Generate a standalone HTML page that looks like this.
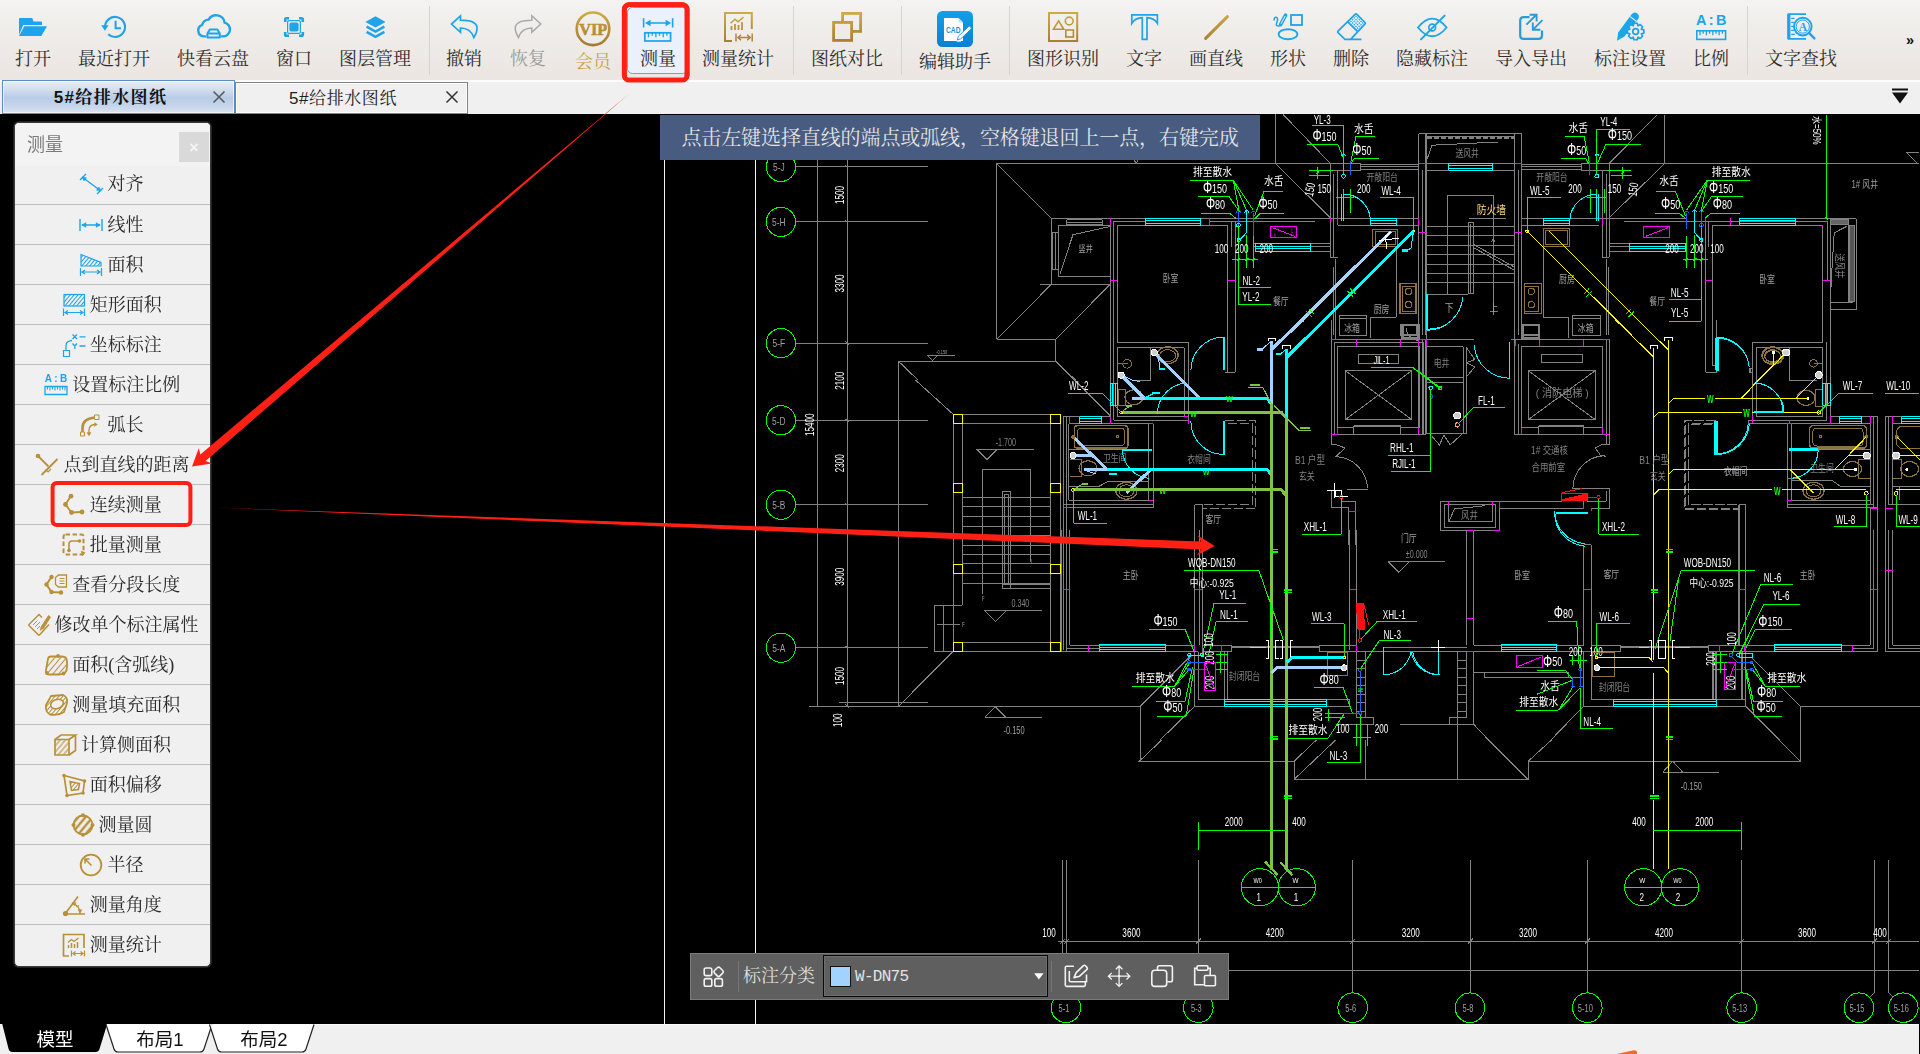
<!DOCTYPE html>
<html lang="zh-CN">
<head>
<meta charset="utf-8">
<title>CAD 测量</title>
<style>
*{box-sizing:border-box;margin:0;padding:0}
html,body{width:1920px;height:1054px;overflow:hidden;background:#000}
body{position:relative;font-family:"Liberation Serif","Noto Serif CJK SC",serif;color:#333}
#toolbar{position:absolute;left:0;top:0;width:1920px;height:80px;background:linear-gradient(#f4f3f1 0,#f0eeeb 30%,#ece7e3 85%,#ebe6e1 100%)}
.ti{position:absolute;top:0;height:80px;width:0}
.ti svg{position:absolute;left:-16px;top:11px;width:32px;height:32px;overflow:visible}
.ti span{position:absolute;left:-60px;width:120px;top:47px;text-align:center;font-size:18px;line-height:24px;white-space:nowrap;color:#2e2e2e;letter-spacing:0}
.ti.dis span{color:#9a9a9a}
.ti.low span{top:50px}
.ti.vip span{color:#c9a243}
.sep{position:absolute;top:6px;height:69px;width:1px;background:#d6d3d0}
#tabs{position:absolute;left:0;top:80px;width:1920px;height:34px;background:linear-gradient(#fbfbfb 0,#fbfbfb 2px,#f0f0f0 2px)}
.tab{position:absolute;top:1px;height:32px;font-family:"Liberation Sans","Noto Serif CJK SC",serif;font-size:17px;line-height:31px;text-align:center;color:#222}
#canvas{position:absolute;left:0;top:114px;width:1920px;height:910px;overflow:hidden;background:#000}
#bottom{position:absolute;left:0;top:1024px;width:1919px;height:30px;background:#f0f0f0;border-top:1px solid #fbfbfb}
#panel{position:absolute;left:14px;top:122px;width:197px;height:845px;background:#f0f0f0;border:1px solid #3a3a3a;border-radius:5px;box-shadow:0 0 0 1px #222;overflow:hidden}
.prow{position:absolute;left:0;width:195px;height:40px;border-top:1px solid #bdbdbd;font-size:18px;line-height:41px;white-space:nowrap;color:#2a2a2a}
.prow span{position:absolute;top:0}
.prow svg{position:absolute;top:8px;width:24px;height:24px;overflow:visible}
</style>
</head>
<body>
<div id="toolbar">
<div class="sep" style="left:429px"></div>
<div class="sep" style="left:793px"></div>
<div class="sep" style="left:901px"></div>
<div class="sep" style="left:1009px"></div>
<div class="sep" style="left:1747px"></div>
<svg width="1920" height="84" viewBox="0 0 1920 84" style="position:absolute;left:0;top:0;overflow:visible"><defs><linearGradient id="gold" x1="0" y1="0" x2="0" y2="1" gradientUnits="objectBoundingBox"><stop offset="0" stop-color="#d0aa45"/><stop offset="1" stop-color="#a67f33"/></linearGradient><linearGradient id="goldu" x1="0" y1="11" x2="0" y2="44" gradientUnits="userSpaceOnUse"><stop offset="0" stop-color="#d2ac46"/><stop offset="1" stop-color="#a47c31"/></linearGradient><linearGradient id="cadbg" x1="0" y1="0" x2="0" y2="1"><stop offset="0" stop-color="#12a0ea"/><stop offset="1" stop-color="#0b7fd0"/></linearGradient><pattern id="dots" width="2.4" height="2.4" patternUnits="userSpaceOnUse" patternTransform="rotate(45)"><rect width="2.4" height="2.4" fill="#eaf4fb"/><rect width="1.4" height="1.4" fill="#1da4ea"/></pattern></defs>
<rect x="627.5" y="7.5" width="60" height="66" rx="5" fill="#eaf1fc" stroke="#6d9eea" stroke-width="1"/>
<path d="M19,18.8Q19,18 19.8,18H32.2L33.6,21.5H41.4Q42,21.5 42,22.2V25H23.3L19,34.8Z" fill="#1da4ea"/>
<path d="M24.3,26.2H47L41.3,36H19Z" fill="#1da4ea"/>
<path d="M105,27A10,10 0 1 1 108.2,34.3" fill="none" stroke="#1da4ea" stroke-width="2.2"/>
<path d="M101.2,25.2H108.6L104.9,30.8Z" fill="#1da4ea"/>
<path d="M115.6,20.8V28.2H121" fill="none" stroke="#1da4ea" stroke-width="2"/>
<path d="M205.2,36.4H203.6A6,6 0 0 1 202.2,24.8A7,7 0 0 1 208.6,19.6A8.6,8.6 0 0 1 224.6,22.6A7,7 0 0 1 222.6,36.4H221.8" fill="none" stroke="#1da4ea" stroke-width="2.4" stroke-linecap="round"/>
<path d="M209.8,29.4H217.4L219.8,33.6V37.4H207.4V33.6ZM207.4,33.6H219.8" fill="none" stroke="#1da4ea" stroke-width="2" stroke-linejoin="round"/>
<path d="M285.2,22V19.5Q285.2,18.2 286.5,18.2H289M299,18.2H301.5Q302.8,18.2 302.8,19.5V22M302.8,32V34.5Q302.8,35.8 301.5,35.8H299M289,35.8H286.5Q285.2,35.8 285.2,34.5V32" fill="none" stroke="#1da4ea" stroke-width="2.6"/>
<rect x="287.6" y="20.6" width="12.8" height="12.8" rx="1.5" fill="none" stroke="#1da4ea" stroke-width="1.2"/>
<rect x="289.4" y="22.4" width="9.2" height="9.2" rx="2" fill="#1da4ea"/>
<path d="M375.5,16.2L385.6,21.9L375.5,27.6L365.4,21.9Z" fill="#1da4ea"/>
<path d="M366.6,26.6L375.5,31.6L384.4,26.6M366.6,31.8L375.5,36.8L384.4,31.8" fill="none" stroke="#1da4ea" stroke-width="2.6"/>
<path d="M460.5,15.8L451.5,24L460.5,32.3V28C467,28 471.5,30.5 473.8,37.5C476,34 477.5,31 477,27C476,22 470,20.2 460.5,20.2Z" fill="none" stroke="#1da4ea" stroke-width="1.7" stroke-linejoin="miter"/>
<g transform="translate(992.3,0) scale(-1,1)"><path d="M460.5,15.8L451.5,24L460.5,32.3V28C467,28 471.5,30.5 473.8,37.5C476,34 477.5,31 477,27C476,22 470,20.2 460.5,20.2Z" fill="none" stroke="#a9a9a9" stroke-width="1.5"/></g>
<circle cx="593" cy="28.8" r="16.3" fill="none" stroke="url(#goldu)" stroke-width="2.6"/>
<text x="593.2" y="34.6" text-anchor="middle" font-family="Liberation Serif,serif" font-weight="bold" font-size="16.5" fill="url(#goldu)" stroke="#b8892c" stroke-width="0.5" textLength="28" lengthAdjust="spacingAndGlyphs">VIP</text>
<path d="M643.6,18.2V27.6M672.6,18.2V27.6M647,23H669" stroke="#1da4ea" stroke-width="1.6" fill="none"/>
<path d="M645,23L650.6,19.8V26.2ZM671.2,23L665.6,19.8V26.2Z" fill="#1da4ea"/>
<rect x="644.8" y="32.8" width="25.800000000000068" height="8.200000000000003" fill="none" stroke="#1da4ea" stroke-width="1.7"/><path d="M648.5,32.8v4.5M652.2,32.8v3M655.9,32.8v4.5M659.5,32.8v3M663.2,32.8v4.5M666.9,32.8v3" stroke="#1da4ea" stroke-width="1.3" fill="none"/>
<path d="M751.8,29V13H725V41H732" fill="none" stroke="url(#goldu)" stroke-width="2"/>
<path d="M731.5,30v-4M735,30v-6M738.5,30v-5M742,30v-8" stroke="url(#goldu)" stroke-width="1.8" fill="none"/>
<path d="M730.5,23.2L735,19.2L738,21.8L743.5,17.2" stroke="url(#goldu)" stroke-width="1.5" fill="none"/>
<path d="M736,33.5V41.5M752.2,33.5V41.5M738,37.5H750.2M741,34.8L738,37.5L741,40.2M747.2,34.8L750.2,37.5L747.2,40.2" stroke="url(#goldu)" stroke-width="1.5" fill="none"/>
<rect x="842.6" y="13.4" width="18" height="18" fill="none" stroke="url(#goldu)" stroke-width="2.8"/>
<rect x="833.6" y="22.4" width="18" height="18" fill="#eeebe8" stroke="url(#goldu)" stroke-width="2.8"/>
<rect x="937" y="11" width="36" height="36" rx="5.5" fill="url(#cadbg)"/>
<path d="M944,18H958.5L963,22.5V41H944Z" fill="#fff"/><path d="M958.5,18V22.5H963Z" fill="#bfe3f8"/>
<text x="946" y="32.6" font-family="Liberation Sans,sans-serif" font-weight="bold" font-size="8.6" fill="#1591dc" textLength="14.5" lengthAdjust="spacingAndGlyphs">CAD</text>
<path d="M957.2,40.2L958.4,36.2L968.2,26.8Q969.6,25.6 970.8,27Q971.8,28.4 970.6,29.6L960.8,38.8Z" fill="#fff" stroke="#1591dc" stroke-width="0.9"/><path d="M956.5,41.2H961" stroke="#fff" stroke-width="1"/>
<rect x="1049" y="13" width="28.2" height="28" fill="none" stroke="url(#goldu)" stroke-width="2"/>
<path d="M1053.4,29.3L1058.6,20.8L1063.8,29.3Z" fill="none" stroke="url(#goldu)" stroke-width="1.6"/>
<circle cx="1069.2" cy="21" r="3.9" fill="none" stroke="url(#goldu)" stroke-width="1.6"/>
<rect x="1065.8" y="30" width="7.6" height="7" fill="none" stroke="url(#goldu)" stroke-width="1.6"/>
<path d="M1131.8,14.8H1157.4V23.4C1155,19.6 1151.5,17.8 1147,17.7V39.4H1142.3V17.7C1137.8,17.8 1134.2,19.6 1131.8,23.4Z" fill="none" stroke="#1da4ea" stroke-width="1.7"/>
<path d="M1205.6,38.4L1227.4,16.6" stroke="url(#goldu)" stroke-width="3" stroke-linecap="round"/>
<rect x="1291" y="15" width="11" height="10" fill="none" stroke="#1da4ea" stroke-width="1.8"/>
<ellipse cx="1288" cy="34.2" rx="9.4" ry="5" fill="none" stroke="#1da4ea" stroke-width="1.9"/>
<path d="M1274.4,20.5C1273.2,16.5 1277.8,16 1277.6,19.6C1277.4,23.4 1273.6,26 1279.6,26.2" fill="none" stroke="#1da4ea" stroke-width="1.5"/>
<path d="M1285.6,15.2L1280.6,24.6" stroke="#1da4ea" stroke-width="3.6" stroke-linecap="round"/><path d="M1285.2,16L1281,23.8" stroke="#eef" stroke-width="1" />
<path d="M1348,22.2L1355.6,14.3Q1356.2,13.6 1356.9,14.3L1364.9,22.3Q1365.6,23 1364.9,23.7L1357.3,31.4Z" fill="url(#dots)"/>
<path d="M1355.3,14.2Q1356,13.5 1356.7,14.2L1365,22.5Q1365.7,23.2 1365,23.9L1350.6,39.4H1345L1338,32.6Q1337.3,31.9 1338,31.2ZM1348,22.2L1357.4,31.4M1350.6,39.4H1361.4" fill="none" stroke="#1da4ea" stroke-width="1.7" stroke-linejoin="round"/>
<path d="M1418,27.5Q1432.2,9.8 1446.6,27.5Q1432.2,45 1418,27.5Z" fill="none" stroke="#1da4ea" stroke-width="1.8"/>
<circle cx="1432.2" cy="27.5" r="3.4" fill="none" stroke="#1da4ea" stroke-width="1.7"/>
<path d="M1421,39.4L1444.6,15.6" stroke="#1da4ea" stroke-width="2" stroke-linecap="round"/>
<path d="M1529.5,17.2H1523.6Q1520.2,17.2 1520.2,20.6V35.4Q1520.2,38.8 1523.6,38.8H1538.6Q1542,38.8 1542,35.4V30.5" fill="none" stroke="#2a9bd6" stroke-width="2.2"/>
<path d="M1526.4,24.6L1536.4,14.8M1529.6,14.7H1536.6V21.6" fill="none" stroke="#2a9bd6" stroke-width="1.9"/>
<path d="M1542.4,20.2L1533,29.6M1532.8,22.6V29.8H1540.4" fill="none" stroke="#2a9bd6" stroke-width="1.9"/>
<path d="M1631.6,14.2Q1634.4,11.2 1637.4,13.6Q1640.4,16.4 1637.8,19.4L1624.4,36.6L1617,40.8L1618.2,32.4Z" fill="#1da4ea"/>
<path d="M1630.2,16.6L1636.4,21.4" stroke="#eef3f6" stroke-width="1.2"/>
<polygon points="1643.83,29.83 1643.83,33.17 1641.33,33.86 1641.32,33.89 1642.60,36.14 1640.24,38.50 1637.99,37.22 1637.96,37.23 1637.27,39.73 1633.93,39.73 1633.24,37.23 1633.21,37.22 1630.96,38.50 1628.60,36.14 1629.88,33.89 1629.87,33.86 1627.37,33.17 1627.37,29.83 1629.87,29.14 1629.88,29.11 1628.60,26.86 1630.96,24.50 1633.21,25.78 1633.24,25.77 1633.93,23.27 1637.27,23.27 1637.96,25.77 1637.99,25.78 1640.24,24.50 1642.60,26.86 1641.32,29.11 1641.33,29.14" fill="#efece9" stroke="#1da4ea" stroke-width="1.7" stroke-linejoin="round"/>
<circle cx="1635.6" cy="31.5" r="2.8" fill="none" stroke="#1da4ea" stroke-width="1.8"/>
<text x="1711.2" y="24.7" text-anchor="middle" font-family="Liberation Sans,sans-serif" font-weight="bold" font-size="14.5" fill="#1da4ea" textLength="30.5" lengthAdjust="spacing">A:B</text>
<rect x="1696.8" y="30.8" width="28.799999999999955" height="8.599999999999998" fill="none" stroke="#1da4ea" stroke-width="1.6"/><path d="M1700.0,30.8v4.5M1703.2,30.8v3M1706.4,30.8v4.5M1709.6,30.8v3M1712.8,30.8v4.5M1716.0,30.8v3M1719.2,30.8v4.5M1722.4,30.8v3" stroke="#1da4ea" stroke-width="1.3" fill="none"/>
<path d="M1806,14.2H1788.6V38.8H1806" fill="none" stroke="#1da4ea" stroke-width="1.8"/><path d="M1788.8,14V39" stroke="#1da4ea" stroke-width="3.2"/>
<path d="M1791.2,18.4h3.4M1791.2,22.4h2.6M1791.2,26.4h2.2M1791.2,30.4h2.6M1791.2,34.4h3.6" stroke="#1da4ea" stroke-width="1.2"/>
<circle cx="1802.8" cy="26.6" r="8.8" fill="#efece9" stroke="#1da4ea" stroke-width="2"/><circle cx="1802.8" cy="26.6" r="6.6" fill="none" stroke="#1da4ea" stroke-width="1"/>
<text x="1802.8" y="30.6" text-anchor="middle" font-family="Liberation Serif,serif" font-weight="bold" font-size="11.5" fill="#1da4ea">A</text>
<path d="M1809.2,33.2L1814.4,38.4" stroke="#1da4ea" stroke-width="2.4" stroke-linecap="round"/>
<rect x="624.3" y="4.6" width="62.8" height="75.6" rx="5" fill="none" stroke="#ff1f14" stroke-width="4.8"/></svg>
<div class="ti " style="left:33px"><span>打开</span></div>
<div class="ti " style="left:114px"><span>最近打开</span></div>
<div class="ti " style="left:213px"><span>快看云盘</span></div>
<div class="ti " style="left:294px"><span>窗口</span></div>
<div class="ti " style="left:375px"><span>图层管理</span></div>
<div class="ti " style="left:464px"><span>撤销</span></div>
<div class="ti dis" style="left:528px"><span>恢复</span></div>
<div class="ti vip low" style="left:593px"><span>会员</span></div>
<div class="ti " style="left:658px"><span>测量</span></div>
<div class="ti " style="left:738px"><span>测量统计</span></div>
<div class="ti " style="left:847px"><span>图纸对比</span></div>
<div class="ti low" style="left:955px"><span>编辑助手</span></div>
<div class="ti " style="left:1063px"><span>图形识别</span></div>
<div class="ti " style="left:1144px"><span>文字</span></div>
<div class="ti " style="left:1216px"><span>画直线</span></div>
<div class="ti " style="left:1288px"><span>形状</span></div>
<div class="ti " style="left:1351px"><span>删除</span></div>
<div class="ti " style="left:1432px"><span>隐藏标注</span></div>
<div class="ti " style="left:1531px"><span>导入导出</span></div>
<div class="ti " style="left:1630px"><span>标注设置</span></div>
<div class="ti " style="left:1711px"><span>比例</span></div>
<div class="ti " style="left:1801px"><span>文字查找</span></div>
<div style="position:absolute;left:1903px;top:30px;width:14px;font-family:'Liberation Sans',sans-serif;font-weight:bold;font-size:14.5px;line-height:20px;color:#111;text-align:center">»</div>
</div><div id="tabs">
<div class="tab" style="left:2px;width:233px;top:0;height:34px;border:1px solid #5f8bc9;box-shadow:inset 0 0 0 1px rgba(255,255,255,.6);background:linear-gradient(#e8eef8 0,#d3dfef 25%,#b9cce6 52%,#c3d3ea 75%,#d9e3f1 100%);font-weight:bold;color:#111;letter-spacing:1.4px"><span style="position:absolute;left:0;width:215px;top:1px;text-align:center">5#给排水图纸</span><svg style="position:absolute;left:209px;top:9px" width="14" height="14" viewBox="0 0 14 14"><path d="M1.5,1.5L12.5,12.5M12.5,1.5L1.5,12.5" stroke="#5a5a5a" stroke-width="1.6"/></svg></div>
<div class="tab" style="left:235px;width:233px;top:2px;height:32px;border:1px solid #828282;box-shadow:inset 0 0 0 1px #fcfcfc;background:#f0f0f0"><span style="position:absolute;left:0;width:214px;top:1px;text-align:center;line-height:30px;letter-spacing:0.6px">5#给排水图纸</span><svg style="position:absolute;left:209px;top:7px" width="14" height="14" viewBox="0 0 14 14"><path d="M1.5,1.5L12.5,12.5M12.5,1.5L1.5,12.5" stroke="#333" stroke-width="1.5"/></svg></div>
<svg style="position:absolute;left:1890px;top:6px" width="20" height="20" viewBox="1890 86 20 20"><path d="M1892,88.4H1908V90.6H1892ZM1892,92.6H1908L1900,103.6Z" fill="#111"/></svg>
</div><div id="canvas"><svg width="1920" height="910" viewBox="0 114 1920 910" style="position:absolute;left:0;top:0;will-change:transform" shape-rendering="crispEdges"><path d="M795.5,166.9L928.2,166.9" stroke="#828282" stroke-width="1" fill="none"/>
<path d="M795.5,221.9L928.2,221.9" stroke="#828282" stroke-width="1" fill="none"/>
<path d="M795.5,343.1L928.2,343.1" stroke="#828282" stroke-width="1" fill="none"/>
<path d="M795.5,420.2L928.2,420.2" stroke="#828282" stroke-width="1" fill="none"/>
<path d="M795.5,504.7L928.2,504.7" stroke="#828282" stroke-width="1" fill="none"/>
<path d="M795.5,647.7L928.2,647.7" stroke="#828282" stroke-width="1" fill="none"/>
<path d="M817.5,116L817.5,706.6" stroke="#828282" stroke-width="1" fill="none"/>
<path d="M847,116L847,706.6" stroke="#828282" stroke-width="1" fill="none"/>
<path d="M845.4,165.3L848.5,168.4" stroke="#828282" stroke-width="1" fill="none"/>
<path d="M845.4,220.4L848.5,223.5" stroke="#828282" stroke-width="1" fill="none"/>
<path d="M845.4,341.6L848.5,344.6" stroke="#828282" stroke-width="1" fill="none"/>
<path d="M845.4,418.7L848.5,421.8" stroke="#828282" stroke-width="1" fill="none"/>
<path d="M845.4,503.2L848.5,506.3" stroke="#828282" stroke-width="1" fill="none"/>
<path d="M845.4,646.1L848.5,649.2" stroke="#828282" stroke-width="1" fill="none"/>
<path d="M845.4,704.5L848.5,707.6" stroke="#828282" stroke-width="1" fill="none"/>
<path d="M996.6,339.3L996.6,163.3L1120,163.3" stroke="#828282" stroke-width="1" fill="none"/>
<path d="M996.6,163.3L1051.6,218.4" stroke="#828282" stroke-width="1" fill="none"/>
<path d="M1120,218.4L1051.6,218.4L1051.6,284.2L1110.3,284.2" stroke="#828282" stroke-width="1" fill="none"/>
<path d="M1051.6,284.2L996.6,339.3" stroke="#828282" stroke-width="1" fill="none"/>
<path d="M996.6,339.3L1055.5,339.3" stroke="#828282" stroke-width="1" fill="none"/>
<path d="M1110,284.9L1055.5,339.3" stroke="#828282" stroke-width="1" fill="none"/>
<path d="M1055.5,339.3L1055.5,361" stroke="#828282" stroke-width="1" fill="none"/>
<path d="M898.2,361L1055.5,361" stroke="#828282" stroke-width="1" fill="none"/>
<path d="M1055.5,361L1075.5,380" stroke="#828282" stroke-width="1" fill="none"/>
<path d="M898.2,361L917.9,380" stroke="#828282" stroke-width="1" fill="none"/>
<path d="M1058,225.3L1110.3,225.3L1110.3,276.5L1058,276.5Z" stroke="#828282" stroke-width="1" fill="none"/>
<path d="M1066.5,219.6L1102.3,219.6" stroke="#828282" stroke-width="1" fill="none"/>
<path d="M1066.5,222.1L1102.3,222.1" stroke="#828282" stroke-width="1" fill="none"/>
<path d="M1066.5,224.5L1102.3,224.5" stroke="#828282" stroke-width="1" fill="none"/>
<path d="M1066.5,219.6L1066.5,224.5" stroke="#828282" stroke-width="1" fill="none"/>
<path d="M1102.3,219.6L1102.3,224.5" stroke="#828282" stroke-width="1" fill="none"/>
<path d="M1052.4,232.4L1052.4,269.3" stroke="#828282" stroke-width="1" fill="none"/>
<path d="M1055.2,232.4L1055.2,269.3" stroke="#828282" stroke-width="1" fill="none"/>
<path d="M1058,232.4L1058,269.3" stroke="#828282" stroke-width="1" fill="none"/>
<path d="M1052.4,232.4L1058,232.4" stroke="#828282" stroke-width="1" fill="none"/>
<path d="M1052.4,269.3L1058,269.3" stroke="#828282" stroke-width="1" fill="none"/>
<path d="M1110.3,226.5L1072.9,234.7L1060.1,273.9" stroke="#828282" stroke-width="1" fill="none"/>
<path d="M926.9,355.4L954.5,355.4" stroke="#828282" stroke-width="1" fill="none"/>
<path d="M927.4,355.4L932.5,360.5L937.6,355.4" stroke="#828282" stroke-width="1" fill="none"/>
<path d="M898.7,361L898.7,706.1" stroke="#828282" stroke-width="1" fill="none"/>
<path d="M915.4,380L953,414.1" stroke="#828282" stroke-width="1" fill="none"/>
<path d="M953,414.1L1060.3,414.1" stroke="#828282" stroke-width="1" fill="none"/>
<path d="M962.5,423.5L1050.6,423.5" stroke="#828282" stroke-width="1" fill="none"/>
<path d="M953.8,414.1L953.8,650" stroke="#828282" stroke-width="1" fill="none"/>
<path d="M962.2,423.5L962.2,605.4" stroke="#828282" stroke-width="1" fill="none"/>
<path d="M1050.6,423.5L1050.6,650" stroke="#828282" stroke-width="1" fill="none"/>
<path d="M1060.3,414.1L1060.3,650" stroke="#828282" stroke-width="1" fill="none"/>
<path d="M1063.2,415.9L1063.2,650" stroke="#828282" stroke-width="1" fill="none"/>
<path d="M1066.5,415.9L1066.5,650" stroke="#828282" stroke-width="1" fill="none"/>
<path d="M962.2,497.3L1050.6,497.3" stroke="#828282" stroke-width="1" fill="none"/>
<path d="M962.2,506.8L1050.6,506.8" stroke="#828282" stroke-width="1" fill="none"/>
<path d="M962.2,516.5L1050.6,516.5" stroke="#828282" stroke-width="1" fill="none"/>
<path d="M962.2,526L1050.6,526" stroke="#828282" stroke-width="1" fill="none"/>
<path d="M962.2,535.7L1050.6,535.7" stroke="#828282" stroke-width="1" fill="none"/>
<path d="M962.2,545.2L1050.6,545.2" stroke="#828282" stroke-width="1" fill="none"/>
<path d="M962.2,554.2L1050.6,554.2" stroke="#828282" stroke-width="1" fill="none"/>
<path d="M962.2,563.9L1050.6,563.9" stroke="#828282" stroke-width="1" fill="none"/>
<path d="M962.2,573.9L1050.6,573.9" stroke="#828282" stroke-width="1" fill="none"/>
<path d="M962.2,583.6L1050.6,583.6" stroke="#828282" stroke-width="1" fill="none"/>
<path d="M1002.4,491.9L1010.6,491.9L1010.6,588.8L1002.4,588.8Z" stroke="#828282" stroke-width="1" fill="none"/>
<path d="M1004.8,494.5L1008.3,494.5L1008.3,583.6L1004.8,583.6Z" stroke="#828282" stroke-width="1" fill="none"/>
<path d="M1002.4,584.9L1050.6,584.9" stroke="#828282" stroke-width="1" fill="none"/>
<path d="M1002.4,588.8L1050.6,588.8" stroke="#828282" stroke-width="1" fill="none"/>
<path d="M982.7,593.9L982.7,469.7L1030.6,469.7L1030.6,561.9" stroke="#828282" stroke-width="1" fill="none"/>
<path d="M976.8,449.2L987.1,459.4L997.3,449.2" stroke="#828282" stroke-width="1" fill="none"/>
<path d="M976.1,449.2L1034,449.2" stroke="#828282" stroke-width="1" fill="none"/>
<path d="M984.5,610.5L995.5,621.5L1006.5,610.5" stroke="#828282" stroke-width="1" fill="none"/>
<path d="M984.5,610.5L1041.6,610.5" stroke="#828282" stroke-width="1" fill="none"/>
<path d="M962.2,605.4L934.6,605.4L934.6,650" stroke="#828282" stroke-width="1" fill="none"/>
<path d="M943.5,605.4L943.5,650" stroke="#828282" stroke-width="1" fill="none"/>
<path d="M937.1,624.6L960.2,624.6" stroke="#828282" stroke-width="1" fill="none"/>
<path d="M953.3,642L1060.3,642" stroke="#828282" stroke-width="1" fill="none"/>
<path d="M934.6,651.5L1060.3,651.5" stroke="#828282" stroke-width="1" fill="none"/>
<path d="M934.6,640L934.6,651.5" stroke="#828282" stroke-width="1" fill="none"/>
<path d="M943.5,640L943.5,651.5" stroke="#828282" stroke-width="1" fill="none"/>
<path d="M953,651.5L898.7,706.1" stroke="#828282" stroke-width="1" fill="none"/>
<path d="M809,706.1L1140,706.1" stroke="#828282" stroke-width="1" fill="none"/>
<path d="M838.5,702.2L928.2,702.2" stroke="#828282" stroke-width="1" fill="none"/>
<path d="M984.5,717.4L995.3,706.6L1006,717.4" stroke="#828282" stroke-width="1" fill="none"/>
<path d="M984.5,717.4L1041.6,717.4" stroke="#828282" stroke-width="1" fill="none"/>
<path d="M1062.5,860L1062.5,993" stroke="#828282" stroke-width="1" fill="none"/>
<path d="M1066.5,860L1066.5,993" stroke="#828282" stroke-width="1" fill="none"/>
<path d="M1198.4,860L1198.4,993" stroke="#828282" stroke-width="1" fill="none"/>
<path d="M1352.7,860L1352.7,993" stroke="#828282" stroke-width="1" fill="none"/>
<path d="M1470.3,860L1470.3,993" stroke="#828282" stroke-width="1" fill="none"/>
<path d="M1587.4,860L1587.4,993" stroke="#828282" stroke-width="1" fill="none"/>
<path d="M1741.5,860L1741.5,993" stroke="#828282" stroke-width="1" fill="none"/>
<path d="M1874.3,860L1874.3,992.6" stroke="#828282" stroke-width="1" fill="none"/>
<path d="M1888.6,860L1888.6,992.6" stroke="#828282" stroke-width="1" fill="none"/>
<path d="M1874.3,992.6L1870,996.8" stroke="#828282" stroke-width="1" fill="none"/>
<path d="M1888.6,992.6L1892.6,996.8" stroke="#828282" stroke-width="1" fill="none"/>
<path d="M1058,941.3L1919,941.3" stroke="#828282" stroke-width="1" fill="none"/>
<path d="M1058,970.7L1919,970.7" stroke="#828282" stroke-width="1" fill="none"/>
<path d="M1060,943.8L1065,938.8" stroke="#828282" stroke-width="1" fill="none"/>
<path d="M1064,943.8L1069,938.8" stroke="#828282" stroke-width="1" fill="none"/>
<path d="M1195.9,943.8L1200.9,938.8" stroke="#828282" stroke-width="1" fill="none"/>
<path d="M1350.2,943.8L1355.2,938.8" stroke="#828282" stroke-width="1" fill="none"/>
<path d="M1467.8,943.8L1472.8,938.8" stroke="#828282" stroke-width="1" fill="none"/>
<path d="M1584.9,943.8L1589.9,938.8" stroke="#828282" stroke-width="1" fill="none"/>
<path d="M1739,943.8L1744,938.8" stroke="#828282" stroke-width="1" fill="none"/>
<path d="M1871.8,943.8L1876.8,938.8" stroke="#828282" stroke-width="1" fill="none"/>
<path d="M1886.1,943.8L1891.1,938.8" stroke="#828282" stroke-width="1" fill="none"/>
<path d="M1161.7,740L1139.3,761.3L1294,761.3L1294,779.5L1440,779.5" stroke="#828282" stroke-width="1" fill="none"/>
<path d="M1294,761.3L1316.4,740" stroke="#828282" stroke-width="1" fill="none"/>
<path d="M1294,779.5L1335.6,740" stroke="#828282" stroke-width="1" fill="none"/>
<path d="M1365.5,740L1365.5,779.5" stroke="#828282" stroke-width="1" fill="none"/>
<path d="M1400,779.5L1528.1,779.5L1528.1,761.3L1800,761.3" stroke="#828282" stroke-width="1" fill="none"/>
<path d="M1457.6,740L1457.6,779.5" stroke="#828282" stroke-width="1" fill="none"/>
<path d="M1528.1,779.5L1488.6,740" stroke="#828282" stroke-width="1" fill="none"/>
<path d="M1528.1,761.3L1551.5,740" stroke="#828282" stroke-width="1" fill="none"/>
<path d="M1680,761.4L1800.6,761.4L1800.6,740" stroke="#828282" stroke-width="1" fill="none"/>
<path d="M1800.6,761.4L1778.7,740" stroke="#828282" stroke-width="1" fill="none"/>
<path d="M1662.5,772.4L1672.8,761.3L1683,772.4" stroke="#828282" stroke-width="1" fill="none"/>
<path d="M1662.5,772.4L1719.1,772.4" stroke="#828282" stroke-width="1" fill="none"/>
<path d="M1275.4,110L1275.4,163.4" stroke="#828282" stroke-width="1" fill="none"/>
<path d="M1040,163.4L1330.3,163.4" stroke="#828282" stroke-width="1" fill="none"/>
<path d="M1283.3,114.7L1330.3,163.4" stroke="#828282" stroke-width="1" fill="none"/>
<path d="M1275.4,163.4L1330.3,217.8" stroke="#828282" stroke-width="1" fill="none"/>
<path d="M1133.9,160.4L1136.1,162.7L1138.2,160.4" stroke="#828282" stroke-width="1" fill="none"/>
<path d="M1051.7,218.4L1330.3,218.4" stroke="#828282" stroke-width="1" fill="none"/>
<path d="M1113.6,221L1145,221" stroke="#828282" stroke-width="1" fill="none"/>
<path d="M1209.3,221L1315.3,221" stroke="#828282" stroke-width="1" fill="none"/>
<path d="M1117.3,225.3L1227.4,225.3" stroke="#828282" stroke-width="1" fill="none"/>
<path d="M1110.4,218.4L1110.4,335" stroke="#828282" stroke-width="1" fill="none"/>
<path d="M1113.6,221L1113.6,335" stroke="#828282" stroke-width="1" fill="none"/>
<path d="M1117.3,225.3L1117.3,335" stroke="#828282" stroke-width="1" fill="none"/>
<path d="M1227.4,225.3L1227.4,335" stroke="#828282" stroke-width="1" fill="none"/>
<path d="M1235.3,221L1235.3,335" stroke="#828282" stroke-width="1" fill="none"/>
<path d="M1231,221L1231,246.6" stroke="#828282" stroke-width="1" fill="none"/>
<path d="M1253.4,243.4L1330.3,243.4" stroke="#828282" stroke-width="1" fill="none"/>
<path d="M1253.4,246.6L1330.3,246.6" stroke="#828282" stroke-width="1" fill="none"/>
<path d="M1311.1,251.5L1330.3,251.5" stroke="#828282" stroke-width="1" fill="none"/>
<path d="M1330.3,163.4L1330.3,257.3" stroke="#828282" stroke-width="1" fill="none"/>
<path d="M1333.5,174L1333.5,257.3" stroke="#828282" stroke-width="1" fill="none"/>
<path d="M1337.8,170.8L1337.8,225.3" stroke="#828282" stroke-width="1" fill="none"/>
<path d="M1330.3,257.3L1337.8,257.3" stroke="#828282" stroke-width="1" fill="none"/>
<path d="M1330.3,163.4L1360.2,163.4L1360.2,170.8L1330.3,170.8Z" stroke="#828282" stroke-width="1" fill="none"/>
<path d="M1360.2,164.4L1418.9,164.4" stroke="#828282" stroke-width="1" fill="none"/>
<path d="M1360.2,166.6L1418.9,166.6" stroke="#828282" stroke-width="1" fill="none"/>
<path d="M1360.2,169.3L1418.9,169.3" stroke="#828282" stroke-width="1" fill="none"/>
<path d="M1315.3,218.4L1418.9,218.4" stroke="#828282" stroke-width="1" fill="none"/>
<path d="M1337.8,225.3L1418.9,225.3" stroke="#828282" stroke-width="1" fill="none"/>
<path d="M1418.9,133.5L1418.9,335" stroke="#828282" stroke-width="1" fill="none"/>
<path d="M1425.9,133.5L1425.9,335" stroke="#828282" stroke-width="1" fill="none"/>
<path d="M1396,246.6L1396,317" stroke="#828282" stroke-width="1" fill="none"/>
<path d="M1335.6,259.4L1335.6,335" stroke="#828282" stroke-width="1" fill="none"/>
<path d="M1333.5,266.9L1333.5,335" stroke="#828282" stroke-width="1" fill="none"/>
<path d="M1339.9,315.3L1366.6,315.3L1366.6,335L1339.9,335Z" stroke="#828282" stroke-width="1" fill="none"/>
<path d="M1339.9,318.1L1366.6,318.1" stroke="#828282" stroke-width="1" fill="none"/>
<path d="M1370.8,317L1396,317" stroke="#828282" stroke-width="1" fill="none"/>
<path d="M1370.8,317L1370.8,335" stroke="#828282" stroke-width="1" fill="none"/>
<path d="M1402.9,324.5L1418.9,324.5L1418.9,335L1402.9,335Z" stroke="#828282" stroke-width="2" fill="none"/>
<path d="M1040,284L1110.4,284L1060.3,335" stroke="#828282" stroke-width="1" fill="none"/>
<path d="M1040,295.7L1051.7,284" stroke="#828282" stroke-width="1" fill="none"/>
<path d="M1418.8,133.5L1418.8,335" stroke="#828282" stroke-width="1" fill="none"/>
<path d="M1426,133.5L1426,335" stroke="#828282" stroke-width="1" fill="none"/>
<path d="M1514.8,133.5L1514.8,335" stroke="#828282" stroke-width="1" fill="none"/>
<path d="M1521.7,133.5L1521.7,335" stroke="#828282" stroke-width="1" fill="none"/>
<path d="M1418.8,133.5L1521.7,133.5" stroke="#828282" stroke-width="1" fill="none"/>
<path d="M1426,136.7L1514.8,136.7" stroke="#828282" stroke-width="1" fill="none"/>
<path d="M1426.7,138.4L1514.2,138.4" stroke="#828282" stroke-width="2" fill="none" stroke-dasharray="5 2"/>
<path d="M1426.7,160.2L1432,145.2L1498.2,142" stroke="#828282" stroke-width="1" fill="none"/>
<path d="M1426,163.4L1514.8,163.4" stroke="#828282" stroke-width="1" fill="none"/>
<path d="M1426,170.4L1514.8,170.4" stroke="#828282" stroke-width="1" fill="none"/>
<path d="M1422.8,170.4L1422.8,335" stroke="#828282" stroke-width="1" fill="none"/>
<path d="M1518,170.4L1518,335" stroke="#828282" stroke-width="1" fill="none"/>
<path d="M1521.7,164.4L1581.4,164.4" stroke="#828282" stroke-width="1" fill="none"/>
<path d="M1521.7,166.6L1581.4,166.6" stroke="#828282" stroke-width="1" fill="none"/>
<path d="M1521.7,169.3L1581.4,169.3" stroke="#828282" stroke-width="1" fill="none"/>
<path d="M1581.4,163.4L1609.2,163.4L1609.2,170.8L1581.4,170.8Z" stroke="#828282" stroke-width="1" fill="none"/>
<path d="M1447.4,195.4L1493.9,195.4" stroke="#828282" stroke-width="1" fill="none"/>
<path d="M1447.4,195.4L1447.4,294.6" stroke="#828282" stroke-width="1" fill="none"/>
<path d="M1493.9,195.4L1493.9,314.9" stroke="#828282" stroke-width="1" fill="none"/>
<path d="M1426.7,226.3L1514.2,226.3" stroke="#828282" stroke-width="1" fill="none"/>
<path d="M1426.7,235.9L1514.2,235.9" stroke="#828282" stroke-width="1" fill="none"/>
<path d="M1426.7,245.5L1514.2,245.5" stroke="#828282" stroke-width="1" fill="none"/>
<path d="M1426.7,254.7L1514.2,254.7" stroke="#828282" stroke-width="1" fill="none"/>
<path d="M1426.7,264.1L1514.2,264.1" stroke="#828282" stroke-width="1" fill="none"/>
<path d="M1426.7,273.3L1514.2,273.3" stroke="#828282" stroke-width="1" fill="none"/>
<path d="M1426.7,282.9L1514.2,282.9" stroke="#828282" stroke-width="1" fill="none"/>
<path d="M1468.3,222.1L1473,222.1L1473,293.6L1468.3,293.6Z" stroke="#828282" stroke-width="1" fill="none"/>
<path d="M1470.4,224.2L1470.4,292.5" stroke="#828282" stroke-width="1" fill="none"/>
<path d="M1468.7,218.9L1505.7,218.9" stroke="#828282" stroke-width="1" fill="none"/>
<path d="M1473.6,244.5L1514.2,266.9" stroke="#828282" stroke-width="1" fill="none"/>
<path d="M1473.6,247.7L1514.2,270.1" stroke="#828282" stroke-width="1" fill="none"/>
<path d="M1493.3,238.1L1493.3,272.2" stroke="#828282" stroke-width="1" fill="none"/>
<path d="M1491.4,242.3L1493.3,238.1L1495.2,242.3" stroke="#828282" stroke-width="1" fill="none"/>
<path d="M1426.7,294.6L1468.3,294.6" stroke="#828282" stroke-width="1" fill="none"/>
<path d="M1401.1,324.5L1417.1,324.5L1417.1,335L1401.1,335Z" stroke="#828282" stroke-width="2" fill="none"/>
<path d="M1522.7,324.5L1538.7,324.5L1538.7,335L1522.7,335Z" stroke="#828282" stroke-width="2" fill="none"/>
<path d="M1400,218.4L1418.8,218.4" stroke="#828282" stroke-width="1" fill="none"/>
<path d="M1400,225.3L1418.8,225.3" stroke="#828282" stroke-width="1" fill="none"/>
<path d="M1521.7,218.4L1686,218.4" stroke="#828282" stroke-width="1" fill="none"/>
<path d="M1521.7,225.3L1598.5,225.3" stroke="#828282" stroke-width="1" fill="none"/>
<path d="M1602.3,170.8L1602.3,257.3" stroke="#828282" stroke-width="1" fill="none"/>
<path d="M1606,174L1606,257.3" stroke="#828282" stroke-width="1" fill="none"/>
<path d="M1609.2,163.4L1609.2,257.3" stroke="#828282" stroke-width="1" fill="none"/>
<path d="M1602.3,257.3L1609.2,257.3" stroke="#828282" stroke-width="1" fill="none"/>
<path d="M1664.7,114.7L1664.7,163.4" stroke="#828282" stroke-width="1" fill="none"/>
<path d="M1609.2,163.4L1800,163.4" stroke="#828282" stroke-width="1" fill="none"/>
<path d="M1657.2,114.7L1609.2,163.4" stroke="#828282" stroke-width="1" fill="none"/>
<path d="M1664.7,163.4L1609.2,217.8" stroke="#828282" stroke-width="1" fill="none"/>
<path d="M1609.2,243.4L1686,243.4" stroke="#828282" stroke-width="1" fill="none"/>
<path d="M1609.2,246.6L1686,246.6" stroke="#828282" stroke-width="1" fill="none"/>
<path d="M1609.2,251.5L1629.5,251.5" stroke="#828282" stroke-width="1" fill="none"/>
<path d="M1543.4,246.6L1543.4,317" stroke="#828282" stroke-width="1" fill="none"/>
<path d="M1543.4,317L1568.6,317" stroke="#828282" stroke-width="1" fill="none"/>
<path d="M1568.6,317L1568.6,335" stroke="#828282" stroke-width="1" fill="none"/>
<path d="M1572.5,315.3L1600.6,315.3L1600.6,335L1572.5,335Z" stroke="#828282" stroke-width="1" fill="none"/>
<path d="M1572.5,318.1L1600.6,318.1" stroke="#828282" stroke-width="1" fill="none"/>
<path d="M1606,259.4L1606,335" stroke="#828282" stroke-width="1" fill="none"/>
<path d="M1608.1,266.9L1608.1,335" stroke="#828282" stroke-width="1" fill="none"/>
<path d="M1705.2,221L1705.2,335" stroke="#828282" stroke-width="1" fill="none"/>
<path d="M1712.1,225.3L1712.1,335" stroke="#828282" stroke-width="1" fill="none"/>
<path d="M1708.4,221L1708.4,246.6" stroke="#828282" stroke-width="1" fill="none"/>
<path d="M1624.1,221L1800,221" stroke="#828282" stroke-width="1" fill="none"/>
<path d="M1712.1,225.3L1800,225.3" stroke="#828282" stroke-width="1" fill="none"/>
<path d="M1680,163.4L1919.2,163.4" stroke="#828282" stroke-width="1" fill="none"/>
<path d="M1906.4,152.3L1918.7,152.3" stroke="#828282" stroke-width="1" fill="none"/>
<path d="M1906.4,152.3L1917.5,163.4" stroke="#828282" stroke-width="1" fill="none"/>
<path d="M1795.3,218.5L1856.2,218.5" stroke="#828282" stroke-width="1" fill="none"/>
<path d="M1707.8,221L1827.3,221" stroke="#828282" stroke-width="1" fill="none"/>
<path d="M1712,225.3L1822.6,225.3" stroke="#828282" stroke-width="1" fill="none"/>
<path d="M1822.6,225.3L1822.6,335.1" stroke="#828282" stroke-width="1" fill="none"/>
<path d="M1827.3,221L1827.3,280.8" stroke="#828282" stroke-width="1" fill="none"/>
<path d="M1830.5,218.5L1830.5,335.1" stroke="#828282" stroke-width="1" fill="none"/>
<path d="M1856.2,218.5L1856.2,309.7" stroke="#828282" stroke-width="1" fill="none"/>
<path d="M1830.5,309.7L1856.2,309.7" stroke="#828282" stroke-width="1" fill="none"/>
<path d="M1830.5,302.2L1853,302.2" stroke="#828282" stroke-width="1" fill="none"/>
<path d="M1830.5,219.3L1848.7,219.3L1848.7,224.2L1830.5,224.2Z" stroke="#828282" stroke-width="1" fill="#666"/>
<path d="M1849.8,225.3L1854.7,225.3L1854.7,301.1L1849.8,301.1Z" stroke="#828282" stroke-width="1" fill="#555"/>
<path d="M1848.7,218.5L1848.7,302.2" stroke="#828282" stroke-width="1" fill="none"/>
<path d="M1846.6,226.4L1834.2,232.8L1831.2,280.8" stroke="#828282" stroke-width="1" fill="none"/>
<path d="M1831.2,274.4L1831.2,287.2" stroke="#828282" stroke-width="2" fill="none"/>
<path d="M1055.5,361L1110.4,416" stroke="#828282" stroke-width="1" fill="none"/>
<path d="M1110.4,320L1110.4,417.1" stroke="#828282" stroke-width="1" fill="none"/>
<path d="M1113.6,320L1113.6,420.3" stroke="#828282" stroke-width="1" fill="none"/>
<path d="M1117.3,320L1117.3,342.4" stroke="#828282" stroke-width="1" fill="none"/>
<path d="M1117.3,342.4L1188.3,342.4" stroke="#828282" stroke-width="1" fill="none"/>
<path d="M1117.3,347.7L1184.1,347.7" stroke="#828282" stroke-width="1" fill="none"/>
<path d="M1117.3,347.7L1117.3,416.1" stroke="#828282" stroke-width="1" fill="none"/>
<path d="M1184.1,347.7L1184.1,416.1" stroke="#828282" stroke-width="1" fill="none"/>
<path d="M1188.3,342.4L1188.3,420.3" stroke="#828282" stroke-width="1" fill="none"/>
<path d="M1117.3,416.1L1184.1,416.1" stroke="#828282" stroke-width="1" fill="none"/>
<path d="M1063.5,416.1L1110.4,416.1" stroke="#828282" stroke-width="1" fill="none"/>
<path d="M1113.6,420.3L1189.4,420.3" stroke="#828282" stroke-width="1" fill="none"/>
<path d="M1068.8,423.5L1148.9,423.5" stroke="#828282" stroke-width="1" fill="none"/>
<path d="M1150.6,347.7L1150.6,380.8L1137.1,380.8" stroke="#828282" stroke-width="1" fill="none"/>
<path d="M1227.4,320L1227.4,372.3" stroke="#828282" stroke-width="1" fill="none"/>
<path d="M1235.3,320L1235.3,372.3" stroke="#828282" stroke-width="1" fill="none"/>
<path d="M1224.8,372.3L1235.3,372.3" stroke="#828282" stroke-width="1" fill="none"/>
<path d="M1224.8,420.3L1255.6,420.3L1255.6,508.9L1202.6,508.9" stroke="#828282" stroke-width="1" fill="none" stroke-dasharray="9 3"/>
<path d="M1227.8,423.9L1252,423.9L1252,504.6L1202.6,504.6" stroke="#828282" stroke-width="1" fill="none" stroke-dasharray="9 3"/>
<path d="M1063.5,416.1L1063.5,507.8" stroke="#828282" stroke-width="1" fill="none"/>
<path d="M1068.8,423.5L1068.8,500.4" stroke="#828282" stroke-width="1" fill="none"/>
<path d="M1148.9,423.5L1148.9,500.4" stroke="#828282" stroke-width="1" fill="none"/>
<path d="M1153.1,423.5L1153.1,507.8" stroke="#828282" stroke-width="1" fill="none"/>
<path d="M1068.8,500.4L1148.9,500.4" stroke="#828282" stroke-width="1" fill="none"/>
<path d="M1063.5,504.6L1153.1,504.6" stroke="#828282" stroke-width="1" fill="none"/>
<path d="M1063.5,507.8L1153.1,507.8" stroke="#828282" stroke-width="1" fill="none"/>
<path d="M1068.8,449.1L1122.2,449.1" stroke="#828282" stroke-width="1" fill="none"/>
<path d="M1068.8,486.5L1098.7,486.5L1108.3,481.2L1148.9,481.2" stroke="#828282" stroke-width="1" fill="none"/>
<path d="M1194.7,504.6L1194.7,545" stroke="#828282" stroke-width="1" fill="none"/>
<path d="M1202.2,504.6L1202.2,545" stroke="#828282" stroke-width="1" fill="none"/>
<path d="M1194.7,504.6L1202.6,504.6" stroke="#828282" stroke-width="1" fill="none"/>
<path d="M1331.4,339.6L1425.9,339.6" stroke="#828282" stroke-width="1" fill="none"/>
<path d="M1334.6,342.4L1423.1,342.4L1423.1,434.2L1334.6,434.2Z" stroke="#828282" stroke-width="1" fill="none"/>
<path d="M1353.8,427.8L1337.8,427.8L1337.8,346.7L1419.9,346.7L1419.9,427.8L1400.7,427.8" stroke="#828282" stroke-width="1" fill="none"/>
<path d="M1353.8,425.7L1353.8,434.2" stroke="#828282" stroke-width="1" fill="none"/>
<path d="M1400.7,425.7L1400.7,434.2" stroke="#828282" stroke-width="1" fill="none"/>
<path d="M1353.8,425.7L1400.7,425.7" stroke="#828282" stroke-width="2" fill="none"/>
<path d="M1345.2,370.6L1411.8,370.6L1411.8,419.7L1345.2,419.7Z" stroke="#828282" stroke-width="1" fill="none"/>
<path d="M1345.2,370.6L1411.8,419.7" stroke="#828282" stroke-width="1" fill="none"/>
<path d="M1411.8,370.6L1345.2,419.7" stroke="#828282" stroke-width="1" fill="none"/>
<path d="M1358,354.2L1398.6,354.2L1398.6,363.3L1358,363.3Z" stroke="#828282" stroke-width="1" fill="none"/>
<path d="M1331.4,320L1331.4,339.6" stroke="#828282" stroke-width="1" fill="none"/>
<path d="M1335.6,320L1335.6,339.6" stroke="#828282" stroke-width="1" fill="none"/>
<path d="M1425.9,339.6L1425.9,435.3" stroke="#828282" stroke-width="1" fill="none"/>
<path d="M1331.4,339.6L1331.4,444.9" stroke="#828282" stroke-width="1" fill="none"/>
<path d="M1331.4,434.2L1425.9,434.2" stroke="#828282" stroke-width="1" fill="none"/>
<path d="M1331.4,444.9L1337.1,444.9" stroke="#828282" stroke-width="1" fill="none"/>
<path d="M1337.1,444.9L1345.2,448.1L1335.6,456.6" stroke="#828282" stroke-width="1" fill="none"/>
<path d="M1334.6,456.6A33.1,33.1 0 0 1 1367.6,488.5" stroke="#828282" stroke-width="1" fill="none"/>
<path d="M1347.4,489.7L1367.6,489.7" stroke="#828282" stroke-width="1" fill="none"/>
<path d="M1331.4,490.8L1331.4,507.8" stroke="#828282" stroke-width="1" fill="none"/>
<path d="M1331.4,507.8L1348.4,507.8L1348.4,545" stroke="#828282" stroke-width="1" fill="none"/>
<path d="M1341.4,501.4L1355.9,501.4L1355.9,545" stroke="#828282" stroke-width="1" fill="none"/>
<path d="M1370.8,320L1370.8,338.1" stroke="#828282" stroke-width="1" fill="none"/>
<path d="M1402.9,324.7L1418.9,324.7L1418.9,338.1L1402.9,338.1Z" stroke="#828282" stroke-width="2" fill="none"/>
<path d="M1418.9,340.3A12.8,12.8 0 0 1 1406.1,327.5" stroke="#828282" stroke-width="1" fill="none"/>
<path d="M1402.1,324.7L1418.1,324.7L1418.1,338.1L1402.1,338.1Z" stroke="#828282" stroke-width="2" fill="none"/>
<path d="M1522.7,324.7L1538.7,324.7L1538.7,338.1L1522.7,338.1Z" stroke="#828282" stroke-width="2" fill="none"/>
<path d="M1418.8,320L1418.8,339.6" stroke="#828282" stroke-width="1" fill="none"/>
<path d="M1426,320L1426,339.6" stroke="#828282" stroke-width="1" fill="none"/>
<path d="M1514.8,320L1514.8,339.6" stroke="#828282" stroke-width="1" fill="none"/>
<path d="M1521.7,320L1521.7,339.6" stroke="#828282" stroke-width="1" fill="none"/>
<path d="M1400,339.6L1473.6,339.6" stroke="#828282" stroke-width="1" fill="none"/>
<path d="M1511,339.6L1609.2,339.6" stroke="#828282" stroke-width="1" fill="none"/>
<path d="M1568.6,320L1568.6,338.1" stroke="#828282" stroke-width="1" fill="none"/>
<path d="M1422.8,339.6L1422.8,434.2" stroke="#828282" stroke-width="1" fill="none"/>
<path d="M1426,339.6L1426,434.2" stroke="#828282" stroke-width="1" fill="none"/>
<path d="M1418.8,339.6L1418.8,434.2" stroke="#828282" stroke-width="1" fill="none"/>
<path d="M1426,346.7L1463,346.7" stroke="#828282" stroke-width="1" fill="none"/>
<path d="M1426,377.2L1463,377.2" stroke="#828282" stroke-width="1" fill="none"/>
<path d="M1426,382.3L1463,382.3" stroke="#828282" stroke-width="1" fill="none"/>
<path d="M1463,346.7L1463,433.1" stroke="#828282" stroke-width="1" fill="none"/>
<path d="M1466.6,346.7L1466.6,433.1" stroke="#828282" stroke-width="1" fill="none"/>
<path d="M1426,433.1L1466.6,433.1" stroke="#828282" stroke-width="1" fill="none"/>
<path d="M1466.6,347.7L1474.7,359.5L1466.6,362.7L1474.7,367L1466.6,376.6" stroke="#828282" stroke-width="1" fill="none"/>
<path d="M1432,436.3L1439.5,444.9L1443.8,435.3L1450.2,444.9L1461.9,434.2" stroke="#828282" stroke-width="1" fill="none"/>
<path d="M1514.8,339.6L1609.2,339.6L1609.2,434.2L1514.8,434.2Z" stroke="#828282" stroke-width="1" fill="none"/>
<path d="M1538.7,427.8L1521.2,427.8L1521.2,346.7L1602.8,346.7L1602.8,427.8L1583.6,427.8" stroke="#828282" stroke-width="1" fill="none"/>
<path d="M1518,343.5L1518,434.2" stroke="#828282" stroke-width="1" fill="none"/>
<path d="M1538.7,425.7L1538.7,434.2" stroke="#828282" stroke-width="1" fill="none"/>
<path d="M1583.6,425.7L1583.6,434.2" stroke="#828282" stroke-width="1" fill="none"/>
<path d="M1538.7,425.7L1583.6,425.7" stroke="#828282" stroke-width="2" fill="none"/>
<path d="M1528.1,370.6L1595.3,370.6L1595.3,419.7L1528.1,419.7Z" stroke="#828282" stroke-width="1" fill="none"/>
<path d="M1528.1,370.6L1595.3,419.7" stroke="#828282" stroke-width="1" fill="none"/>
<path d="M1595.3,370.6L1528.1,419.7" stroke="#828282" stroke-width="1" fill="none"/>
<path d="M1541.3,354.2L1582.5,354.2L1582.5,362.7L1541.3,362.7Z" stroke="#828282" stroke-width="1" fill="none"/>
<path d="M1606,339.6L1606,444.9" stroke="#828282" stroke-width="1" fill="none"/>
<path d="M1609.2,339.6L1609.2,444.9" stroke="#828282" stroke-width="1" fill="none"/>
<path d="M1600.6,444.9L1609.2,444.9" stroke="#828282" stroke-width="1" fill="none"/>
<path d="M1600.6,444.9L1595.3,448.1L1600.6,455.5L1606,456.2" stroke="#828282" stroke-width="1" fill="none"/>
<path d="M1572.9,488.6A33.1,33.1 0 0 1 1604.8,455.6" stroke="#828282" stroke-width="1" fill="none"/>
<path d="M1572.9,488.6L1606,488.6" stroke="#828282" stroke-width="1" fill="none"/>
<path d="M1606,488.6L1609.6,488.6L1609.6,508.9L1591,508.9L1591,511" stroke="#828282" stroke-width="1" fill="none"/>
<path d="M1573.3,488.6L1606,488.6" stroke="#828282" stroke-width="1" fill="none"/>
<path d="M1440.6,501.4L1562.2,501.4" stroke="#828282" stroke-width="1" fill="none"/>
<path d="M1499.3,508.9L1583.6,508.9" stroke="#828282" stroke-width="1" fill="none"/>
<path d="M1583.6,501.4L1583.6,508.9" stroke="#828282" stroke-width="1" fill="none"/>
<path d="M1606,490.8L1606,501.4" stroke="#828282" stroke-width="1" fill="none"/>
<path d="M1587.4,501.4L1606,501.4" stroke="#828282" stroke-width="1" fill="none"/>
<path d="M1440.6,501L1499.7,501L1499.7,530.9L1440.6,530.9Z" stroke="#828282" stroke-width="1" fill="none"/>
<path d="M1444.4,504.6L1495.4,504.6L1495.4,527L1444.4,527Z" stroke="#828282" stroke-width="1" fill="none"/>
<path d="M1448.7,504.6L1492.8,504.6L1492.8,521.7L1448.7,521.7Z" stroke="#828282" stroke-width="1" fill="none"/>
<path d="M1449.5,520.6L1454.4,508.9L1485.4,505.7" stroke="#828282" stroke-width="1" fill="none"/>
<path d="M1466.6,530.9L1466.6,545" stroke="#828282" stroke-width="1" fill="none"/>
<path d="M1473.6,530.9L1473.6,545" stroke="#828282" stroke-width="1" fill="none"/>
<path d="M1705.7,320L1705.7,372.3" stroke="#828282" stroke-width="1" fill="none"/>
<path d="M1716.3,320L1716.3,372.3" stroke="#828282" stroke-width="1" fill="none"/>
<path d="M1705.7,372.3L1716.3,372.3" stroke="#828282" stroke-width="1" fill="none"/>
<path d="M1752.2,342.4L1800,342.4L1800,342.4L1752.2,342.4Z" stroke="#828282" stroke-width="1" fill="none"/>
<path d="M1752.2,342.4L1800,342.4" stroke="#828282" stroke-width="1" fill="none"/>
<path d="M1756,347.7L1800,347.7" stroke="#828282" stroke-width="1" fill="none"/>
<path d="M1752.2,342.4L1752.2,368" stroke="#828282" stroke-width="1" fill="none"/>
<path d="M1756,347.7L1756,416.1" stroke="#828282" stroke-width="1" fill="none"/>
<path d="M1752.2,368L1750.1,368L1750.1,372.3L1752.2,372.3L1752.2,420.3" stroke="#828282" stroke-width="1" fill="none"/>
<path d="M1752.2,420.3L1800,420.3" stroke="#828282" stroke-width="1" fill="none"/>
<path d="M1756,416.1L1800,416.1" stroke="#828282" stroke-width="1" fill="none"/>
<path d="M1789.5,347.7L1789.5,380.8" stroke="#828282" stroke-width="1" fill="none"/>
<path d="M1789.5,380.8L1800,380.8" stroke="#828282" stroke-width="1" fill="none"/>
<path d="M1716.3,420.3L1685,420.3L1685,508.9L1739.4,508.9" stroke="#828282" stroke-width="1" fill="none" stroke-dasharray="9 3"/>
<path d="M1713.3,423.9L1688.6,423.9L1688.6,504.6L1739.4,504.6" stroke="#828282" stroke-width="1" fill="none" stroke-dasharray="9 3"/>
<path d="M1739.4,504.6L1739.4,545" stroke="#828282" stroke-width="1" fill="none"/>
<path d="M1745.8,504.6L1745.8,545" stroke="#828282" stroke-width="1" fill="none"/>
<path d="M1739.4,504.6L1745.8,504.6" stroke="#828282" stroke-width="1" fill="none"/>
<path d="M1787.4,423.5L1787.4,500.4" stroke="#828282" stroke-width="1" fill="none"/>
<path d="M1791.7,423.5L1791.7,500.4" stroke="#828282" stroke-width="1" fill="none"/>
<path d="M1787.4,423.5L1800,423.5" stroke="#828282" stroke-width="1" fill="none"/>
<path d="M1787.4,500.4L1800,500.4" stroke="#828282" stroke-width="1" fill="none"/>
<path d="M1791.7,478L1800,478" stroke="#828282" stroke-width="1" fill="none"/>
<path d="M1705.6,320L1705.6,372.3" stroke="#828282" stroke-width="1" fill="none"/>
<path d="M1712.5,320L1712.5,365.9" stroke="#828282" stroke-width="1" fill="none"/>
<path d="M1705.6,372.3L1717.4,372.3" stroke="#828282" stroke-width="1" fill="none"/>
<path d="M1712.5,365.9L1717.4,365.9" stroke="#828282" stroke-width="1" fill="none"/>
<path d="M1822.6,320L1822.6,342.4" stroke="#828282" stroke-width="1" fill="none"/>
<path d="M1830.5,320L1830.5,416.1" stroke="#828282" stroke-width="1" fill="none"/>
<path d="M1752.6,342.4L1822.6,342.4" stroke="#828282" stroke-width="1" fill="none"/>
<path d="M1752.6,342.4L1752.6,383" stroke="#828282" stroke-width="1" fill="none"/>
<path d="M1756.4,347.8L1756.4,416.1" stroke="#828282" stroke-width="1" fill="none"/>
<path d="M1756.4,347.8L1822.6,347.8" stroke="#828282" stroke-width="1" fill="none"/>
<path d="M1822.6,347.8L1822.6,416.1" stroke="#828282" stroke-width="1" fill="none"/>
<path d="M1826.9,342.4L1826.9,420.4" stroke="#828282" stroke-width="1" fill="none"/>
<path d="M1752.6,368L1749.4,368L1749.4,372.3L1752.6,372.3" stroke="#828282" stroke-width="1" fill="none"/>
<path d="M1752.6,372.3L1752.6,384.1" stroke="#828282" stroke-width="1" fill="none"/>
<path d="M1756.4,416.1L1822.6,416.1" stroke="#828282" stroke-width="1" fill="none"/>
<path d="M1748.3,420.4L1826.9,420.4" stroke="#828282" stroke-width="1" fill="none"/>
<path d="M1748.3,420.4L1748.3,423.6" stroke="#828282" stroke-width="1" fill="none"/>
<path d="M1748.3,423.6L1791,423.6" stroke="#828282" stroke-width="1" fill="none"/>
<path d="M1789.3,347.8L1789.3,380.4L1816.7,380.4" stroke="#828282" stroke-width="1" fill="none"/>
<path d="M1715.2,420.4L1684.3,420.4L1684.3,509L1738.7,509" stroke="#828282" stroke-width="1" fill="none" stroke-dasharray="9 3"/>
<path d="M1712,424L1688.1,424L1688.1,504.7L1738.7,504.7" stroke="#828282" stroke-width="1" fill="none" stroke-dasharray="9 3"/>
<path d="M1738.7,504.7L1738.7,545.1" stroke="#828282" stroke-width="1" fill="none"/>
<path d="M1745.1,504.7L1745.1,545.1" stroke="#828282" stroke-width="1" fill="none"/>
<path d="M1738.7,504.7L1745.1,504.7" stroke="#828282" stroke-width="1" fill="none"/>
<path d="M1787.4,423.6L1787.4,449.2" stroke="#828282" stroke-width="1" fill="none"/>
<path d="M1791.5,423.6L1791.5,500.4" stroke="#828282" stroke-width="1" fill="none"/>
<path d="M1787.4,478.4L1787.4,507.9" stroke="#828282" stroke-width="1" fill="none"/>
<path d="M1787.4,478.4L1791.5,478.4" stroke="#828282" stroke-width="1" fill="none"/>
<path d="M1787.4,423.6L1870,423.6" stroke="#828282" stroke-width="1" fill="none"/>
<path d="M1830.5,416.1L1877.5,416.1" stroke="#828282" stroke-width="1" fill="none"/>
<path d="M1870,416.1L1870,504.7" stroke="#828282" stroke-width="1" fill="none"/>
<path d="M1873.9,416.1L1873.9,507.9" stroke="#828282" stroke-width="1" fill="none"/>
<path d="M1877.5,416.1L1877.5,545.1" stroke="#828282" stroke-width="1" fill="none"/>
<path d="M1791.5,500.4L1870,500.4" stroke="#828282" stroke-width="1" fill="none"/>
<path d="M1787.4,504.7L1873.9,504.7" stroke="#828282" stroke-width="1" fill="none"/>
<path d="M1787.4,507.9L1877.5,507.9" stroke="#828282" stroke-width="1" fill="none"/>
<path d="M1870,507.9L1870,545.1" stroke="#828282" stroke-width="1" fill="none"/>
<path d="M1816.7,449.2L1870,449.2" stroke="#828282" stroke-width="1" fill="none"/>
<path d="M1791.5,480.2L1831.6,480.2L1840.2,486.1L1870,486.1" stroke="#828282" stroke-width="1" fill="none"/>
<path d="M1885.4,416.1L1885.4,545.1" stroke="#828282" stroke-width="1" fill="none"/>
<path d="M1888.8,416.1L1888.8,504.7" stroke="#828282" stroke-width="1" fill="none"/>
<path d="M1892.5,416.1L1892.5,504.7" stroke="#828282" stroke-width="1" fill="none"/>
<path d="M1885.4,416.1L1920,416.1" stroke="#828282" stroke-width="1" fill="none"/>
<path d="M1892.5,423.6L1920,423.6" stroke="#828282" stroke-width="1" fill="none"/>
<path d="M1888.8,504.7L1920,504.7" stroke="#828282" stroke-width="1" fill="none"/>
<path d="M1892.9,486.1L1920,486.1" stroke="#828282" stroke-width="1" fill="none"/>
<path d="M1899.9,486.1L1899.9,500.4" stroke="#828282" stroke-width="1" fill="none"/>
<path d="M1050.2,530L1050.2,651.7" stroke="#828282" stroke-width="1" fill="none"/>
<path d="M1061.3,530L1061.3,651.7" stroke="#828282" stroke-width="1" fill="none"/>
<path d="M1066,530L1066,651.7" stroke="#828282" stroke-width="1" fill="none"/>
<path d="M1069.9,530L1069.9,645.3" stroke="#828282" stroke-width="1" fill="none"/>
<path d="M1069.9,645.3L1194.7,645.3" stroke="#828282" stroke-width="1" fill="none"/>
<path d="M1040,651.7L1198,651.7" stroke="#828282" stroke-width="1" fill="none"/>
<path d="M1066,648.5L1099.8,648.5" stroke="#828282" stroke-width="1" fill="none"/>
<path d="M1194.7,530L1194.7,706.1" stroke="#828282" stroke-width="1" fill="none"/>
<path d="M1199,530L1199,645.3" stroke="#828282" stroke-width="1" fill="none"/>
<path d="M1202.2,530L1202.2,653.8" stroke="#828282" stroke-width="1" fill="none"/>
<path d="M1202.2,645.3L1231,645.3L1231,651.7L1202.2,651.7Z" stroke="#828282" stroke-width="1" fill="none"/>
<path d="M1319.6,645.3L1356.3,645.3L1356.3,651.7L1319.6,651.7Z" stroke="#828282" stroke-width="1" fill="none"/>
<path d="M1231,647L1319.6,647" stroke="#828282" stroke-width="2.2" fill="none"/>
<path d="M1198,651.7L1198,699.7" stroke="#828282" stroke-width="1" fill="none"/>
<path d="M1224.6,651.7L1224.6,699.7" stroke="#828282" stroke-width="1" fill="none"/>
<path d="M1227.8,651.7L1227.8,699.7" stroke="#828282" stroke-width="1" fill="none"/>
<path d="M1198,699.7L1349.5,699.7" stroke="#828282" stroke-width="1" fill="none"/>
<path d="M1194.7,706.1L1349.5,706.1" stroke="#828282" stroke-width="1" fill="none"/>
<path d="M1349.5,530L1349.5,649.5" stroke="#828282" stroke-width="1" fill="none"/>
<path d="M1356.3,530L1356.3,717.8" stroke="#828282" stroke-width="1" fill="none"/>
<path d="M1365.5,651.7L1365.5,717.8" stroke="#828282" stroke-width="1" fill="none"/>
<path d="M1349.5,699.7L1349.5,706.1" stroke="#828282" stroke-width="1" fill="none"/>
<path d="M1356.3,717.8L1373,717.8L1373,724.2L1337.8,724.2" stroke="#828282" stroke-width="1" fill="none"/>
<path d="M1356.3,651.7L1383.6,651.7" stroke="#828282" stroke-width="1" fill="none"/>
<path d="M1356.3,660.2L1365.5,660.2" stroke="#828282" stroke-width="1" fill="none"/>
<path d="M1356.3,668.7L1365.5,668.7" stroke="#828282" stroke-width="1" fill="none"/>
<path d="M1356.3,677.3L1365.5,677.3" stroke="#828282" stroke-width="1" fill="none"/>
<path d="M1356.3,685.8L1365.5,685.8" stroke="#828282" stroke-width="1" fill="none"/>
<path d="M1356.3,694.4L1365.5,694.4" stroke="#828282" stroke-width="1" fill="none"/>
<path d="M1356.3,702.9L1365.5,702.9" stroke="#828282" stroke-width="1" fill="none"/>
<path d="M1356.3,711.4L1365.5,711.4" stroke="#828282" stroke-width="1" fill="none"/>
<path d="M1040,706.1L1140.3,706.1" stroke="#828282" stroke-width="1" fill="none"/>
<path d="M1140.3,706.1L1140.3,761.4" stroke="#828282" stroke-width="1" fill="none"/>
<path d="M1140.3,706.1L1190.5,655.9" stroke="#828282" stroke-width="1" fill="none"/>
<path d="M1194.7,706.1L1160.2,740" stroke="#828282" stroke-width="1" fill="none"/>
<path d="M1387.9,561.6L1440,561.6" stroke="#828282" stroke-width="1" fill="none"/>
<path d="M1387.9,561.6L1398.6,572.3L1409.3,561.6" stroke="#828282" stroke-width="1" fill="none"/>
<path d="M1383.6,647L1440,647" stroke="#828282" stroke-width="1" fill="none"/>
<path d="M1365.5,651.7L1440,651.7" stroke="#828282" stroke-width="1" fill="none"/>
<path d="M1400,561.6L1444.8,561.6" stroke="#828282" stroke-width="1" fill="none"/>
<path d="M1466.6,530L1466.6,645.3" stroke="#828282" stroke-width="1" fill="none"/>
<path d="M1473.6,530L1473.6,645.3" stroke="#828282" stroke-width="1" fill="none"/>
<path d="M1473.6,645.3L1583.6,645.3" stroke="#828282" stroke-width="1" fill="none"/>
<path d="M1438.4,651.7L1583.6,651.7" stroke="#828282" stroke-width="1" fill="none"/>
<path d="M1438.4,647L1466.6,647" stroke="#828282" stroke-width="1" fill="none"/>
<path d="M1583.6,544.9L1583.6,645.3" stroke="#828282" stroke-width="1" fill="none"/>
<path d="M1591,544.9L1591,645.3" stroke="#828282" stroke-width="1" fill="none"/>
<path d="M1583.6,544.9L1591,544.9" stroke="#828282" stroke-width="1" fill="none"/>
<path d="M1591,645.3L1620.9,645.3L1620.9,651.7L1591,651.7Z" stroke="#828282" stroke-width="1" fill="none"/>
<path d="M1620.9,647L1708.4,647" stroke="#828282" stroke-width="2.2" fill="none"/>
<path d="M1457.6,651.7L1457.6,755" stroke="#828282" stroke-width="1" fill="none"/>
<path d="M1466.6,651.7L1466.6,717.8" stroke="#828282" stroke-width="1" fill="none"/>
<path d="M1457.6,660.2L1466.6,660.2" stroke="#828282" stroke-width="1" fill="none"/>
<path d="M1457.6,668.7L1466.6,668.7" stroke="#828282" stroke-width="1" fill="none"/>
<path d="M1457.6,677.3L1466.6,677.3" stroke="#828282" stroke-width="1" fill="none"/>
<path d="M1457.6,685.8L1466.6,685.8" stroke="#828282" stroke-width="1" fill="none"/>
<path d="M1457.6,694.4L1466.6,694.4" stroke="#828282" stroke-width="1" fill="none"/>
<path d="M1457.6,702.9L1466.6,702.9" stroke="#828282" stroke-width="1" fill="none"/>
<path d="M1457.6,711.4L1466.6,711.4" stroke="#828282" stroke-width="1" fill="none"/>
<path d="M1466.6,717.8L1449.1,717.8L1449.1,724.2L1473.6,724.2" stroke="#828282" stroke-width="1" fill="none"/>
<path d="M1473.6,651.7L1473.6,724.2" stroke="#828282" stroke-width="1" fill="none"/>
<path d="M1400,724.2L1449.1,724.2" stroke="#828282" stroke-width="1" fill="none"/>
<path d="M1473.6,672.6L1568.6,672.6" stroke="#828282" stroke-width="1" fill="none"/>
<path d="M1484.3,677.3L1583.6,677.3" stroke="#828282" stroke-width="1" fill="none"/>
<path d="M1484.3,672.6L1484.3,677.3" stroke="#828282" stroke-width="1" fill="none"/>
<path d="M1568.6,672.6L1568.6,677.3" stroke="#828282" stroke-width="1" fill="none"/>
<path d="M1583.6,651.7L1583.6,706.1" stroke="#828282" stroke-width="1" fill="none"/>
<path d="M1591,651.7L1591,699.7" stroke="#828282" stroke-width="1" fill="none"/>
<path d="M1591,699.7L1745.8,699.7" stroke="#828282" stroke-width="1" fill="none"/>
<path d="M1583.6,706.1L1745.8,706.1" stroke="#828282" stroke-width="1" fill="none"/>
<path d="M1739.4,530L1739.4,645.3" stroke="#828282" stroke-width="1" fill="none"/>
<path d="M1745.8,530L1745.8,706.1" stroke="#828282" stroke-width="1" fill="none"/>
<path d="M1708.4,645.3L1745.8,645.3L1745.8,651.7L1708.4,651.7Z" stroke="#828282" stroke-width="1" fill="none"/>
<path d="M1712.7,651.7L1712.7,699.7" stroke="#828282" stroke-width="1" fill="none"/>
<path d="M1715.9,651.7L1715.9,699.7" stroke="#828282" stroke-width="1" fill="none"/>
<path d="M1742.6,651.7L1742.6,699.7" stroke="#828282" stroke-width="1" fill="none"/>
<path d="M1583.6,706.1L1550.9,740" stroke="#828282" stroke-width="1" fill="none"/>
<path d="M1473.6,724.2L1488.5,740" stroke="#828282" stroke-width="1" fill="none"/>
<path d="M1745.8,706.1L1780.3,740" stroke="#828282" stroke-width="1" fill="none"/>
<path d="M1752.2,658.1L1800,706.1" stroke="#828282" stroke-width="1" fill="none"/>
<path d="M1738.7,530L1738.7,645.3" stroke="#828282" stroke-width="1" fill="none"/>
<path d="M1745.1,530L1745.1,706.2" stroke="#828282" stroke-width="1" fill="none"/>
<path d="M1745.1,645.3L1870,645.3" stroke="#828282" stroke-width="1" fill="none"/>
<path d="M1745.1,651.7L1877.5,651.7" stroke="#828282" stroke-width="1" fill="none"/>
<path d="M1870,530L1870,645.3" stroke="#828282" stroke-width="1" fill="none"/>
<path d="M1873.9,530L1873.9,648.5" stroke="#828282" stroke-width="1" fill="none"/>
<path d="M1877.5,530L1877.5,651.7" stroke="#828282" stroke-width="1" fill="none"/>
<path d="M1852.5,648.5L1873.9,648.5" stroke="#828282" stroke-width="1" fill="none"/>
<path d="M1885.4,530L1885.4,651.7" stroke="#828282" stroke-width="1" fill="none"/>
<path d="M1888.8,530L1888.8,648.5" stroke="#828282" stroke-width="1" fill="none"/>
<path d="M1892.5,530L1892.5,645.3" stroke="#828282" stroke-width="1" fill="none"/>
<path d="M1892.5,645.3L1920,645.3" stroke="#828282" stroke-width="1" fill="none"/>
<path d="M1885.4,651.7L1920,651.7" stroke="#828282" stroke-width="1" fill="none"/>
<path d="M1888.8,648.5L1920,648.5" stroke="#828282" stroke-width="1" fill="none"/>
<path d="M1800.6,706.2L1920,706.2" stroke="#828282" stroke-width="1" fill="none"/>
<path d="M1800.6,706.2L1800.6,755.1" stroke="#828282" stroke-width="1" fill="none"/>
<path d="M1745.1,706.2L1779.2,740.1" stroke="#828282" stroke-width="1" fill="none"/>
<path d="M1713.1,651.7L1713.1,699.8" stroke="#828282" stroke-width="1" fill="none"/>
<path d="M1716.7,651.7L1716.7,699.8" stroke="#828282" stroke-width="1" fill="none"/>
<path d="M1741.9,651.7L1741.9,699.8" stroke="#828282" stroke-width="1" fill="none"/>
<path d="M1680,699.8L1741.9,699.8" stroke="#828282" stroke-width="1" fill="none"/>
<path d="M1680,706.2L1745.1,706.2" stroke="#828282" stroke-width="1" fill="none"/>
<path d="M664.5,116L664.5,1024" stroke="#f2f2f2" stroke-width="1" fill="none"/>
<path d="M755.5,116L755.5,1024" stroke="#f2f2f2" stroke-width="1" fill="none"/>
<circle cx="780.9" cy="166.9" r="14.6" stroke="#00ff00" stroke-width="1" fill="none"/>
<text transform="translate(778.8,167.4) scale(0.8,1)" font-family="Liberation Sans,Noto Sans CJK SC,sans-serif" font-size="10.5" fill="#a0a0a0" text-anchor="middle" dominant-baseline="central">5-J</text>
<circle cx="780.9" cy="221.9" r="14.6" stroke="#00ff00" stroke-width="1" fill="none"/>
<text transform="translate(778.8,222.4) scale(0.8,1)" font-family="Liberation Sans,Noto Sans CJK SC,sans-serif" font-size="10.5" fill="#a0a0a0" text-anchor="middle" dominant-baseline="central">5-H</text>
<circle cx="780.9" cy="343.1" r="14.6" stroke="#00ff00" stroke-width="1" fill="none"/>
<text transform="translate(778.8,343.6) scale(0.8,1)" font-family="Liberation Sans,Noto Sans CJK SC,sans-serif" font-size="10.5" fill="#a0a0a0" text-anchor="middle" dominant-baseline="central">5-F</text>
<circle cx="780.9" cy="420.2" r="14.6" stroke="#00ff00" stroke-width="1" fill="none"/>
<text transform="translate(778.8,420.7) scale(0.8,1)" font-family="Liberation Sans,Noto Sans CJK SC,sans-serif" font-size="10.5" fill="#a0a0a0" text-anchor="middle" dominant-baseline="central">5-D</text>
<circle cx="780.9" cy="504.7" r="14.6" stroke="#00ff00" stroke-width="1" fill="none"/>
<text transform="translate(778.8,505.3) scale(0.8,1)" font-family="Liberation Sans,Noto Sans CJK SC,sans-serif" font-size="10.5" fill="#a0a0a0" text-anchor="middle" dominant-baseline="central">5-B</text>
<circle cx="780.9" cy="647.7" r="14.6" stroke="#00ff00" stroke-width="1" fill="none"/>
<text transform="translate(778.8,648.2) scale(0.8,1)" font-family="Liberation Sans,Noto Sans CJK SC,sans-serif" font-size="10.5" fill="#a0a0a0" text-anchor="middle" dominant-baseline="central">5-A</text>
<text transform="translate(839,195) rotate(-90) scale(0.65,1)" font-family="Liberation Sans,Noto Sans CJK SC,sans-serif" font-size="12.5" fill="#ffffff" text-anchor="middle" dominant-baseline="central">1500</text>
<text transform="translate(839,283.4) rotate(-90) scale(0.65,1)" font-family="Liberation Sans,Noto Sans CJK SC,sans-serif" font-size="12.5" fill="#ffffff" text-anchor="middle" dominant-baseline="central">3300</text>
<text transform="translate(839,380.8) rotate(-90) scale(0.65,1)" font-family="Liberation Sans,Noto Sans CJK SC,sans-serif" font-size="12.5" fill="#ffffff" text-anchor="middle" dominant-baseline="central">2100</text>
<text transform="translate(839,463.2) rotate(-90) scale(0.65,1)" font-family="Liberation Sans,Noto Sans CJK SC,sans-serif" font-size="12.5" fill="#ffffff" text-anchor="middle" dominant-baseline="central">2300</text>
<text transform="translate(839,576.7) rotate(-90) scale(0.65,1)" font-family="Liberation Sans,Noto Sans CJK SC,sans-serif" font-size="12.5" fill="#ffffff" text-anchor="middle" dominant-baseline="central">3900</text>
<text transform="translate(839,675.9) rotate(-90) scale(0.65,1)" font-family="Liberation Sans,Noto Sans CJK SC,sans-serif" font-size="12.5" fill="#ffffff" text-anchor="middle" dominant-baseline="central">1500</text>
<text transform="translate(837.2,720.2) rotate(-90) scale(0.65,1)" font-family="Liberation Sans,Noto Sans CJK SC,sans-serif" font-size="12.5" fill="#ffffff" text-anchor="middle" dominant-baseline="central">100</text>
<text transform="translate(809.6,424.8) rotate(-90) scale(0.65,1)" font-family="Liberation Sans,Noto Sans CJK SC,sans-serif" font-size="12.5" fill="#ffffff" text-anchor="middle" dominant-baseline="central">15400</text>

<text transform="translate(1085.7,249.1) scale(0.75,1)" font-family="Liberation Sans,Noto Sans CJK SC,sans-serif" font-size="9.5" fill="#a0a0a0" text-anchor="middle" dominant-baseline="central">竖井</text>
<text transform="translate(941.7,351.5) scale(0.65,1)" font-family="Liberation Sans,Noto Sans CJK SC,sans-serif" font-size="6" fill="#a0a0a0" text-anchor="middle" dominant-baseline="central">-0.150</text>
<path d="M953.3,414.3L962.5,414.3L962.5,423.5L953.3,423.5Z" stroke="#ffff00" stroke-width="1" fill="none"/>
<path d="M1050.6,414.3L1060.1,414.3L1060.1,423.5L1050.6,423.5Z" stroke="#ffff00" stroke-width="1" fill="none"/>
<path d="M953.3,483L962.5,483L962.5,492.2L953.3,492.2Z" stroke="#ffff00" stroke-width="1" fill="none"/>
<path d="M1050.6,483L1060.1,483L1060.1,492.2L1050.6,492.2Z" stroke="#ffff00" stroke-width="1" fill="none"/>
<path d="M953.3,564.2L962.5,564.2L962.5,573.4L953.3,573.4Z" stroke="#ffff00" stroke-width="1" fill="none"/>
<path d="M1050.6,564.2L1060.1,564.2L1060.1,573.4L1050.6,573.4Z" stroke="#ffff00" stroke-width="1" fill="none"/>
<path d="M953.3,642.6L962.5,642.6L962.5,651.5L953.3,651.5Z" stroke="#ffff00" stroke-width="1" fill="none"/>
<path d="M1050.6,642.6L1060.1,642.6L1060.1,651.5L1050.6,651.5Z" stroke="#ffff00" stroke-width="1" fill="none"/>
<text transform="translate(983.2,599) scale(0.65,1)" font-family="Liberation Sans,Noto Sans CJK SC,sans-serif" font-size="7" fill="#a0a0a0" text-anchor="middle" dominant-baseline="central">F</text>
<text transform="translate(1031.4,560.6) scale(0.65,1)" font-family="Liberation Sans,Noto Sans CJK SC,sans-serif" font-size="6" fill="#a0a0a0" text-anchor="middle" dominant-baseline="central">)</text>
<text transform="translate(1005.8,441.5) scale(0.62,1)" font-family="Liberation Sans,Noto Sans CJK SC,sans-serif" font-size="11.5" fill="#828282" text-anchor="middle" dominant-baseline="central">-1.700</text>
<text transform="translate(1020.4,602.8) scale(0.62,1)" font-family="Liberation Sans,Noto Sans CJK SC,sans-serif" font-size="11.5" fill="#828282" text-anchor="middle" dominant-baseline="central">0.340</text>
<text transform="translate(963.5,625.1) scale(0.65,1)" font-family="Liberation Sans,Noto Sans CJK SC,sans-serif" font-size="7" fill="#a0a0a0" text-anchor="middle" dominant-baseline="central">F</text>
<text transform="translate(1014,730.2) scale(0.65,1)" font-family="Liberation Sans,Noto Sans CJK SC,sans-serif" font-size="11.5" fill="#a0a0a0" text-anchor="middle" dominant-baseline="central">-0.150</text>
<text transform="translate(1049,932.3) scale(0.65,1)" font-family="Liberation Sans,Noto Sans CJK SC,sans-serif" font-size="12.5" fill="#ffffff" text-anchor="middle" dominant-baseline="central">100</text>
<text transform="translate(1131.4,932.3) scale(0.65,1)" font-family="Liberation Sans,Noto Sans CJK SC,sans-serif" font-size="12.5" fill="#ffffff" text-anchor="middle" dominant-baseline="central">3600</text>
<text transform="translate(1274.8,932.3) scale(0.65,1)" font-family="Liberation Sans,Noto Sans CJK SC,sans-serif" font-size="12.5" fill="#ffffff" text-anchor="middle" dominant-baseline="central">4200</text>
<text transform="translate(1410.8,932.3) scale(0.65,1)" font-family="Liberation Sans,Noto Sans CJK SC,sans-serif" font-size="12.5" fill="#ffffff" text-anchor="middle" dominant-baseline="central">3200</text>
<text transform="translate(1528,932.3) scale(0.65,1)" font-family="Liberation Sans,Noto Sans CJK SC,sans-serif" font-size="12.5" fill="#ffffff" text-anchor="middle" dominant-baseline="central">3200</text>
<text transform="translate(1664,932.3) scale(0.65,1)" font-family="Liberation Sans,Noto Sans CJK SC,sans-serif" font-size="12.5" fill="#ffffff" text-anchor="middle" dominant-baseline="central">4200</text>
<text transform="translate(1807,932.3) scale(0.65,1)" font-family="Liberation Sans,Noto Sans CJK SC,sans-serif" font-size="12.5" fill="#ffffff" text-anchor="middle" dominant-baseline="central">3600</text>
<text transform="translate(1880,932.3) scale(0.65,1)" font-family="Liberation Sans,Noto Sans CJK SC,sans-serif" font-size="12.5" fill="#ffffff" text-anchor="middle" dominant-baseline="central">400</text>
<circle cx="1066" cy="1007.7" r="14.8" stroke="#00ff00" stroke-width="1" fill="none"/>
<text transform="translate(1064,1008.2) scale(0.75,1)" font-family="Liberation Sans,Noto Sans CJK SC,sans-serif" font-size="10" fill="#a0a0a0" text-anchor="middle" dominant-baseline="central">5-1</text>
<circle cx="1198.3" cy="1007.7" r="14.8" stroke="#00ff00" stroke-width="1" fill="none"/>
<text transform="translate(1196.3,1008.2) scale(0.75,1)" font-family="Liberation Sans,Noto Sans CJK SC,sans-serif" font-size="10" fill="#a0a0a0" text-anchor="middle" dominant-baseline="central">5-3</text>
<circle cx="1352.7" cy="1007.7" r="14.8" stroke="#00ff00" stroke-width="1" fill="none"/>
<text transform="translate(1350.7,1008.2) scale(0.75,1)" font-family="Liberation Sans,Noto Sans CJK SC,sans-serif" font-size="10" fill="#a0a0a0" text-anchor="middle" dominant-baseline="central">5-6</text>
<circle cx="1470" cy="1007.7" r="14.8" stroke="#00ff00" stroke-width="1" fill="none"/>
<text transform="translate(1468,1008.2) scale(0.75,1)" font-family="Liberation Sans,Noto Sans CJK SC,sans-serif" font-size="10" fill="#a0a0a0" text-anchor="middle" dominant-baseline="central">5-8</text>
<circle cx="1587.3" cy="1007.7" r="14.8" stroke="#00ff00" stroke-width="1" fill="none"/>
<text transform="translate(1585.3,1008.2) scale(0.75,1)" font-family="Liberation Sans,Noto Sans CJK SC,sans-serif" font-size="10" fill="#a0a0a0" text-anchor="middle" dominant-baseline="central">5-10</text>
<circle cx="1741.7" cy="1007.7" r="14.8" stroke="#00ff00" stroke-width="1" fill="none"/>
<text transform="translate(1739.7,1008.2) scale(0.75,1)" font-family="Liberation Sans,Noto Sans CJK SC,sans-serif" font-size="10" fill="#a0a0a0" text-anchor="middle" dominant-baseline="central">5-13</text>
<circle cx="1859" cy="1007.7" r="14.8" stroke="#00ff00" stroke-width="1" fill="none"/>
<text transform="translate(1857,1008.2) scale(0.75,1)" font-family="Liberation Sans,Noto Sans CJK SC,sans-serif" font-size="10" fill="#a0a0a0" text-anchor="middle" dominant-baseline="central">5-15</text>
<circle cx="1903.3" cy="1007.7" r="14.8" stroke="#00ff00" stroke-width="1" fill="none"/>
<text transform="translate(1901.3,1008.2) scale(0.75,1)" font-family="Liberation Sans,Noto Sans CJK SC,sans-serif" font-size="10" fill="#a0a0a0" text-anchor="middle" dominant-baseline="central">5-16</text>
<text transform="translate(1338.4,755.4) scale(0.65,1)" font-family="Liberation Sans,Noto Sans CJK SC,sans-serif" font-size="12.5" fill="#ffffff" text-anchor="middle" dominant-baseline="central">NL-3</text>
<path d="M1327.1,762L1360.8,762" stroke="#00ff00" stroke-width="1" fill="none"/>
<path d="M1360.8,740L1360.8,762" stroke="#00ff00" stroke-width="1" fill="none"/>
<path d="M1356.5,740L1356.5,745.3" stroke="#00ff00" stroke-width="1" fill="none"/>
<path d="M1367.6,740L1367.6,746" stroke="#00ff00" stroke-width="1" fill="none"/>
<path d="M1271.6,740L1271.6,870.2" stroke="#7fc344" stroke-width="3" fill="none"/>
<path d="M1286.5,740L1286.5,870.2" stroke="#7fc344" stroke-width="3" fill="none"/>
<path d="M1265.2,861.7L1277.4,874.9" stroke="#7fc344" stroke-width="2.4" fill="none"/>
<path d="M1280.1,862.1L1292.5,875.3" stroke="#7fc344" stroke-width="2.4" fill="none"/>
<circle cx="1259.9" cy="887.3" r="18.6" stroke="#00ff00" stroke-width="1" fill="none"/>
<circle cx="1296.8" cy="887.3" r="18.6" stroke="#00ff00" stroke-width="1" fill="none"/>
<path d="M1241.3,887.3L1315.3,887.3" stroke="#00ff00" stroke-width="1" fill="none"/>
<text transform="translate(1257.7,880.4) scale(0.8,1)" font-family="Liberation Sans,Noto Sans CJK SC,sans-serif" font-size="7" fill="#ffffff" text-anchor="middle" dominant-baseline="central">W0</text>
<text transform="translate(1258.8,896.5) scale(0.7,1)" font-family="Liberation Sans,Noto Sans CJK SC,sans-serif" font-size="11.5" fill="#ffffff" text-anchor="middle" dominant-baseline="central">1</text>
<text transform="translate(1295.5,880.4) scale(0.8,1)" font-family="Liberation Sans,Noto Sans CJK SC,sans-serif" font-size="8" fill="#ffffff" text-anchor="middle" dominant-baseline="central">W</text>
<text transform="translate(1296.1,896.9) scale(0.7,1)" font-family="Liberation Sans,Noto Sans CJK SC,sans-serif" font-size="11.5" fill="#ffffff" text-anchor="middle" dominant-baseline="central">1</text>
<path d="M1198.4,830.7L1285.5,830.7" stroke="#00ff00" stroke-width="1" fill="none"/>
<path d="M1198.4,822.2L1198.4,849.9" stroke="#00ff00" stroke-width="1" fill="none"/>
<text transform="translate(1233.8,821.1) scale(0.65,1)" font-family="Liberation Sans,Noto Sans CJK SC,sans-serif" font-size="12.5" fill="#ffffff" text-anchor="middle" dominant-baseline="central">2000</text>
<text transform="translate(1298.9,821.1) scale(0.65,1)" font-family="Liberation Sans,Noto Sans CJK SC,sans-serif" font-size="12.5" fill="#ffffff" text-anchor="middle" dominant-baseline="central">400</text>
<path d="M1283.8,795.1L1291.9,795.1" stroke="#00ff00" stroke-width="1" fill="none"/>
<path d="M1283.8,796.6L1291.9,796.6" stroke="#00ff00" stroke-width="1" fill="none"/>
<path d="M1283.8,798.1L1291.9,798.1" stroke="#00ff00" stroke-width="1" fill="none"/>
<path d="M1653.4,740L1653.4,869.1" stroke="#ffff00" stroke-width="1" fill="none"/>
<path d="M1668.5,740L1668.5,869.1" stroke="#ffff00" stroke-width="1" fill="none"/>
<circle cx="1643.3" cy="887.3" r="18.6" stroke="#00ff00" stroke-width="1" fill="none"/>
<circle cx="1680" cy="887.3" r="18.6" stroke="#00ff00" stroke-width="1" fill="none"/>
<path d="M1624.8,887.3L1698.8,887.3" stroke="#00ff00" stroke-width="1" fill="none"/>
<text transform="translate(1642.3,880.4) scale(0.8,1)" font-family="Liberation Sans,Noto Sans CJK SC,sans-serif" font-size="8" fill="#ffffff" text-anchor="middle" dominant-baseline="central">W</text>
<text transform="translate(1641.8,896.9) scale(0.7,1)" font-family="Liberation Sans,Noto Sans CJK SC,sans-serif" font-size="11.5" fill="#ffffff" text-anchor="middle" dominant-baseline="central">2</text>
<text transform="translate(1677.5,880.4) scale(0.8,1)" font-family="Liberation Sans,Noto Sans CJK SC,sans-serif" font-size="7" fill="#ffffff" text-anchor="middle" dominant-baseline="central">W0</text>
<text transform="translate(1678.1,896.9) scale(0.7,1)" font-family="Liberation Sans,Noto Sans CJK SC,sans-serif" font-size="11.5" fill="#ffffff" text-anchor="middle" dominant-baseline="central">2</text>
<path d="M1653.4,830.7L1741.5,830.7" stroke="#00ff00" stroke-width="1" fill="none"/>
<path d="M1741.5,822.2L1741.5,849.9" stroke="#00ff00" stroke-width="1" fill="none"/>
<text transform="translate(1639.1,821.1) scale(0.65,1)" font-family="Liberation Sans,Noto Sans CJK SC,sans-serif" font-size="12.5" fill="#ffffff" text-anchor="middle" dominant-baseline="central">400</text>
<text transform="translate(1704.2,821.1) scale(0.65,1)" font-family="Liberation Sans,Noto Sans CJK SC,sans-serif" font-size="12.5" fill="#ffffff" text-anchor="middle" dominant-baseline="central">2000</text>
<path d="M1650.2,795.1L1658.7,795.1" stroke="#00ff00" stroke-width="1" fill="none"/>
<path d="M1650.2,796.6L1658.7,796.6" stroke="#00ff00" stroke-width="1" fill="none"/>
<path d="M1650.2,798.1L1658.7,798.1" stroke="#00ff00" stroke-width="1" fill="none"/>
<path d="M1651.9,793.8L1655.3,793.8L1655.3,799.8L1651.9,799.8Z" stroke="#000" stroke-width="0" fill="#000"/>
<path d="M1650.2,795.1L1658.7,795.1" stroke="#00ff00" stroke-width="1" fill="none"/>
<path d="M1650.2,796.6L1658.7,796.6" stroke="#00ff00" stroke-width="1" fill="none"/>
<path d="M1650.2,798.1L1658.7,798.1" stroke="#00ff00" stroke-width="1" fill="none"/>
<text transform="translate(1691.4,785.5) scale(0.65,1)" font-family="Liberation Sans,Noto Sans CJK SC,sans-serif" font-size="11.5" fill="#a0a0a0" text-anchor="middle" dominant-baseline="central">-0.150</text>
<path d="M1110.4,218.4L1110.4,225.3" stroke="#ff00ff" stroke-width="1" fill="none"/>
<path d="M1209.3,218.4L1209.3,225.3" stroke="#ff00ff" stroke-width="1" fill="none"/>
<path d="M1110.4,280.3L1117.3,280.3" stroke="#ff00ff" stroke-width="1" fill="none"/>
<path d="M1227.8,280.3L1235.3,280.3" stroke="#ff00ff" stroke-width="1" fill="none"/>
<path d="M1145,218.4L1200.5,218.4" stroke="#00ffff" stroke-width="1" fill="none"/>
<path d="M1145,220.7L1200.5,220.7" stroke="#00ffff" stroke-width="1" fill="none"/>
<path d="M1145,223L1200.5,223" stroke="#00ffff" stroke-width="1" fill="none"/>
<path d="M1145,225.3L1200.5,225.3" stroke="#00ffff" stroke-width="1" fill="none"/>
<path d="M1145,218.4L1145,225.3" stroke="#00ffff" stroke-width="1" fill="none"/>
<path d="M1200.5,218.4L1200.5,225.3" stroke="#00ffff" stroke-width="1" fill="none"/>
<text transform="translate(1170.6,278.6) scale(0.75,1)" font-family="Liberation Sans,Noto Sans CJK SC,sans-serif" font-size="10.5" fill="#a0a0a0" text-anchor="middle" dominant-baseline="central">卧室</text>
<path d="M1255.2,243.4L1310.7,243.4" stroke="#00ffff" stroke-width="1" fill="none"/>
<path d="M1255.2,246.1L1310.7,246.1" stroke="#00ffff" stroke-width="1" fill="none"/>
<path d="M1255.2,248.8L1310.7,248.8" stroke="#00ffff" stroke-width="1" fill="none"/>
<path d="M1255.2,251.5L1310.7,251.5" stroke="#00ffff" stroke-width="1" fill="none"/>
<path d="M1255.2,243.4L1255.2,251.5" stroke="#00ffff" stroke-width="1" fill="none"/>
<path d="M1310.7,243.4L1310.7,251.5" stroke="#00ffff" stroke-width="1" fill="none"/>
<path d="M1270.1,226.3L1296.8,226.3L1296.8,237.6L1270.1,237.6Z" stroke="#ff00ff" stroke-width="1" fill="none"/>
<path d="M1272.7,227.8L1295.1,236.4" stroke="#ff00ff" stroke-width="1" fill="none"/>
<text transform="translate(1274.8,235.5) scale(0.65,1)" font-family="Liberation Sans,Noto Sans CJK SC,sans-serif" font-size="5" fill="#ff00ff" text-anchor="middle" dominant-baseline="central">A</text>
<text transform="translate(1291.9,231.7) scale(0.65,1)" font-family="Liberation Sans,Noto Sans CJK SC,sans-serif" font-size="5" fill="#ff00ff" text-anchor="middle" dominant-baseline="central">C</text>
<path d="M1330.3,218.4L1330.3,221" stroke="#ff00ff" stroke-width="1" fill="none"/>
<path d="M1337.8,218.4L1337.8,225.3" stroke="#ff00ff" stroke-width="1" fill="none"/>
<path d="M1238.5,210.3L1238.5,304.7" stroke="#00ff00" stroke-width="1" fill="none"/>
<path d="M1246.6,234.9L1246.6,268" stroke="#00ff00" stroke-width="1" fill="none"/>
<path d="M1253.4,235.9L1253.4,268" stroke="#00ff00" stroke-width="1" fill="none"/>
<path d="M1238.5,210.3L1238.5,225.3" stroke="#1466ff" stroke-width="1" fill="none"/>
<path d="M1246.6,210.3L1246.6,232.7L1239.6,239.8" stroke="#00ffff" stroke-width="1" fill="none"/>
<path d="M1253.4,212.5L1253.4,235.9" stroke="#1466ff" stroke-width="1" fill="none"/>
<circle cx="1238.5" cy="225.3" r="1.9" stroke="#00ffff" stroke-width="1" fill="none"/>
<circle cx="1238.9" cy="239.8" r="1.7" stroke="#00ffff" stroke-width="1" fill="none"/>
<path d="M1236.6,212.5A1.9,1.9 0 0 1 1240.4,212.5" stroke="#1466ff" stroke-width="1" fill="none"/>
<path d="M1244.7,212.5A1.9,1.9 0 0 1 1248.5,212.5" stroke="#00ffff" stroke-width="1" fill="none"/>
<path d="M1251.5,213.1A1.9,1.9 0 0 1 1255.4,213.1" stroke="#1466ff" stroke-width="1" fill="none"/>
<path d="M1232.1,259.4L1257.7,259.4" stroke="#00ff00" stroke-width="1" fill="none"/>
<path d="M1236.8,260.7L1240.2,258.1" stroke="#00ff00" stroke-width="1" fill="none"/>
<path d="M1244.9,260.7L1248.3,258.1" stroke="#00ff00" stroke-width="1" fill="none"/>
<path d="M1251.7,260.7L1255.2,258.1" stroke="#00ff00" stroke-width="1" fill="none"/>
<text transform="translate(1212.5,171.9) scale(0.85,1)" font-family="Liberation Sans,Noto Sans CJK SC,sans-serif" font-size="11.5" fill="#ffffff" text-anchor="middle" dominant-baseline="central">排至散水</text>
<path d="M1190.1,180L1233.2,180" stroke="#00ff00" stroke-width="1" fill="none"/>
<path d="M1233.2,180L1238.9,210.3" stroke="#00ff00" stroke-width="1" fill="none"/>
<path d="M1233.2,180L1246.6,210.3" stroke="#00ff00" stroke-width="1" fill="none"/>
<path d="M1233.2,180L1253.4,210.3" stroke="#00ff00" stroke-width="1" fill="none"/>
<text transform="translate(1215,187.9) scale(0.72,1)" font-family="Liberation Sans,Noto Sans CJK SC,sans-serif" font-size="12.5" fill="#ffffff" text-anchor="middle" dominant-baseline="central"><tspan font-size="16" dy="-0.5">Φ</tspan><tspan dy="1">150</tspan></text>
<path d="M1198,196.4L1228.9,196.4" stroke="#00ff00" stroke-width="1" fill="none"/>
<path d="M1228.9,196.4L1239.6,212" stroke="#00ff00" stroke-width="1" fill="none"/>
<text transform="translate(1215.5,203.9) scale(0.72,1)" font-family="Liberation Sans,Noto Sans CJK SC,sans-serif" font-size="12.5" fill="#ffffff" text-anchor="middle" dominant-baseline="central"><tspan font-size="16" dy="-0.5">Φ</tspan><tspan dy="1">80</tspan></text>
<path d="M1201.2,213.5L1230,213.5" stroke="#00ff00" stroke-width="1" fill="none"/>
<path d="M1230,213.5L1235.9,218.4" stroke="#00ff00" stroke-width="1" fill="none"/>
<text transform="translate(1273.7,180.9) scale(0.85,1)" font-family="Liberation Sans,Noto Sans CJK SC,sans-serif" font-size="11.5" fill="#ffffff" text-anchor="middle" dominant-baseline="central">水舌</text>
<path d="M1264.1,191.1L1283.3,191.1" stroke="#00ff00" stroke-width="1" fill="none"/>
<path d="M1264.1,191.1L1254.5,216.1" stroke="#00ff00" stroke-width="1" fill="none"/>
<text transform="translate(1268,203.9) scale(0.72,1)" font-family="Liberation Sans,Noto Sans CJK SC,sans-serif" font-size="12.5" fill="#ffffff" text-anchor="middle" dominant-baseline="central"><tspan font-size="16" dy="-0.5">Φ</tspan><tspan dy="1">50</tspan></text>
<path d="M1259.9,213.5L1284.4,213.5" stroke="#00ff00" stroke-width="1" fill="none"/>
<path d="M1259.9,213.5L1254.5,218.9" stroke="#00ff00" stroke-width="1" fill="none"/>
<text transform="translate(1221.4,248.7) scale(0.65,1)" font-family="Liberation Sans,Noto Sans CJK SC,sans-serif" font-size="12.5" fill="#ffffff" text-anchor="middle" dominant-baseline="central">100</text>
<text transform="translate(1241.7,248.7) scale(0.65,1)" font-family="Liberation Sans,Noto Sans CJK SC,sans-serif" font-size="12.5" fill="#ffffff" text-anchor="middle" dominant-baseline="central">200</text>
<text transform="translate(1266.3,248.7) scale(0.65,1)" font-family="Liberation Sans,Noto Sans CJK SC,sans-serif" font-size="12.5" fill="#ffffff" text-anchor="middle" dominant-baseline="central">200</text>
<text transform="translate(1251.3,280.3) scale(0.65,1)" font-family="Liberation Sans,Noto Sans CJK SC,sans-serif" font-size="12.5" fill="#ffffff" text-anchor="middle" dominant-baseline="central">NL-2</text>
<path d="M1238.5,287.2L1270.5,287.2" stroke="#00ff00" stroke-width="1" fill="none"/>
<text transform="translate(1250.9,296.1) scale(0.65,1)" font-family="Liberation Sans,Noto Sans CJK SC,sans-serif" font-size="12.5" fill="#ffffff" text-anchor="middle" dominant-baseline="central">YL-2</text>
<path d="M1238.5,304.2L1270.9,304.2" stroke="#00ff00" stroke-width="1" fill="none"/>
<text transform="translate(1280.8,301.5) scale(0.75,1)" font-family="Liberation Sans,Noto Sans CJK SC,sans-serif" font-size="10.5" fill="#a0a0a0" text-anchor="middle" dominant-baseline="central">餐厅</text>
<text transform="translate(1322.2,119) scale(0.65,1)" font-family="Liberation Sans,Noto Sans CJK SC,sans-serif" font-size="12.5" fill="#ffffff" text-anchor="middle" dominant-baseline="central">YL-3</text>
<path d="M1312.1,125.4L1343.5,125.4" stroke="#00ff00" stroke-width="1" fill="none"/>
<path d="M1343.5,125.4L1343.5,174" stroke="#00ff00" stroke-width="1" fill="none"/>
<text transform="translate(1324.5,135.6) scale(0.72,1)" font-family="Liberation Sans,Noto Sans CJK SC,sans-serif" font-size="12.5" fill="#ffffff" text-anchor="middle" dominant-baseline="central"><tspan font-size="16" dy="-0.5">Φ</tspan><tspan dy="1">150</tspan></text>
<path d="M1306.8,144.2L1337.8,144.2" stroke="#00ff00" stroke-width="1" fill="none"/>
<path d="M1337.8,144.2L1343.1,157.4" stroke="#00ff00" stroke-width="1" fill="none"/>
<text transform="translate(1363.8,128.8) scale(0.85,1)" font-family="Liberation Sans,Noto Sans CJK SC,sans-serif" font-size="11.5" fill="#ffffff" text-anchor="middle" dominant-baseline="central">水舌</text>
<path d="M1355.9,136.3L1374.7,136.3" stroke="#00ff00" stroke-width="1" fill="none"/>
<path d="M1355.9,136.3L1350.6,163.4" stroke="#00ff00" stroke-width="1" fill="none"/>
<text transform="translate(1361.9,149.5) scale(0.72,1)" font-family="Liberation Sans,Noto Sans CJK SC,sans-serif" font-size="12.5" fill="#ffffff" text-anchor="middle" dominant-baseline="central"><tspan font-size="16" dy="-0.5">Φ</tspan><tspan dy="1">50</tspan></text>
<path d="M1353.8,158.7L1379,158.7" stroke="#00ff00" stroke-width="1" fill="none"/>
<path d="M1353.8,158.7L1351.2,163.8" stroke="#00ff00" stroke-width="1" fill="none"/>
<circle cx="1343.5" cy="176.2" r="1.9" stroke="#00ffff" stroke-width="1" fill="none"/>
<path d="M1341.6,155.9A1.9,1.9 0 0 1 1345.4,155.9" stroke="#00ffff" stroke-width="1" fill="none"/>
<path d="M1350.6,161.2L1350.6,175.1" stroke="#1466ff" stroke-width="1" fill="none"/>
<text transform="translate(1382.2,177.9) scale(0.75,1)" font-family="Liberation Sans,Noto Sans CJK SC,sans-serif" font-size="10.5" fill="#828282" text-anchor="middle" dominant-baseline="central">开敞阳台</text>
<text transform="translate(1309.4,189.4) rotate(-78) scale(0.65,1)" font-family="Liberation Sans,Noto Sans CJK SC,sans-serif" font-size="12.5" fill="#ffffff" text-anchor="middle" dominant-baseline="central">150</text>
<text transform="translate(1324.3,187.9) scale(0.65,1)" font-family="Liberation Sans,Noto Sans CJK SC,sans-serif" font-size="12.5" fill="#ffffff" text-anchor="middle" dominant-baseline="central">150</text>
<text transform="translate(1363.8,187.9) scale(0.65,1)" font-family="Liberation Sans,Noto Sans CJK SC,sans-serif" font-size="12.5" fill="#ffffff" text-anchor="middle" dominant-baseline="central">200</text>
<path d="M1309.4,170.4L1332.8,170.4" stroke="#00ff00" stroke-width="1" fill="none"/>
<path d="M1308.5,175.1L1329.2,175.1" stroke="#00ff00" stroke-width="1" fill="none"/>
<path d="M1317.5,167.2L1317.5,179.4" stroke="#00ff00" stroke-width="1" fill="none"/>
<path d="M1315.8,174L1319.2,171.5" stroke="#00ff00" stroke-width="1" fill="none"/>
<path d="M1337.8,189L1337.8,212.5" stroke="#00ff00" stroke-width="1" fill="none"/>
<path d="M1343.5,189L1343.5,194.3" stroke="#00ff00" stroke-width="1" fill="none"/>
<path d="M1350.6,189L1350.6,212.5" stroke="#00ff00" stroke-width="1" fill="none"/>
<path d="M1335.6,197.1L1353.8,197.1" stroke="#00ff00" stroke-width="1" fill="none"/>
<path d="M1341.6,194.3L1341.6,221" stroke="#00ffff" stroke-width="1" fill="none"/>
<path d="M1343.5,194.3L1343.5,221" stroke="#00ffff" stroke-width="1" fill="none"/>
<path d="M1343.5,194.1A26.9,26.9 0 0 1 1370.3,218.6" stroke="#00ffff" stroke-width="1" fill="none"/>
<path d="M1370.8,218.4L1396.5,218.4" stroke="#00ffff" stroke-width="1" fill="none"/>
<path d="M1370.8,220.7L1396.5,220.7" stroke="#00ffff" stroke-width="1" fill="none"/>
<path d="M1370.8,223L1396.5,223" stroke="#00ffff" stroke-width="1" fill="none"/>
<path d="M1370.8,225.3L1396.5,225.3" stroke="#00ffff" stroke-width="1" fill="none"/>
<path d="M1370.8,218.4L1370.8,225.3" stroke="#00ffff" stroke-width="1" fill="none"/>
<path d="M1396.5,218.4L1396.5,225.3" stroke="#00ffff" stroke-width="1" fill="none"/>
<text transform="translate(1391.1,190.7) scale(0.65,1)" font-family="Liberation Sans,Noto Sans CJK SC,sans-serif" font-size="12.5" fill="#ffffff" text-anchor="middle" dominant-baseline="central">WL-4</text>
<path d="M1380.4,197.1L1413.5,197.1" stroke="#00ff00" stroke-width="1" fill="none"/>
<path d="M1413.5,197.1L1413.5,230" stroke="#00ff00" stroke-width="1" fill="none"/>
<circle cx="1413.5" cy="231.2" r="1.1" stroke="#ffff00" stroke-width="1" fill="none"/>
<path d="M1418.9,163.4L1425.9,163.4" stroke="#ff00ff" stroke-width="1" fill="none"/>
<path d="M1418.9,232.1L1425.9,232.1" stroke="#ff00ff" stroke-width="1" fill="none"/>
<path d="M1418.9,218.4L1418.9,225.3" stroke="#ff00ff" stroke-width="1" fill="none"/>

<path d="M1372.6,229.1L1397.5,229.1L1397.5,246.6L1372.6,246.6Z" stroke="#8c7341" stroke-width="1" fill="none"/>
<path d="M1375.1,231.2L1395.4,231.2L1395.4,244.5L1375.1,244.5Z" stroke="#8c7341" stroke-width="1" fill="none"/>
<path d="M1391.1,231.2L1272.7,349.1" stroke="#a4d2ff" stroke-width="3" fill="none"/>
<path d="M1413.5,231.2L1287.6,357.2" stroke="#00ffff" stroke-width="2.6" fill="none"/>
<path d="M1379.4,240.6L1398.6,238.1" stroke="#ffffff" stroke-width="1" fill="none"/>
<path d="M1385.8,234.9L1386.2,248.7" stroke="#ffffff" stroke-width="1" fill="none"/>
<path d="M1391.1,231.7L1379.4,242.3" stroke="#ffffff" stroke-width="1" fill="none"/>
<path d="M1413.5,231.2L1411,248.3L1405.4,250.9" stroke="#00ffff" stroke-width="1" fill="none"/>
<path d="M1402.2,250.4L1407.6,250.4" stroke="#00ffff" stroke-width="2.5" fill="none"/>
<path d="M1350.1,288.4L1355.7,294" stroke="#00ff00" stroke-width="1" fill="none"/>
<path d="M1347.6,291L1353.1,296.6" stroke="#00ff00" stroke-width="1" fill="none"/>
<path d="M1308.5,308.7L1314.1,314.3" stroke="#00ff00" stroke-width="1" fill="none"/>
<path d="M1306,311.3L1311.5,316.8" stroke="#00ff00" stroke-width="1" fill="none"/>
<path d="M1399.7,283.3L1415.7,283.3L1415.7,313.8L1399.7,313.8Z" stroke="#8c7341" stroke-width="1" fill="none"/>
<circle cx="1408.8" cy="291.4" r="3.2" stroke="#8c7341" stroke-width="1" fill="none"/>
<circle cx="1408.8" cy="304.7" r="3.2" stroke="#8c7341" stroke-width="1" fill="none"/>
<path d="M1402.4,286.1L1415.7,286.1L1415.7,311.7L1402.4,311.7Z" stroke="#8c7341" stroke-width="1" fill="none"/>
<text transform="translate(1381.5,309.6) scale(0.75,1)" font-family="Liberation Sans,Noto Sans CJK SC,sans-serif" font-size="10.5" fill="#a0a0a0" text-anchor="middle" dominant-baseline="central">厨房</text>
<text transform="translate(1352.1,328.8) scale(0.75,1)" font-family="Liberation Sans,Noto Sans CJK SC,sans-serif" font-size="10.5" fill="#a0a0a0" text-anchor="middle" dominant-baseline="central">冰箱</text>
<path d="M1426.3,293.6L1426.3,329.9L1440,327.7" stroke="#00ffff" stroke-width="1" fill="none"/>

<text transform="translate(1467.2,153.8) scale(0.75,1)" font-family="Liberation Sans,Noto Sans CJK SC,sans-serif" font-size="10.5" fill="#828282" text-anchor="middle" dominant-baseline="central">送风井</text>
<path d="M1418.8,163.4L1426,163.4" stroke="#ff00ff" stroke-width="1" fill="none"/>
<path d="M1514.8,163.4L1521.7,163.4" stroke="#ff00ff" stroke-width="1" fill="none"/>
<path d="M1448.7,163.4L1492.8,163.4" stroke="#00ffff" stroke-width="1" fill="none"/>
<path d="M1448.7,165.7L1492.8,165.7" stroke="#00ffff" stroke-width="1" fill="none"/>
<path d="M1448.7,168.1L1492.8,168.1" stroke="#00ffff" stroke-width="1" fill="none"/>
<path d="M1448.7,170.4L1492.8,170.4" stroke="#00ffff" stroke-width="1" fill="none"/>
<path d="M1448.7,163.4L1448.7,170.4" stroke="#00ffff" stroke-width="1" fill="none"/>
<path d="M1492.8,163.4L1492.8,170.4" stroke="#00ffff" stroke-width="1" fill="none"/>
<text transform="translate(1552,177.9) scale(0.75,1)" font-family="Liberation Sans,Noto Sans CJK SC,sans-serif" font-size="10.5" fill="#828282" text-anchor="middle" dominant-baseline="central">开敞阳台</text>
<text transform="translate(1491.4,209.9) scale(0.85,1)" font-family="Liberation Sans,Noto Sans CJK SC,sans-serif" font-size="11.5" fill="#ffd980" text-anchor="middle" dominant-baseline="central">防火墙</text>
<path d="M1418.8,232.1L1426,232.1" stroke="#ff00ff" stroke-width="1" fill="none"/>
<path d="M1514.8,232.1L1521.7,232.1" stroke="#ff00ff" stroke-width="1" fill="none"/>
<path d="M1418.8,218.4L1418.8,225.3" stroke="#ff00ff" stroke-width="1" fill="none"/>
<path d="M1521.7,218.4L1521.7,225.3" stroke="#ff00ff" stroke-width="1" fill="none"/>
<path d="M1426.7,294L1426.7,329.9" stroke="#00ffff" stroke-width="1.8" fill="none"/>
<path d="M1462.8,297.2A36.3,36.3 0 0 1 1426.7,330.3" stroke="#00ffff" stroke-width="1" fill="none"/>
<text transform="translate(1449.1,308.5) scale(0.8,1)" font-family="Liberation Sans,Noto Sans CJK SC,sans-serif" font-size="11" fill="#a0a0a0" text-anchor="middle" dominant-baseline="central">下</text>
<text transform="translate(1493.9,308.5) scale(0.8,1)" font-family="Liberation Sans,Noto Sans CJK SC,sans-serif" font-size="11" fill="#a0a0a0" text-anchor="middle" dominant-baseline="central">上</text>
<path d="M1400,283.3L1416.6,283.3L1416.6,313.8L1400,313.8Z" stroke="#8c7341" stroke-width="1" fill="none"/>
<circle cx="1408.5" cy="291.4" r="3.2" stroke="#8c7341" stroke-width="1" fill="none"/>
<circle cx="1408.5" cy="304.7" r="3.2" stroke="#8c7341" stroke-width="1" fill="none"/>
<path d="M1524.4,283.3L1541.3,283.3L1541.3,313.8L1524.4,313.8Z" stroke="#8c7341" stroke-width="1" fill="none"/>
<circle cx="1531.3" cy="291.4" r="3.2" stroke="#8c7341" stroke-width="1" fill="none"/>
<circle cx="1531.3" cy="304.7" r="3.2" stroke="#8c7341" stroke-width="1" fill="none"/>
<path d="M1524.4,286.1L1538.3,286.1L1538.3,311.7L1524.4,311.7Z" stroke="#8c7341" stroke-width="1" fill="none"/>
<path d="M1400,197.1L1413.9,197.1" stroke="#00ff00" stroke-width="1" fill="none"/>
<path d="M1413.9,197.1L1413.9,230" stroke="#00ff00" stroke-width="1" fill="none"/>
<path d="M1543.4,218.4L1569.7,218.4" stroke="#00ffff" stroke-width="1" fill="none"/>
<path d="M1543.4,220.7L1569.7,220.7" stroke="#00ffff" stroke-width="1" fill="none"/>
<path d="M1543.4,223L1569.7,223" stroke="#00ffff" stroke-width="1" fill="none"/>
<path d="M1543.4,225.3L1569.7,225.3" stroke="#00ffff" stroke-width="1" fill="none"/>
<path d="M1543.4,218.4L1543.4,225.3" stroke="#00ffff" stroke-width="1" fill="none"/>
<path d="M1569.7,218.4L1569.7,225.3" stroke="#00ffff" stroke-width="1" fill="none"/>
<path d="M1543.4,228.5L1569.7,228.5L1569.7,246.6L1543.4,246.6Z" stroke="#8c7341" stroke-width="1" fill="none"/>
<path d="M1545.6,230.6L1567.6,230.6L1567.6,244.5L1545.6,244.5Z" stroke="#8c7341" stroke-width="1" fill="none"/>
<text transform="translate(1539.8,190.7) scale(0.65,1)" font-family="Liberation Sans,Noto Sans CJK SC,sans-serif" font-size="12.5" fill="#ffffff" text-anchor="middle" dominant-baseline="central">WL-5</text>
<path d="M1527,197.1L1560.5,197.1" stroke="#00ff00" stroke-width="1" fill="none"/>
<path d="M1527,197.1L1527,230" stroke="#00ff00" stroke-width="1" fill="none"/>
<circle cx="1527" cy="231.2" r="1.3" stroke="#ffff00" stroke-width="1" fill="none"/>
<path d="M1527,231.2L1631.6,335" stroke="#ffff00" stroke-width="1" fill="none"/>
<path d="M1549.4,231.2L1652.9,335" stroke="#ffff00" stroke-width="1" fill="none"/>
<path d="M1583.8,294L1589.3,288.4" stroke="#00ff00" stroke-width="1" fill="none"/>
<path d="M1586.3,296.6L1591.9,291" stroke="#00ff00" stroke-width="1" fill="none"/>
<path d="M1626,314.3L1631.6,308.7" stroke="#00ff00" stroke-width="1" fill="none"/>
<path d="M1628.6,316.8L1634.2,311.3" stroke="#00ff00" stroke-width="1" fill="none"/>
<text transform="translate(1575,187.9) scale(0.65,1)" font-family="Liberation Sans,Noto Sans CJK SC,sans-serif" font-size="12.5" fill="#ffffff" text-anchor="middle" dominant-baseline="central">200</text>
<text transform="translate(1614.5,187.9) scale(0.65,1)" font-family="Liberation Sans,Noto Sans CJK SC,sans-serif" font-size="12.5" fill="#ffffff" text-anchor="middle" dominant-baseline="central">150</text>
<text transform="translate(1632.7,189.4) rotate(-82) scale(0.65,1)" font-family="Liberation Sans,Noto Sans CJK SC,sans-serif" font-size="12.5" fill="#ffffff" text-anchor="middle" dominant-baseline="central">150</text>
<path d="M1590,189L1590,212.5" stroke="#00ff00" stroke-width="1" fill="none"/>
<path d="M1596.8,189L1596.8,194.3" stroke="#00ff00" stroke-width="1" fill="none"/>
<path d="M1604.9,189L1604.9,212.5" stroke="#00ff00" stroke-width="1" fill="none"/>
<path d="M1586.8,197.1L1606,197.1" stroke="#00ff00" stroke-width="1" fill="none"/>
<path d="M1596.8,194.3L1596.8,221" stroke="#00ffff" stroke-width="1" fill="none"/>
<path d="M1598.7,194.3L1598.7,221" stroke="#00ffff" stroke-width="1" fill="none"/>
<path d="M1570,218.6A26.9,26.9 0 0 1 1596.8,194.1" stroke="#00ffff" stroke-width="1" fill="none"/>
<path d="M1602.3,218.4L1602.3,225.3" stroke="#ff00ff" stroke-width="1" fill="none"/>
<path d="M1609.2,218.4L1609.2,221" stroke="#ff00ff" stroke-width="1" fill="none"/>
<path d="M1607.5,170.4L1630.5,170.4" stroke="#00ff00" stroke-width="1" fill="none"/>
<path d="M1610.9,175.1L1631.6,175.1" stroke="#00ff00" stroke-width="1" fill="none"/>
<path d="M1622.4,167.2L1622.4,179.4" stroke="#00ff00" stroke-width="1" fill="none"/>
<path d="M1620.7,174L1624.1,171.5" stroke="#00ff00" stroke-width="1" fill="none"/>
<text transform="translate(1578.2,127.5) scale(0.85,1)" font-family="Liberation Sans,Noto Sans CJK SC,sans-serif" font-size="11.5" fill="#ffffff" text-anchor="middle" dominant-baseline="central">水舌</text>
<path d="M1565.4,136.3L1584,136.3" stroke="#00ff00" stroke-width="1" fill="none"/>
<path d="M1584,136.3L1589.5,163.4" stroke="#00ff00" stroke-width="1" fill="none"/>
<text transform="translate(1576.7,149.5) scale(0.72,1)" font-family="Liberation Sans,Noto Sans CJK SC,sans-serif" font-size="12.5" fill="#ffffff" text-anchor="middle" dominant-baseline="central"><tspan font-size="16" dy="-0.5">Φ</tspan><tspan dy="1">50</tspan></text>
<path d="M1561.2,158.7L1585.7,158.7" stroke="#00ff00" stroke-width="1" fill="none"/>
<path d="M1585.7,158.7L1588.9,163.8" stroke="#00ff00" stroke-width="1" fill="none"/>
<path d="M1589.5,161.2L1589.5,175.1" stroke="#1466ff" stroke-width="1" fill="none"/>
<text transform="translate(1608.8,121.7) scale(0.65,1)" font-family="Liberation Sans,Noto Sans CJK SC,sans-serif" font-size="12.5" fill="#ffffff" text-anchor="middle" dominant-baseline="central">YL-4</text>
<path d="M1596.4,129.2L1629.5,129.2" stroke="#00ff00" stroke-width="1" fill="none"/>
<path d="M1596.4,129.2L1596.4,174" stroke="#00ff00" stroke-width="1" fill="none"/>
<text transform="translate(1619.9,135.2) scale(0.72,1)" font-family="Liberation Sans,Noto Sans CJK SC,sans-serif" font-size="12.5" fill="#ffffff" text-anchor="middle" dominant-baseline="central"><tspan font-size="16" dy="-0.5">Φ</tspan><tspan dy="1">150</tspan></text>
<path d="M1606,144.2L1640.8,144.2" stroke="#00ff00" stroke-width="1" fill="none"/>
<path d="M1606,144.2L1597.4,163.4" stroke="#00ff00" stroke-width="1" fill="none"/>
<circle cx="1596.8" cy="176.2" r="1.9" stroke="#00ffff" stroke-width="1" fill="none"/>
<path d="M1594.9,155.9A1.9,1.9 0 0 1 1598.7,155.9" stroke="#00ffff" stroke-width="1" fill="none"/>
<path d="M1629.5,243.4L1685,243.4" stroke="#00ffff" stroke-width="1" fill="none"/>
<path d="M1629.5,246.1L1685,246.1" stroke="#00ffff" stroke-width="1" fill="none"/>
<path d="M1629.5,248.8L1685,248.8" stroke="#00ffff" stroke-width="1" fill="none"/>
<path d="M1629.5,251.5L1685,251.5" stroke="#00ffff" stroke-width="1" fill="none"/>
<path d="M1629.5,243.4L1629.5,251.5" stroke="#00ffff" stroke-width="1" fill="none"/>
<path d="M1685,243.4L1685,251.5" stroke="#00ffff" stroke-width="1" fill="none"/>
<path d="M1643.3,226.3L1669.6,226.3L1669.6,237.6L1643.3,237.6Z" stroke="#ff00ff" stroke-width="1" fill="none"/>
<path d="M1645.5,236.4L1667.9,227.8" stroke="#ff00ff" stroke-width="1" fill="none"/>
<path d="M1701.4,210.3L1701.4,321.3" stroke="#00ff00" stroke-width="1" fill="none"/>
<path d="M1694.6,234.9L1694.6,268" stroke="#00ff00" stroke-width="1" fill="none"/>
<path d="M1686.4,235.9L1686.4,268" stroke="#00ff00" stroke-width="1" fill="none"/>
<path d="M1701.4,210.3L1701.4,225.3" stroke="#1466ff" stroke-width="1" fill="none"/>
<path d="M1694.6,210.3L1694.6,232.7L1701,239.8" stroke="#00ffff" stroke-width="1" fill="none"/>
<path d="M1686.4,212.5L1686.4,228.5" stroke="#1466ff" stroke-width="1" fill="none"/>
<circle cx="1701.4" cy="225.3" r="1.9" stroke="#1466ff" stroke-width="1" fill="none"/>
<circle cx="1701.4" cy="239.8" r="1.7" stroke="#00ffff" stroke-width="1" fill="none"/>
<path d="M1699.5,212.5A1.9,1.9 0 0 1 1703.3,212.5" stroke="#1466ff" stroke-width="1" fill="none"/>
<path d="M1692.6,212.5A1.9,1.9 0 0 1 1696.5,212.5" stroke="#00ffff" stroke-width="1" fill="none"/>
<path d="M1684.5,213.1A1.9,1.9 0 0 1 1688.4,213.1" stroke="#1466ff" stroke-width="1" fill="none"/>
<path d="M1682.8,259.4L1708.4,259.4" stroke="#00ff00" stroke-width="1" fill="none"/>
<path d="M1684.7,260.7L1688.2,258.1" stroke="#00ff00" stroke-width="1" fill="none"/>
<path d="M1692.8,260.7L1696.3,258.1" stroke="#00ff00" stroke-width="1" fill="none"/>
<path d="M1699.7,260.7L1703.1,258.1" stroke="#00ff00" stroke-width="1" fill="none"/>
<text transform="translate(1731.3,171.9) scale(0.85,1)" font-family="Liberation Sans,Noto Sans CJK SC,sans-serif" font-size="11.5" fill="#ffffff" text-anchor="middle" dominant-baseline="central">排至散水</text>
<path d="M1707.4,180L1750.1,180" stroke="#00ff00" stroke-width="1" fill="none"/>
<path d="M1707.4,180L1701.4,210.3" stroke="#00ff00" stroke-width="1" fill="none"/>
<path d="M1707.4,180L1694.6,210.3" stroke="#00ff00" stroke-width="1" fill="none"/>
<path d="M1707.4,180L1686.4,210.3" stroke="#00ff00" stroke-width="1" fill="none"/>
<text transform="translate(1721.2,187.9) scale(0.72,1)" font-family="Liberation Sans,Noto Sans CJK SC,sans-serif" font-size="12.5" fill="#ffffff" text-anchor="middle" dominant-baseline="central"><tspan font-size="16" dy="-0.5">Φ</tspan><tspan dy="1">150</tspan></text>
<path d="M1711.6,196.4L1742.6,196.4" stroke="#00ff00" stroke-width="1" fill="none"/>
<path d="M1711.6,196.4L1701,212" stroke="#00ff00" stroke-width="1" fill="none"/>
<text transform="translate(1722.3,203.9) scale(0.72,1)" font-family="Liberation Sans,Noto Sans CJK SC,sans-serif" font-size="12.5" fill="#ffffff" text-anchor="middle" dominant-baseline="central"><tspan font-size="16" dy="-0.5">Φ</tspan><tspan dy="1">80</tspan></text>
<path d="M1710.6,213.5L1739.8,213.5" stroke="#00ff00" stroke-width="1" fill="none"/>
<path d="M1710.6,213.5L1704.8,218.4" stroke="#00ff00" stroke-width="1" fill="none"/>
<text transform="translate(1668.9,180.9) scale(0.85,1)" font-family="Liberation Sans,Noto Sans CJK SC,sans-serif" font-size="11.5" fill="#ffffff" text-anchor="middle" dominant-baseline="central">水舌</text>
<path d="M1656.1,191.1L1675.3,191.1" stroke="#00ff00" stroke-width="1" fill="none"/>
<path d="M1675.3,191.1L1685.6,216.1" stroke="#00ff00" stroke-width="1" fill="none"/>
<text transform="translate(1670.7,203.9) scale(0.72,1)" font-family="Liberation Sans,Noto Sans CJK SC,sans-serif" font-size="12.5" fill="#ffffff" text-anchor="middle" dominant-baseline="central"><tspan font-size="16" dy="-0.5">Φ</tspan><tspan dy="1">50</tspan></text>
<path d="M1655.1,213.5L1679.6,213.5" stroke="#00ff00" stroke-width="1" fill="none"/>
<path d="M1679.6,213.5L1686,218.9" stroke="#00ff00" stroke-width="1" fill="none"/>
<text transform="translate(1672.1,248.7) scale(0.65,1)" font-family="Liberation Sans,Noto Sans CJK SC,sans-serif" font-size="12.5" fill="#ffffff" text-anchor="middle" dominant-baseline="central">200</text>
<text transform="translate(1696.7,248.7) scale(0.65,1)" font-family="Liberation Sans,Noto Sans CJK SC,sans-serif" font-size="12.5" fill="#ffffff" text-anchor="middle" dominant-baseline="central">200</text>
<text transform="translate(1717,248.7) scale(0.65,1)" font-family="Liberation Sans,Noto Sans CJK SC,sans-serif" font-size="12.5" fill="#ffffff" text-anchor="middle" dominant-baseline="central">100</text>
<text transform="translate(1679.6,292.5) scale(0.65,1)" font-family="Liberation Sans,Noto Sans CJK SC,sans-serif" font-size="12.5" fill="#ffffff" text-anchor="middle" dominant-baseline="central">NL-5</text>
<path d="M1669.4,299.5L1701.4,299.5" stroke="#00ff00" stroke-width="1" fill="none"/>
<text transform="translate(1679.6,312.3) scale(0.65,1)" font-family="Liberation Sans,Noto Sans CJK SC,sans-serif" font-size="12.5" fill="#ffffff" text-anchor="middle" dominant-baseline="central">YL-5</text>
<path d="M1669.4,321.3L1701.4,321.3" stroke="#00ff00" stroke-width="1" fill="none"/>
<text transform="translate(1657.2,301.5) scale(0.75,1)" font-family="Liberation Sans,Noto Sans CJK SC,sans-serif" font-size="10.5" fill="#a0a0a0" text-anchor="middle" dominant-baseline="central">餐厅</text>
<text transform="translate(1566.9,279.7) scale(0.75,1)" font-family="Liberation Sans,Noto Sans CJK SC,sans-serif" font-size="10.5" fill="#a0a0a0" text-anchor="middle" dominant-baseline="central">厨房</text>
<text transform="translate(1585.7,328.8) scale(0.75,1)" font-family="Liberation Sans,Noto Sans CJK SC,sans-serif" font-size="10.5" fill="#a0a0a0" text-anchor="middle" dominant-baseline="central">冰箱</text>
<path d="M1705.2,218.4L1705.2,225.3" stroke="#ff00ff" stroke-width="1" fill="none"/>
<path d="M1730.4,218.4L1730.4,225.3" stroke="#ff00ff" stroke-width="1" fill="none"/>
<path d="M1705.2,280.3L1712.1,280.3" stroke="#ff00ff" stroke-width="1" fill="none"/>
<path d="M1609.2,218.4L1609.2,221" stroke="#ff00ff" stroke-width="1" fill="none"/>
<path d="M1739.8,218.4L1795.9,218.4" stroke="#00ffff" stroke-width="1" fill="none"/>
<path d="M1739.8,220.7L1795.9,220.7" stroke="#00ffff" stroke-width="1" fill="none"/>
<path d="M1739.8,223L1795.9,223" stroke="#00ffff" stroke-width="1" fill="none"/>
<path d="M1739.8,225.3L1795.9,225.3" stroke="#00ffff" stroke-width="1" fill="none"/>
<path d="M1739.8,218.4L1739.8,225.3" stroke="#00ffff" stroke-width="1" fill="none"/>
<path d="M1795.9,218.4L1795.9,225.3" stroke="#00ffff" stroke-width="1" fill="none"/>
<text transform="translate(1767.1,279.7) scale(0.75,1)" font-family="Liberation Sans,Noto Sans CJK SC,sans-serif" font-size="10.5" fill="#a0a0a0" text-anchor="middle" dominant-baseline="central">卧室</text>
<path d="M1826.3,114.7L1826.3,218.9" stroke="#00ff00" stroke-width="1" fill="none"/>
<text transform="translate(1816.7,130.3) rotate(90) scale(0.8,1)" font-family="Liberation Sans,Noto Sans CJK SC,sans-serif" font-size="10" fill="#ffffff" text-anchor="middle" dominant-baseline="central">水=50%</text>
<path d="M1824.8,216.8L1827.8,219.3" stroke="#00ff00" stroke-width="1" fill="none"/>
<text transform="translate(1864.7,184.3) scale(0.75,1)" font-family="Liberation Sans,Noto Sans CJK SC,sans-serif" font-size="10.5" fill="#a0a0a0" text-anchor="middle" dominant-baseline="central">1# 风井</text>
<text transform="translate(1839.7,265.9) rotate(90) scale(0.8,1)" font-family="Liberation Sans,Noto Sans CJK SC,sans-serif" font-size="10.5" fill="#828282" text-anchor="middle" dominant-baseline="central">送风井</text>
<path d="M1822.6,280.4L1829.5,280.4" stroke="#ff00ff" stroke-width="1" fill="none"/>
<path d="M1822.6,225.3L1822.6,227" stroke="#ff00ff" stroke-width="1" fill="none"/>
<path d="M1705.6,218.5L1705.6,225.3" stroke="#ff00ff" stroke-width="1" fill="none"/>
<path d="M1730.4,218.5L1730.4,225.3" stroke="#ff00ff" stroke-width="1" fill="none"/>

<ellipse cx="1167.6" cy="355.2" rx="10.5" ry="8.5" stroke="#8c7341" fill="none" stroke-width="1.3"/><ellipse cx="1167.6" cy="355.7" rx="8" ry="6" stroke="#8c7341" fill="none"/>
<circle cx="1127.1" cy="363.8" r="4.3" stroke="#8c7341" stroke-width="1" fill="none"/>
<path d="M1117.9,363.8L1127.5,363.8" stroke="#8c7341" stroke-width="1" fill="none"/>
<path d="M1118.5,389.4L1125.4,389.4L1125.4,405.4L1118.5,405.4Z" stroke="#8c7341" stroke-width="1" fill="none"/>
<ellipse cx="1133.9" cy="397.3" rx="9" ry="7.5" stroke="#8c7341" fill="none" stroke-width="1.2"/>
<path d="M1110.4,383.4L1110.4,405.4" stroke="#00ffff" stroke-width="1" fill="none"/>
<path d="M1112.7,383.4L1112.7,405.4" stroke="#00ffff" stroke-width="1" fill="none"/>
<path d="M1115,383.4L1115,405.4" stroke="#00ffff" stroke-width="1" fill="none"/>
<path d="M1117.3,383.4L1117.3,405.4" stroke="#00ffff" stroke-width="1" fill="none"/>
<path d="M1110.4,383.4L1117.3,383.4" stroke="#00ffff" stroke-width="1" fill="none"/>
<path d="M1110.4,405.4L1117.3,405.4" stroke="#00ffff" stroke-width="1" fill="none"/>
<path d="M1154.2,352.4L1199.7,398.5" stroke="#a4d2ff" stroke-width="3" fill="none"/>
<path d="M1121.1,375.1L1144.6,398.5" stroke="#a4d2ff" stroke-width="3" fill="none"/>
<path d="M1131.8,398.5L1145,398.5" stroke="#a4d2ff" stroke-width="3" fill="none"/>
<path d="M1144.6,398.5L1267.3,398.5L1271.6,404.3" stroke="#00ffff" stroke-width="3" fill="none"/>
<path d="M1158.5,354.2L1159.5,368.7L1164.9,368.7" stroke="#a4d2ff" stroke-width="1" fill="none"/>
<path d="M1125.4,376.6L1133.9,380.8L1140.3,381.3" stroke="#a4d2ff" stroke-width="1" fill="none"/>
<path d="M1144.6,397.9L1155.3,392.6" stroke="#00ffff" stroke-width="1" fill="none"/>
<path d="M1152.1,392.6L1159.5,392.6" stroke="#00ffff" stroke-width="2" fill="none"/>
<path d="M1158.5,368.7L1164.9,368.7" stroke="#00ffff" stroke-width="2" fill="none"/>
<circle cx="1154.2" cy="352.4" r="3" stroke="#ffffff" stroke-width="1" fill="#cfcfcf"/>
<circle cx="1121.1" cy="375.1" r="3" stroke="#ffffff" stroke-width="1" fill="#cfcfcf"/>
<path d="M1121.1,412.2L1281.2,412.2L1286.5,418.2" stroke="#7fc344" stroke-width="3" fill="none"/>
<circle cx="1121.1" cy="412.8" r="1.3" stroke="#ffff00" stroke-width="1" fill="none"/>
<path d="M1122.2,411.4L1130.7,405.4" stroke="#7fc344" stroke-width="1" fill="none"/>
<path d="M1126.4,406L1131.8,406" stroke="#7fc344" stroke-width="2" fill="none"/>
<text transform="translate(1078.8,385.7) scale(0.65,1)" font-family="Liberation Sans,Noto Sans CJK SC,sans-serif" font-size="12.5" fill="#ffffff" text-anchor="middle" dominant-baseline="central">WL-2</text>
<path d="M1068.2,393.2L1101.9,393.2" stroke="#00ff00" stroke-width="1" fill="none"/>
<path d="M1101.9,393.2L1120.7,411.8" stroke="#00ff00" stroke-width="1" fill="none"/>
<text transform="translate(1229.5,399.4) scale(0.8,1)" font-family="Liberation Sans,Noto Sans CJK SC,sans-serif" font-size="9" fill="#00ff00" text-anchor="middle" dominant-baseline="central" font-weight="bold">W</text>
<text transform="translate(1193.3,413.9) scale(0.8,1)" font-family="Liberation Sans,Noto Sans CJK SC,sans-serif" font-size="9" fill="#00ff00" text-anchor="middle" dominant-baseline="central" font-weight="bold">W</text>
<text transform="translate(1206.1,472) scale(0.8,1)" font-family="Liberation Sans,Noto Sans CJK SC,sans-serif" font-size="9" fill="#00ff00" text-anchor="middle" dominant-baseline="central" font-weight="bold">W</text>
<text transform="translate(1162.7,491.2) scale(0.8,1)" font-family="Liberation Sans,Noto Sans CJK SC,sans-serif" font-size="9" fill="#00ff00" text-anchor="middle" dominant-baseline="central" font-weight="bold">W</text>
<path d="M1223.1,337.1L1223.1,370.2" stroke="#00ffff" stroke-width="1" fill="none"/>
<path d="M1224.8,337.1L1224.8,370.2" stroke="#00ffff" stroke-width="1" fill="none"/>
<path d="M1224,337.1A33.1,33.1 0 0 0 1190.9,370.2" stroke="#00ffff" stroke-width="1" fill="none"/>
<path d="M1157.4,413.9A30.9,30.9 0 0 1 1185.6,383.1" stroke="#00ffff" stroke-width="1" fill="none"/>
<path d="M1223.1,421.4L1223.1,454.5" stroke="#00ffff" stroke-width="1" fill="none"/>
<path d="M1224.8,421.4L1224.8,454.5" stroke="#00ffff" stroke-width="1" fill="none"/>
<path d="M1224,454.5A33.1,33.1 0 0 1 1190.9,421.4" stroke="#00ffff" stroke-width="1" fill="none"/>
<path d="M1184.1,416.1L1188.3,416.1" stroke="#ff00ff" stroke-width="1" fill="none"/>
<path d="M1188.3,420.3L1188.3,423.5" stroke="#ff00ff" stroke-width="1" fill="none"/>
<path d="M1110.4,417.1L1110.4,423.5" stroke="#ff00ff" stroke-width="1" fill="none"/>
<path d="M1069.5,417.1L1069.5,423.5" stroke="#ff00ff" stroke-width="1" fill="none"/>
<path d="M1148.9,423.5L1153.1,423.5" stroke="#ff00ff" stroke-width="1" fill="none"/>
<path d="M1050.2,414.3L1060.7,414.3L1060.7,423.9L1050.2,423.9Z" stroke="#ffff00" stroke-width="1" fill="none"/>
<path d="M1050.2,483.3L1060.7,483.3L1060.7,492.9L1050.2,492.9Z" stroke="#ffff00" stroke-width="1" fill="none"/>
<path d="M1079.5,416.5L1101.9,416.5" stroke="#00ffff" stroke-width="1" fill="none"/>
<path d="M1079.5,418.8L1101.9,418.8" stroke="#00ffff" stroke-width="1" fill="none"/>
<path d="M1079.5,421.2L1101.9,421.2" stroke="#00ffff" stroke-width="1" fill="none"/>
<path d="M1079.5,423.5L1101.9,423.5" stroke="#00ffff" stroke-width="1" fill="none"/>
<path d="M1079.5,416.5L1079.5,423.5" stroke="#00ffff" stroke-width="1" fill="none"/>
<path d="M1101.9,416.5L1101.9,423.5" stroke="#00ffff" stroke-width="1" fill="none"/>
<path d="M1063.1,507.8L1068.8,507.8" stroke="#ff00ff" stroke-width="1" fill="none"/>
<path d="M1148.9,500.4L1153.1,500.4" stroke="#ff00ff" stroke-width="1" fill="none"/>
<rect x="1074.2" y="425.7" width="53.8" height="22.4" rx="3" stroke="#8c7341" fill="none" stroke-width="1.3"/>
<rect x="1077.4" y="428.0" width="47.4" height="17.9" rx="4" stroke="#8c7341" fill="none" stroke-width="1"/>
<circle cx="1117.3" cy="436.5" r="1.1" stroke="#8c7341" stroke-width="1" fill="none"/>
<path d="M1122.2,449.6L1152.1,449.6" stroke="#00ffff" stroke-width="2" fill="none"/>
<path d="M1122.6,449.6A28.8,28.8 0 0 0 1148.9,478.3" stroke="#00ffff" stroke-width="1" fill="none"/>
<path d="M1069.9,459.8L1081.6,459.8L1081.6,476.9L1069.9,476.9" stroke="#8c7341" stroke-width="1" fill="none"/>
<ellipse cx="1088.0" cy="468.3" rx="9" ry="7.5" stroke="#8c7341" fill="none" stroke-width="1.2"/>
<ellipse cx="1126.4" cy="490.8" rx="10.5" ry="8.5" stroke="#8c7341" fill="none" stroke-width="1.3"/><ellipse cx="1126.4" cy="490.8" rx="7.5" ry="6" stroke="#8c7341" fill="none"/>
<path d="M1073.1,437L1107.2,469.4" stroke="#a4d2ff" stroke-width="3" fill="none"/>
<path d="M1073.1,455.5L1092.3,455.5" stroke="#a4d2ff" stroke-width="3" fill="none"/>
<path d="M1083.8,469.4L1107.9,469.4" stroke="#a4d2ff" stroke-width="3" fill="none"/>
<path d="M1126.4,492.9L1151,469.4" stroke="#a4d2ff" stroke-width="3" fill="none"/>
<path d="M1107.2,469.4L1267.3,469.4L1271.6,475.4" stroke="#00ffff" stroke-width="3" fill="none"/>
<path d="M1083.8,469.8L1096.6,474.1" stroke="#a4d2ff" stroke-width="1" fill="none"/>
<path d="M1109.4,474.1L1116.8,474.1" stroke="#00ffff" stroke-width="2" fill="none"/>
<circle cx="1073.1" cy="455.5" r="3" stroke="#ffffff" stroke-width="1" fill="#cfcfcf"/>
<circle cx="1073.1" cy="437" r="1.5" stroke="#8c7341" stroke-width="1" fill="#8c7341"/>
<path d="M1073.1,489.7L1281.2,489.7L1285.5,495" stroke="#7fc344" stroke-width="3" fill="none"/>
<circle cx="1073.1" cy="490.1" r="1.3" stroke="#ffff00" stroke-width="1" fill="none"/>
<path d="M1074.2,489.1L1082.7,483.9" stroke="#7fc344" stroke-width="1" fill="none"/>
<path d="M1081.6,483.9L1088,483.9" stroke="#7fc344" stroke-width="2" fill="none"/>
<text transform="translate(1087.4,515.7) scale(0.65,1)" font-family="Liberation Sans,Noto Sans CJK SC,sans-serif" font-size="12.5" fill="#ffffff" text-anchor="middle" dominant-baseline="central">WL-1</text>
<path d="M1073.5,523.2L1106.6,523.2" stroke="#00ff00" stroke-width="1" fill="none"/>
<path d="M1073.5,490.8L1073.5,523.2" stroke="#00ff00" stroke-width="1" fill="none"/>
<text transform="translate(1114.7,458.7) scale(0.75,1)" font-family="Liberation Sans,Noto Sans CJK SC,sans-serif" font-size="10.5" fill="#828282" text-anchor="middle" dominant-baseline="central">卫生间</text>
<text transform="translate(1199,459.8) scale(0.75,1)" font-family="Liberation Sans,Noto Sans CJK SC,sans-serif" font-size="10.5" fill="#828282" text-anchor="middle" dominant-baseline="central">衣帽间</text>
<text transform="translate(1213.3,519.6) scale(0.75,1)" font-family="Liberation Sans,Noto Sans CJK SC,sans-serif" font-size="10.5" fill="#a0a0a0" text-anchor="middle" dominant-baseline="central">客厅</text>
<text transform="translate(1310,459.8) scale(0.75,1)" font-family="Liberation Sans,Noto Sans CJK SC,sans-serif" font-size="11.5" fill="#828282" text-anchor="middle" dominant-baseline="central">B1 户型</text>
<text transform="translate(1306.8,476.9) scale(0.75,1)" font-family="Liberation Sans,Noto Sans CJK SC,sans-serif" font-size="10.5" fill="#828282" text-anchor="middle" dominant-baseline="central">玄关</text>
<path d="M1303,320L1272.7,347.7" stroke="#a4d2ff" stroke-width="3" fill="none"/>
<path d="M1325,320L1287.6,355.2" stroke="#00ffff" stroke-width="2.6" fill="none"/>
<path d="M1271.6,341.3L1271.6,404.3" stroke="#a4d2ff" stroke-width="3.4" fill="none"/>
<path d="M1286.5,348.8L1286.5,418.2" stroke="#00ffff" stroke-width="3.4" fill="none"/>
<path d="M1271.6,404.3L1271.6,545" stroke="#7fc344" stroke-width="3.2" fill="none"/>
<path d="M1286.5,418.2L1286.5,545" stroke="#7fc344" stroke-width="3.2" fill="none"/>
<path d="M1268.4,341.3L1268.4,338.1L1275.2,338.1L1275.2,341.3" stroke="#ffffff" stroke-width="1" fill="none"/>
<path d="M1282.9,348.8L1282.9,345.6L1290.2,345.6L1290.2,348.8" stroke="#ffffff" stroke-width="1" fill="none"/>
<path d="M1269.5,342.4L1262,349.5" stroke="#a4d2ff" stroke-width="1" fill="none"/>
<path d="M1257.3,349.5L1263.1,349.5" stroke="#a4d2ff" stroke-width="2.5" fill="none"/>
<path d="M1285.5,349.9L1280.1,354.2" stroke="#00ffff" stroke-width="1" fill="none"/>
<path d="M1275.9,354.2L1281.2,354.2" stroke="#00ffff" stroke-width="2.5" fill="none"/>
<path d="M1247.5,387.9L1263.1,387.9L1271.6,404.3" stroke="#7fc344" stroke-width="1" fill="none"/>
<path d="M1250.2,385.1L1259.9,385.1" stroke="#7fc344" stroke-width="2.5" fill="none"/>
<path d="M1273.7,405.4L1299.3,430.6L1311.1,430.6" stroke="#7fc344" stroke-width="1" fill="none"/>
<path d="M1300,428L1310,428" stroke="#7fc344" stroke-width="2.5" fill="none"/>
<text transform="translate(1381.5,359.5) scale(0.65,1)" font-family="Liberation Sans,Noto Sans CJK SC,sans-serif" font-size="11.5" fill="#ffffff" text-anchor="middle" dominant-baseline="central">JlL-1</text>
<path d="M1356.5,339.6L1356.5,345.6" stroke="#ff00ff" stroke-width="1" fill="none"/>
<path d="M1400.7,339.6L1400.7,345.6" stroke="#ff00ff" stroke-width="1" fill="none"/>
<path d="M1337.8,427.8L1337.8,434.2" stroke="#ff00ff" stroke-width="1" fill="none"/>
<path d="M1418.9,427.8L1418.9,434.2" stroke="#ff00ff" stroke-width="1" fill="none"/>
<path d="M1331.4,339.6L1337.8,339.6" stroke="#ff00ff" stroke-width="1" fill="none"/>
<path d="M1419.9,339.6L1426.8,339.6" stroke="#ff00ff" stroke-width="1" fill="none"/>
<path d="M1331.4,434.6L1337.8,434.6" stroke="#ff00ff" stroke-width="1" fill="none"/>
<path d="M1371.3,367.4L1412.5,367.4L1440,388.7" stroke="#00ff00" stroke-width="1" fill="none"/>
<circle cx="1430.6" cy="387.7" r="1.7" stroke="#00ffff" stroke-width="1" fill="none"/>
<text transform="translate(1431.2,396.8) scale(0.65,1)" font-family="Liberation Sans,Noto Sans CJK SC,sans-serif" font-size="7" fill="#1466ff" text-anchor="middle" dominant-baseline="central" font-weight="bold">D</text>
<path d="M1430.6,389.4L1430.6,471.5" stroke="#00ff00" stroke-width="1" fill="none"/>
<text transform="translate(1401.8,447.6) scale(0.65,1)" font-family="Liberation Sans,Noto Sans CJK SC,sans-serif" font-size="12.5" fill="#ffffff" text-anchor="middle" dominant-baseline="central">RHL-1</text>
<path d="M1388.3,455.1L1430.6,455.1" stroke="#00ff00" stroke-width="1" fill="none"/>
<text transform="translate(1403.9,463.4) scale(0.65,1)" font-family="Liberation Sans,Noto Sans CJK SC,sans-serif" font-size="12.5" fill="#ffffff" text-anchor="middle" dominant-baseline="central">RJlL-1</text>
<path d="M1391.1,471.1L1430.6,471.1" stroke="#00ff00" stroke-width="1" fill="none"/>
<path d="M1327.1,490.8L1342,490.8" stroke="#ffffff" stroke-width="1" fill="none"/>
<path d="M1334.6,483.3L1334.6,497.6" stroke="#ffffff" stroke-width="1" fill="none"/>
<path d="M1335.2,490.8L1341.4,490.8L1341.4,496.7L1335.2,496.7Z" stroke="#ffffff" stroke-width="1" fill="none"/>
<circle cx="1341.4" cy="496.7" r="1.7" stroke="#ff2020" stroke-width="1" fill="none"/>
<path d="M1341.4,496.7L1347.8,496.7" stroke="#ffffff" stroke-width="1" fill="none"/>
<path d="M1348.4,511.5L1355.9,511.5" stroke="#ff00ff" stroke-width="1" fill="none"/>
<text transform="translate(1315.3,526.6) scale(0.65,1)" font-family="Liberation Sans,Noto Sans CJK SC,sans-serif" font-size="12.5" fill="#ffffff" text-anchor="middle" dominant-baseline="central">XHL-1</text>
<path d="M1302.1,534.1L1341.4,534.1" stroke="#00ff00" stroke-width="1" fill="none"/>
<path d="M1341.4,498.4L1341.4,534.1" stroke="#00ff00" stroke-width="1" fill="none"/>
<path d="M1426.3,320L1426.3,329.6L1440,327.5" stroke="#00ffff" stroke-width="1" fill="none"/>
<text transform="translate(1441.6,363.3) scale(0.75,1)" font-family="Liberation Sans,Noto Sans CJK SC,sans-serif" font-size="10.5" fill="#828282" text-anchor="middle" dominant-baseline="central">电井</text>
<path d="M1418.8,339.6L1418.8,346" stroke="#ff00ff" stroke-width="1" fill="none"/>
<path d="M1426,339.6L1426,346" stroke="#ff00ff" stroke-width="1" fill="none"/>
<path d="M1418.8,427.8L1418.8,434.2" stroke="#ff00ff" stroke-width="1" fill="none"/>
<path d="M1400,367.4L1412.8,367.4L1440.6,387.9" stroke="#00ff00" stroke-width="1" fill="none"/>
<circle cx="1430.9" cy="387.7" r="1.7" stroke="#00ffff" stroke-width="1" fill="none"/>
<circle cx="1439.9" cy="387.9" r="1.7" stroke="#00ff00" stroke-width="1" fill="none"/>
<text transform="translate(1431.4,396.8) scale(0.65,1)" font-family="Liberation Sans,Noto Sans CJK SC,sans-serif" font-size="7" fill="#1466ff" text-anchor="middle" dominant-baseline="central" font-weight="bold">D</text>
<path d="M1430.9,389.4L1430.9,471.5" stroke="#00ff00" stroke-width="1" fill="none"/>
<path d="M1400,455.1L1430.9,455.1" stroke="#00ff00" stroke-width="1" fill="none"/>
<path d="M1400,471.1L1430.9,471.1" stroke="#00ff00" stroke-width="1" fill="none"/>
<circle cx="1457.2" cy="415.6" r="3.4" stroke="#ffffff" stroke-width="1" fill="#cfcfcf"/>
<circle cx="1457.2" cy="425" r="2.1" stroke="#ffa060" stroke-width="1" fill="none"/>
<text transform="translate(1486.4,400.7) scale(0.65,1)" font-family="Liberation Sans,Noto Sans CJK SC,sans-serif" font-size="12.5" fill="#ffffff" text-anchor="middle" dominant-baseline="central">FL-1</text>
<path d="M1473.6,407.1L1504.6,407.1" stroke="#00ff00" stroke-width="1" fill="none"/>
<path d="M1473.6,407.1L1458.1,424.2" stroke="#00ff00" stroke-width="1" fill="none"/>
<path d="M1509.3,342.4L1509.3,378.1" stroke="#00ffff" stroke-width="1" fill="none"/>
<path d="M1509.9,378.3A35.9,35.9 0 0 1 1474.2,345.5" stroke="#00ffff" stroke-width="1" fill="none"/>
<text transform="translate(1562.2,392.6) scale(0.92,1)" font-family="Liberation Sans,Noto Sans CJK SC,sans-serif" font-size="11" fill="#828282" text-anchor="middle" dominant-baseline="central">( 消防电梯  )</text>
<path d="M1515.3,339.6L1515.3,345.6" stroke="#ff00ff" stroke-width="1" fill="none"/>
<path d="M1539.2,339.6L1539.2,345.6" stroke="#ff00ff" stroke-width="1" fill="none"/>
<path d="M1583.6,339.6L1583.6,345.6" stroke="#ff00ff" stroke-width="1" fill="none"/>
<path d="M1521.2,427.8L1521.2,434.2" stroke="#ff00ff" stroke-width="1" fill="none"/>
<path d="M1602.3,427.8L1602.3,434.2" stroke="#ff00ff" stroke-width="1" fill="none"/>
<path d="M1602.8,339.6L1609.2,339.6" stroke="#ff00ff" stroke-width="1" fill="none"/>
<path d="M1602.8,434.6L1609.2,434.6" stroke="#ff00ff" stroke-width="1" fill="none"/>
<text transform="translate(1549.4,450.2) scale(0.8,1)" font-family="Liberation Sans,Noto Sans CJK SC,sans-serif" font-size="10.5" fill="#828282" text-anchor="middle" dominant-baseline="central">1# 交通核</text>
<text transform="translate(1548.3,467.3) scale(0.8,1)" font-family="Liberation Sans,Noto Sans CJK SC,sans-serif" font-size="10.5" fill="#828282" text-anchor="middle" dominant-baseline="central">合用前室</text>
<path d="M1561.2,493.3L1587.4,493.3L1587.4,500.4L1561.2,500.4Z" stroke="#ff1010" stroke-width="1" fill="none"/>
<path d="M1561.8,499.7L1587,494L1587,499.7Z" stroke="#ff1010" stroke-width="1" fill="#ff1010"/>
<path d="M1562.2,492.5L1582.5,488.6" stroke="#ff1010" stroke-width="1" fill="none"/>
<path d="M1587.4,497.2L1596.8,497.2" stroke="#ff1010" stroke-width="1" fill="none"/>
<circle cx="1598.5" cy="497.2" r="1.7" stroke="#ff1010" stroke-width="1" fill="none"/>
<path d="M1583.6,504.6L1583.6,508.9" stroke="#ff00ff" stroke-width="1" fill="none"/>
<path d="M1591.5,507.8L1591.5,511" stroke="#ff00ff" stroke-width="1" fill="none"/>
<text transform="translate(1613.4,526.6) scale(0.65,1)" font-family="Liberation Sans,Noto Sans CJK SC,sans-serif" font-size="12.5" fill="#ffffff" text-anchor="middle" dominant-baseline="central">XHL-2</text>
<path d="M1598.5,534.1L1638.6,534.1" stroke="#00ff00" stroke-width="1" fill="none"/>
<path d="M1598.5,498.9L1598.5,534.1" stroke="#00ff00" stroke-width="1" fill="none"/>
<text transform="translate(1469.4,514.7) scale(0.8,1)" font-family="Liberation Sans,Noto Sans CJK SC,sans-serif" font-size="10.5" fill="#828282" text-anchor="middle" dominant-baseline="central">风井</text>
<path d="M1448.7,501L1448.7,504.6" stroke="#ff00ff" stroke-width="1" fill="none"/>
<path d="M1492.8,501L1492.8,504.6" stroke="#ff00ff" stroke-width="1" fill="none"/>
<path d="M1499.7,501L1499.7,507.8" stroke="#ff00ff" stroke-width="1" fill="none"/>
<path d="M1467.2,530.9L1473.6,530.9" stroke="#ff00ff" stroke-width="1" fill="none"/>
<path d="M1493.9,530.9L1499.7,530.9" stroke="#ff00ff" stroke-width="1" fill="none"/>
<path d="M1555.8,512.1L1587.8,512.1" stroke="#00ffff" stroke-width="1" fill="none"/>
<path d="M1555.8,513.8L1587.8,513.8" stroke="#00ffff" stroke-width="1" fill="none"/>
<path d="M1554.7,513.2A33.1,33.1 0 0 0 1585,546.1" stroke="#00ffff" stroke-width="1" fill="none"/>
<path d="M1615.6,320L1653.4,356.7" stroke="#ffff00" stroke-width="1" fill="none"/>
<path d="M1638,320L1668.3,349.9" stroke="#ffff00" stroke-width="1" fill="none"/>
<path d="M1653.4,347.7L1653.4,545" stroke="#ffff00" stroke-width="1" fill="none"/>
<path d="M1668.3,340.3L1668.3,545" stroke="#ffff00" stroke-width="1" fill="none"/>
<path d="M1650.2,348.8L1650.2,345.6L1657.6,345.6L1657.6,348.8" stroke="#ffffff" stroke-width="1" fill="none"/>
<path d="M1664.7,340.9L1664.7,337.7L1672.1,337.7L1672.1,340.9" stroke="#ffffff" stroke-width="1" fill="none"/>
<path d="M1668.3,403.7L1673.6,398.5L1800,398.5" stroke="#ffff00" stroke-width="1" fill="none"/>
<path d="M1653.4,417.8L1658.7,412.2L1800,412.2" stroke="#ffff00" stroke-width="1" fill="none"/>
<path d="M1668.3,474.7L1673.6,469.4L1800,469.4" stroke="#ffff00" stroke-width="1" fill="none"/>
<path d="M1653.4,495L1658.7,489.7L1800,489.7" stroke="#ffff00" stroke-width="1" fill="none"/>
<path d="M1703.5,395.6L1715.5,395.6L1715.5,403.2L1703.5,403.2Z" stroke="#000" stroke-width="0" fill="#000"/>
<text transform="translate(1709.5,399.4) scale(0.7,1)" font-family="Liberation Sans,Noto Sans CJK SC,sans-serif" font-size="10" fill="#00ff00" text-anchor="middle" dominant-baseline="central" font-weight="bold">W</text>
<path d="M1740.2,410.1L1752.2,410.1L1752.2,417.8L1740.2,417.8Z" stroke="#000" stroke-width="0" fill="#000"/>
<text transform="translate(1746.2,413.9) scale(0.7,1)" font-family="Liberation Sans,Noto Sans CJK SC,sans-serif" font-size="10" fill="#00ff00" text-anchor="middle" dominant-baseline="central" font-weight="bold">W</text>
<path d="M1770.8,487.3L1782.7,487.3L1782.7,495L1770.8,495Z" stroke="#000" stroke-width="0" fill="#000"/>
<text transform="translate(1776.7,491.2) scale(0.7,1)" font-family="Liberation Sans,Noto Sans CJK SC,sans-serif" font-size="10" fill="#00ff00" text-anchor="middle" dominant-baseline="central" font-weight="bold">W</text>
<path d="M1740.4,398.5L1785.9,352.4" stroke="#ffff00" stroke-width="1" fill="none"/>
<path d="M1773.5,352.4L1773.5,364.8" stroke="#ffff00" stroke-width="1" fill="none"/>
<circle cx="1773.5" cy="352.4" r="1.1" stroke="#ffffff" stroke-width="1" fill="#fff"/>
<circle cx="1785.9" cy="352.4" r="3.4" stroke="#ffffff" stroke-width="1" fill="#cfcfcf"/>
<ellipse cx="1772.5" cy="355.2" rx="10.5" ry="8.5" stroke="#8c7341" fill="none" stroke-width="1.3"/><ellipse cx="1772.5" cy="355.7" rx="8" ry="6" stroke="#8c7341" fill="none"/>
<path d="M1716.3,338.1L1716.3,370.2" stroke="#00ffff" stroke-width="2" fill="none"/>
<path d="M1716.3,337.1A33.1,33.1 0 0 1 1749.3,367.3" stroke="#00ffff" stroke-width="1" fill="none"/>
<path d="M1756,383.1A30.9,30.9 0 0 1 1784.1,411.2" stroke="#00ffff" stroke-width="1" fill="none"/>
<path d="M1754.3,412.2L1784.2,412.2" stroke="#00ffff" stroke-width="2.4" fill="none"/>
<path d="M1752.2,416.1L1752.2,422.5" stroke="#ff00ff" stroke-width="1" fill="none"/>
<path d="M1716.3,421.4L1716.3,454.5" stroke="#00ffff" stroke-width="2" fill="none"/>
<path d="M1749.3,424.3A33.1,33.1 0 0 1 1716.3,454.5" stroke="#00ffff" stroke-width="1" fill="none"/>
<text transform="translate(1654.4,459.8) scale(0.75,1)" font-family="Liberation Sans,Noto Sans CJK SC,sans-serif" font-size="11.5" fill="#828282" text-anchor="middle" dominant-baseline="central">B1 户型</text>
<text transform="translate(1657.8,476.9) scale(0.75,1)" font-family="Liberation Sans,Noto Sans CJK SC,sans-serif" font-size="10.5" fill="#828282" text-anchor="middle" dominant-baseline="central">玄关</text>
<text transform="translate(1735.5,472) scale(0.75,1)" font-family="Liberation Sans,Noto Sans CJK SC,sans-serif" font-size="10.5" fill="#828282" text-anchor="middle" dominant-baseline="central">衣帽间</text>
<path d="M1788.9,449.6L1800,449.6" stroke="#00ffff" stroke-width="2" fill="none"/>
<path d="M1789.5,420.3L1789.5,423.5" stroke="#ff00ff" stroke-width="1" fill="none"/>
<path d="M1787.4,500.4L1791.7,500.4" stroke="#ff00ff" stroke-width="1" fill="none"/>
<path d="M1790.6,469.4L1800,479" stroke="#ffff00" stroke-width="1" fill="none"/>
<path d="M1717.4,338.2L1717.4,371.2" stroke="#00ffff" stroke-width="2.4" fill="none"/>
<path d="M1717.4,338.2A32,32 0 0 1 1749.3,367.4" stroke="#00ffff" stroke-width="1" fill="none"/>
<ellipse cx="1772.9" cy="355.9" rx="10.5" ry="8.5" stroke="#8c7341" fill="none" stroke-width="1.3"/><ellipse cx="1772.9" cy="356.4" rx="8" ry="6" stroke="#8c7341" fill="none"/>
<circle cx="1813.5" cy="363.3" r="3.8" stroke="#8c7341" stroke-width="1" fill="none"/>
<path d="M1813.5,363.3L1822,363.3" stroke="#8c7341" stroke-width="1" fill="none"/>
<path d="M1822,389.4L1815.6,389.4L1815.6,406.5L1822,406.5" stroke="#8c7341" stroke-width="1" fill="none"/>
<ellipse cx="1806.0" cy="397.9" rx="9" ry="7.5" stroke="#8c7341" fill="none" stroke-width="1.2"/>
<circle cx="1808.1" cy="398.4" r="0.9" stroke="#ffffff" stroke-width="1" fill="#fff"/>
<path d="M1822.6,383.4L1822.6,405.4" stroke="#00ffff" stroke-width="1" fill="none"/>
<path d="M1825.3,383.4L1825.3,405.4" stroke="#00ffff" stroke-width="1" fill="none"/>
<path d="M1827.9,383.4L1827.9,405.4" stroke="#00ffff" stroke-width="1" fill="none"/>
<path d="M1830.5,383.4L1830.5,405.4" stroke="#00ffff" stroke-width="1" fill="none"/>
<path d="M1822.6,383.4L1830.5,383.4" stroke="#00ffff" stroke-width="1" fill="none"/>
<path d="M1822.6,405.4L1830.5,405.4" stroke="#00ffff" stroke-width="1" fill="none"/>
<path d="M1740.9,398.6L1786.1,352.5" stroke="#ffff00" stroke-width="1" fill="none"/>
<path d="M1773.3,352.5L1773.3,364.8" stroke="#ffff00" stroke-width="1" fill="none"/>
<circle cx="1773.3" cy="352.5" r="1.1" stroke="#ffffff" stroke-width="1" fill="#fff"/>
<circle cx="1786.1" cy="352.5" r="3.4" stroke="#ffffff" stroke-width="1" fill="#cfcfcf"/>
<path d="M1796.4,397.9L1818.8,375.1" stroke="#ffff00" stroke-width="1" fill="none"/>
<circle cx="1818.8" cy="375.1" r="3.4" stroke="#ffffff" stroke-width="1" fill="#cfcfcf"/>
<path d="M1680,398.6L1808.1,398.6" stroke="#ffff00" stroke-width="1" fill="none"/>
<path d="M1680,412.2L1818.8,412.2" stroke="#ffff00" stroke-width="1" fill="none"/>
<circle cx="1818.8" cy="412.5" r="1.7" stroke="#ffff00" stroke-width="1" fill="none"/>
<path d="M1704.6,394.7L1715.2,394.7L1715.2,403.7L1704.6,403.7Z" stroke="#000" stroke-width="0" fill="#000"/>
<text transform="translate(1710.3,399.4) scale(0.7,1)" font-family="Liberation Sans,Noto Sans CJK SC,sans-serif" font-size="10" fill="#00ff00" text-anchor="middle" dominant-baseline="central" font-weight="bold">W</text>
<path d="M1741.9,409.7L1751.5,409.7L1751.5,418.2L1741.9,418.2Z" stroke="#000" stroke-width="0" fill="#000"/>
<text transform="translate(1746.6,414) scale(0.7,1)" font-family="Liberation Sans,Noto Sans CJK SC,sans-serif" font-size="10" fill="#00ff00" text-anchor="middle" dominant-baseline="central" font-weight="bold">W</text>
<path d="M1756.2,382.9A29.5,29.5 0 0 1 1783.1,411.2" stroke="#00ffff" stroke-width="1" fill="none"/>
<path d="M1753.7,412.2L1783.6,412.2" stroke="#00ffff" stroke-width="2.4" fill="none"/>
<path d="M1752.6,417.2L1752.6,422.5" stroke="#ff00ff" stroke-width="1" fill="none"/>
<text transform="translate(1852.5,385.1) scale(0.65,1)" font-family="Liberation Sans,Noto Sans CJK SC,sans-serif" font-size="12.5" fill="#ffffff" text-anchor="middle" dominant-baseline="central">WL-7</text>
<path d="M1839.1,393.2L1872.8,393.2" stroke="#00ff00" stroke-width="1" fill="none"/>
<path d="M1839.1,393.2L1819.9,411.4" stroke="#00ff00" stroke-width="1" fill="none"/>
<text transform="translate(1898.2,385.1) scale(0.65,1)" font-family="Liberation Sans,Noto Sans CJK SC,sans-serif" font-size="12.5" fill="#ffffff" text-anchor="middle" dominant-baseline="central">WL-10</text>
<path d="M1885,393.2L1918.7,393.2" stroke="#00ff00" stroke-width="1" fill="none"/>
<path d="M1716.3,421.4L1716.3,454.5" stroke="#00ffff" stroke-width="2.4" fill="none"/>
<path d="M1714.2,421.4L1714.2,454.5" stroke="#00ffff" stroke-width="1" fill="none"/>
<path d="M1748.2,424.3A32.5,32.5 0 0 1 1715.9,453.9" stroke="#00ffff" stroke-width="1" fill="none"/>
<text transform="translate(1735.9,472) scale(0.75,1)" font-family="Liberation Sans,Noto Sans CJK SC,sans-serif" font-size="10.5" fill="#828282" text-anchor="middle" dominant-baseline="central">衣帽间</text>
<path d="M1839.1,416.5L1861.5,416.5" stroke="#00ffff" stroke-width="1" fill="none"/>
<path d="M1839.1,418.9L1861.5,418.9" stroke="#00ffff" stroke-width="1" fill="none"/>
<path d="M1839.1,421.2L1861.5,421.2" stroke="#00ffff" stroke-width="1" fill="none"/>
<path d="M1839.1,423.6L1861.5,423.6" stroke="#00ffff" stroke-width="1" fill="none"/>
<path d="M1839.1,416.5L1839.1,423.6" stroke="#00ffff" stroke-width="1" fill="none"/>
<path d="M1861.5,416.5L1861.5,423.6" stroke="#00ffff" stroke-width="1" fill="none"/>
<path d="M1830.5,416.1L1830.5,423.6" stroke="#ff00ff" stroke-width="1" fill="none"/>
<path d="M1870,416.1L1870,423.6" stroke="#ff00ff" stroke-width="1" fill="none"/>
<path d="M1787.4,423.6L1791.5,423.6" stroke="#ff00ff" stroke-width="1" fill="none"/>
<path d="M1787.4,500.4L1791.5,500.4" stroke="#ff00ff" stroke-width="1" fill="none"/>
<path d="M1870.7,508.3L1877.5,508.3" stroke="#ff00ff" stroke-width="1" fill="none"/>
<rect x="1809.8" y="425.7" width="56.6" height="22.4" rx="3" stroke="#8c7341" fill="none" stroke-width="1.3"/>
<rect x="1812.8" y="428.1" width="50.2" height="17.9" rx="4" stroke="#8c7341" fill="none" stroke-width="1"/>
<circle cx="1820.5" cy="436.6" r="1.1" stroke="#8c7341" stroke-width="1" fill="none"/>
<circle cx="1866.2" cy="436.6" r="1.5" stroke="#8c7341" stroke-width="1" fill="#8c7341"/>
<path d="M1788.9,449.6L1817.7,449.6" stroke="#00ffff" stroke-width="2.4" fill="none"/>
<path d="M1818.2,449.6A28.8,28.8 0 0 1 1791.8,478.3" stroke="#00ffff" stroke-width="1" fill="none"/>
<path d="M1870,459.9L1858.3,459.9L1858.3,478L1870,478" stroke="#8c7341" stroke-width="1" fill="none"/>
<ellipse cx="1852.5" cy="469.0" rx="9" ry="7.5" stroke="#8c7341" fill="none" stroke-width="1.2"/>
<circle cx="1855.5" cy="469.5" r="0.9" stroke="#ffffff" stroke-width="1" fill="#fff"/>
<ellipse cx="1813.5" cy="490.8" rx="10.5" ry="8.5" stroke="#8c7341" fill="none" stroke-width="1.3"/><ellipse cx="1813.5" cy="490.8" rx="7.5" ry="6" stroke="#8c7341" fill="none"/>
<path d="M1834.8,469.5L1866.2,437" stroke="#ffff00" stroke-width="1" fill="none"/>
<path d="M1848.7,455.6L1865.8,455.6" stroke="#ffff00" stroke-width="1" fill="none"/>
<circle cx="1866.8" cy="455.6" r="3.4" stroke="#ffffff" stroke-width="1" fill="#cfcfcf"/>
<path d="M1680,469.5L1855.1,469.5" stroke="#ffff00" stroke-width="1" fill="none"/>
<path d="M1790,469.5L1813.5,493" stroke="#ffff00" stroke-width="1" fill="none"/>
<path d="M1680,489.8L1865.8,489.8" stroke="#ffff00" stroke-width="1" fill="none"/>
<circle cx="1866.4" cy="493.4" r="1.9" stroke="#ffff00" stroke-width="1" fill="none"/>
<path d="M1866.4,495.1L1866.4,526.7" stroke="#00ff00" stroke-width="1" fill="none"/>
<path d="M1771.8,486.6L1782.1,486.6L1782.1,495.5L1771.8,495.5Z" stroke="#000" stroke-width="0" fill="#000"/>
<text transform="translate(1777.2,491.3) scale(0.7,1)" font-family="Liberation Sans,Noto Sans CJK SC,sans-serif" font-size="10" fill="#00ff00" text-anchor="middle" dominant-baseline="central" font-weight="bold">W</text>
<text transform="translate(1822,468.4) scale(0.75,1)" font-family="Liberation Sans,Noto Sans CJK SC,sans-serif" font-size="10.5" fill="#828282" text-anchor="middle" dominant-baseline="central">卫生间</text>
<text transform="translate(1845.5,519.7) scale(0.65,1)" font-family="Liberation Sans,Noto Sans CJK SC,sans-serif" font-size="12.5" fill="#ffffff" text-anchor="middle" dominant-baseline="central">WL-8</text>
<path d="M1834.2,526.7L1866.4,526.7" stroke="#00ff00" stroke-width="1" fill="none"/>
<path d="M1885.4,508.3L1892.5,508.3" stroke="#ff00ff" stroke-width="1" fill="none"/>
<path d="M1892.5,416.1L1892.5,423.6" stroke="#ff00ff" stroke-width="1" fill="none"/>
<path d="M1901.7,416.5L1920,416.5" stroke="#00ffff" stroke-width="1" fill="none"/>
<path d="M1901.7,418.9L1920,418.9" stroke="#00ffff" stroke-width="1" fill="none"/>
<path d="M1901.7,421.2L1920,421.2" stroke="#00ffff" stroke-width="1" fill="none"/>
<path d="M1901.7,423.6L1920,423.6" stroke="#00ffff" stroke-width="1" fill="none"/>
<path d="M1901.7,416.5L1901.7,423.6" stroke="#00ffff" stroke-width="1" fill="none"/>
<path d="M1920,416.5L1920,423.6" stroke="#00ffff" stroke-width="1" fill="none"/>
<path d="M1920,426.3L1899.9,426.3L1896.1,431L1896.1,443.9L1899.9,448.1L1920,448.1" stroke="#8c7341" stroke-width="1" fill="none"/>
<circle cx="1896.7" cy="437" r="1.5" stroke="#8c7341" stroke-width="1" fill="#8c7341"/>
<path d="M1896.7,437L1920,459.9" stroke="#ffff00" stroke-width="1" fill="none"/>
<path d="M1896.7,455.6L1920,455.6" stroke="#ffff00" stroke-width="1" fill="none"/>
<circle cx="1896.1" cy="455.6" r="3.4" stroke="#ffffff" stroke-width="1" fill="#cfcfcf"/>
<path d="M1892.9,459.9L1901,459.9L1901,478L1892.9,478" stroke="#8c7341" stroke-width="1" fill="none"/>
<ellipse cx="1909.6" cy="469.0" rx="9" ry="7.5" stroke="#8c7341" fill="none" stroke-width="1.2"/>
<circle cx="1906.8" cy="469.5" r="0.9" stroke="#ffffff" stroke-width="1" fill="#fff"/>
<path d="M1896.1,489.8L1920,489.8" stroke="#ffff00" stroke-width="1" fill="none"/>
<circle cx="1896.1" cy="493.4" r="1.9" stroke="#ffff00" stroke-width="1" fill="none"/>
<path d="M1896.1,495.1L1896.1,526.7" stroke="#00ff00" stroke-width="1" fill="none"/>
<path d="M1896.1,526.7L1920,526.7" stroke="#00ff00" stroke-width="1" fill="none"/>
<text transform="translate(1908.1,519.7) scale(0.65,1)" font-family="Liberation Sans,Noto Sans CJK SC,sans-serif" font-size="12.5" fill="#ffffff" text-anchor="middle" dominant-baseline="central">WL-9</text>
<path d="M1050.2,564.2L1060.7,564.2L1060.7,573.8L1050.2,573.8Z" stroke="#ffff00" stroke-width="1" fill="none"/>
<path d="M1050.2,642.1L1060.7,642.1L1060.7,651.7L1050.2,651.7Z" stroke="#ffff00" stroke-width="1" fill="none"/>
<path d="M1063.1,589.3L1069.5,589.3" stroke="#ff00ff" stroke-width="1" fill="none"/>
<path d="M1194.7,589.3L1202.2,589.3" stroke="#ff00ff" stroke-width="1" fill="none"/>
<path d="M1349.5,589.3L1356.3,589.3" stroke="#ff00ff" stroke-width="1" fill="none"/>
<path d="M1088.7,645.3L1088.7,651.7" stroke="#ff00ff" stroke-width="1" fill="none"/>
<path d="M1221,645.3L1221,651.7" stroke="#ff00ff" stroke-width="1" fill="none"/>
<path d="M1194.1,645.3L1194.1,651.7" stroke="#ff00ff" stroke-width="1" fill="none"/>
<path d="M1356.3,645.3L1356.3,651.7" stroke="#ff00ff" stroke-width="1" fill="none"/>
<path d="M1099.3,644.6L1165.9,644.6" stroke="#00ffff" stroke-width="1" fill="none"/>
<path d="M1099.3,647L1165.9,647" stroke="#00ffff" stroke-width="1" fill="none"/>
<path d="M1099.3,649.3L1165.9,649.3" stroke="#00ffff" stroke-width="1" fill="none"/>
<path d="M1099.3,651.7L1165.9,651.7" stroke="#00ffff" stroke-width="1" fill="none"/>
<path d="M1099.3,644.6L1099.3,651.7" stroke="#00ffff" stroke-width="1" fill="none"/>
<path d="M1165.9,644.6L1165.9,651.7" stroke="#00ffff" stroke-width="1" fill="none"/>
<text transform="translate(1130.7,575.9) scale(0.75,1)" font-family="Liberation Sans,Noto Sans CJK SC,sans-serif" font-size="10.5" fill="#a0a0a0" text-anchor="middle" dominant-baseline="central">主卧</text>
<path d="M1250.2,647.8L1266.3,647.8" stroke="#c8c8c8" stroke-width="1" fill="none"/>
<path d="M1266.3,640.4L1268.8,640.4L1268.8,658.5L1266.3,658.5" stroke="#ffffff" stroke-width="1" fill="none"/>
<path d="M1279.1,640.4L1275.9,640.4L1275.9,658.5L1279.1,658.5" stroke="#ffffff" stroke-width="1" fill="none"/>
<path d="M1279.5,640.4L1282.7,640.4L1282.7,658.5L1279.5,658.5" stroke="#ffffff" stroke-width="1" fill="none"/>
<path d="M1292.9,640.4L1290.2,640.4L1290.2,658.5L1292.9,658.5" stroke="#ffffff" stroke-width="1" fill="none"/>
<path d="M1224,699.7L1326.7,699.7" stroke="#00ffff" stroke-width="1" fill="none"/>
<path d="M1224,701.8L1326.7,701.8" stroke="#00ffff" stroke-width="1" fill="none"/>
<path d="M1224,704L1326.7,704" stroke="#00ffff" stroke-width="1" fill="none"/>
<path d="M1224,706.1L1326.7,706.1" stroke="#00ffff" stroke-width="1" fill="none"/>
<path d="M1224,699.7L1224,706.1" stroke="#00ffff" stroke-width="1" fill="none"/>
<path d="M1326.7,699.7L1326.7,706.1" stroke="#00ffff" stroke-width="1" fill="none"/>
<text transform="translate(1244.5,676.2) scale(0.75,1)" font-family="Liberation Sans,Noto Sans CJK SC,sans-serif" font-size="10.5" fill="#828282" text-anchor="middle" dominant-baseline="central">封闭阳台</text>
<path d="M1271.6,530L1271.6,755" stroke="#7fc344" stroke-width="3.2" fill="none"/>
<path d="M1286.5,530L1286.5,755" stroke="#7fc344" stroke-width="3.2" fill="none"/>
<path d="M1270.3,549.9L1278,549.9" stroke="#00ff00" stroke-width="1" fill="none"/>
<path d="M1270.3,551.3L1278,551.3" stroke="#00ff00" stroke-width="1" fill="none"/>
<path d="M1270.3,552.8L1278,552.8" stroke="#00ff00" stroke-width="1" fill="none"/>
<path d="M1284.2,589.3L1291.9,589.3" stroke="#00ff00" stroke-width="1" fill="none"/>
<path d="M1284.2,590.8L1291.9,590.8" stroke="#00ff00" stroke-width="1" fill="none"/>
<path d="M1284.2,592.3L1291.9,592.3" stroke="#00ff00" stroke-width="1" fill="none"/>
<path d="M1270.3,736.6L1278,736.6" stroke="#00ff00" stroke-width="1" fill="none"/>
<path d="M1270.3,738.1L1278,738.1" stroke="#00ff00" stroke-width="1" fill="none"/>
<path d="M1270.3,739.6L1278,739.6" stroke="#00ff00" stroke-width="1" fill="none"/>
<text transform="translate(1211.8,562) scale(0.65,1)" font-family="Liberation Sans,Noto Sans CJK SC,sans-serif" font-size="12.5" fill="#ffffff" text-anchor="middle" dominant-baseline="central">WQB-DN150</text>
<path d="M1184.1,570.1L1258.8,570.1" stroke="#00ff00" stroke-width="1" fill="none"/>
<path d="M1258.8,570.1L1270.1,602.6L1270.1,637.8" stroke="#00ff00" stroke-width="1" fill="none"/>
<path d="M1262,579.5L1283.3,639.9" stroke="#00ff00" stroke-width="1" fill="none"/>
<text transform="translate(1211.8,582.9) scale(0.75,1)" font-family="Liberation Sans,Noto Sans CJK SC,sans-serif" font-size="11.5" fill="#ffffff" text-anchor="middle" dominant-baseline="central">中心:-0.925</text>
<text transform="translate(1227.8,594.7) scale(0.65,1)" font-family="Liberation Sans,Noto Sans CJK SC,sans-serif" font-size="12.5" fill="#ffffff" text-anchor="middle" dominant-baseline="central">YL-1</text>
<path d="M1214,603.2L1246,603.2" stroke="#00ff00" stroke-width="1" fill="none"/>
<path d="M1214,603.2L1202.6,654.9" stroke="#00ff00" stroke-width="1" fill="none"/>
<text transform="translate(1228.9,613.9) scale(0.65,1)" font-family="Liberation Sans,Noto Sans CJK SC,sans-serif" font-size="12.5" fill="#ffffff" text-anchor="middle" dominant-baseline="central">NL-1</text>
<path d="M1216.1,621.4L1248.1,621.4" stroke="#00ff00" stroke-width="1" fill="none"/>
<path d="M1216.1,621.4L1208.6,654.9" stroke="#00ff00" stroke-width="1" fill="none"/>
<text transform="translate(1165.5,620.7) scale(0.72,1)" font-family="Liberation Sans,Noto Sans CJK SC,sans-serif" font-size="12.5" fill="#ffffff" text-anchor="middle" dominant-baseline="central"><tspan font-size="16" dy="-0.5">Φ</tspan><tspan dy="1">150</tspan></text>
<path d="M1148.9,629.3L1185.1,629.3" stroke="#00ff00" stroke-width="1" fill="none"/>
<path d="M1185.1,629.3L1194.1,651.7" stroke="#00ff00" stroke-width="1" fill="none"/>
<text transform="translate(1155.3,677.3) scale(0.85,1)" font-family="Liberation Sans,Noto Sans CJK SC,sans-serif" font-size="11.5" fill="#ffffff" text-anchor="middle" dominant-baseline="central">排至散水</text>
<path d="M1132.2,686.5L1174.5,686.5" stroke="#00ff00" stroke-width="1" fill="none"/>
<path d="M1174.5,686.5L1189.4,658.1" stroke="#00ff00" stroke-width="1" fill="none"/>
<path d="M1174.5,686.5L1189.4,663.4" stroke="#00ff00" stroke-width="1" fill="none"/>
<path d="M1174.5,686.5L1189.4,669.2" stroke="#00ff00" stroke-width="1" fill="none"/>
<text transform="translate(1171.7,692.2) scale(0.72,1)" font-family="Liberation Sans,Noto Sans CJK SC,sans-serif" font-size="12.5" fill="#ffffff" text-anchor="middle" dominant-baseline="central"><tspan font-size="16" dy="-0.5">Φ</tspan><tspan dy="1">80</tspan></text>
<path d="M1155.9,701.2L1185.1,701.2" stroke="#00ff00" stroke-width="1" fill="none"/>
<path d="M1185.1,701.2L1192.6,666.6" stroke="#00ff00" stroke-width="1" fill="none"/>
<text transform="translate(1172.8,707.2) scale(0.72,1)" font-family="Liberation Sans,Noto Sans CJK SC,sans-serif" font-size="12.5" fill="#ffffff" text-anchor="middle" dominant-baseline="central"><tspan font-size="16" dy="-0.5">Φ</tspan><tspan dy="1">50</tspan></text>
<path d="M1157,716.1L1186.2,716.1" stroke="#00ff00" stroke-width="1" fill="none"/>
<path d="M1186.2,716.1L1194.1,668.7" stroke="#00ff00" stroke-width="1" fill="none"/>
<circle cx="1189.4" cy="654.9" r="1.7" stroke="#00ffff" stroke-width="1" fill="none"/>
<circle cx="1202.2" cy="654.9" r="1.7" stroke="#00ffff" stroke-width="1" fill="none"/>
<path d="M1187.3,655.9L1204.4,655.9" stroke="#00ffff" stroke-width="1" fill="none"/>
<path d="M1188.3,662.3L1204.4,662.3" stroke="#1466ff" stroke-width="1" fill="none"/>
<path d="M1188.3,669.4L1206.5,669.4" stroke="#1466ff" stroke-width="1" fill="none"/>
<circle cx="1189" cy="662.3" r="1.5" stroke="#1466ff" stroke-width="1" fill="none"/>
<circle cx="1189" cy="669.4" r="1.5" stroke="#1466ff" stroke-width="1" fill="none"/>
<text transform="translate(1208.6,639.9) rotate(-90) scale(0.65,1)" font-family="Liberation Sans,Noto Sans CJK SC,sans-serif" font-size="12.5" fill="#ffffff" text-anchor="middle" dominant-baseline="central">100</text>
<text transform="translate(1209.7,658.1) rotate(-90) scale(0.65,1)" font-family="Liberation Sans,Noto Sans CJK SC,sans-serif" font-size="12.5" fill="#ffffff" text-anchor="middle" dominant-baseline="central">200</text>
<text transform="translate(1209.7,682.6) rotate(-90) scale(0.65,1)" font-family="Liberation Sans,Noto Sans CJK SC,sans-serif" font-size="12.5" fill="#ffffff" text-anchor="middle" dominant-baseline="central">200</text>
<path d="M1204.4,662.8L1215.5,662.8L1215.5,690.1L1204.4,690.1Z" stroke="#ff00ff" stroke-width="1" fill="none"/>
<path d="M1205.4,664L1214.6,689" stroke="#ff00ff" stroke-width="1" fill="none"/>
<path d="M1220.4,651.7L1220.4,672.6" stroke="#00ff00" stroke-width="1" fill="none"/>
<path d="M1216.1,654.9L1227.8,654.9" stroke="#00ff00" stroke-width="1" fill="none"/>
<path d="M1216.1,662.3L1227.8,662.3" stroke="#00ff00" stroke-width="1" fill="none"/>
<path d="M1216.1,669.8L1227.8,669.8" stroke="#00ff00" stroke-width="1" fill="none"/>
<text transform="translate(1321.8,616) scale(0.65,1)" font-family="Liberation Sans,Noto Sans CJK SC,sans-serif" font-size="12.5" fill="#ffffff" text-anchor="middle" dominant-baseline="central">WL-3</text>
<path d="M1311.1,623.5L1344.2,623.5" stroke="#00ff00" stroke-width="1" fill="none"/>
<path d="M1344.2,623.5L1344.2,655.9" stroke="#00ff00" stroke-width="1" fill="none"/>
<path d="M1327.1,652.7L1347.4,652.7L1347.4,675.1L1327.1,675.1Z" stroke="#8c7341" stroke-width="1" fill="none"/>
<path d="M1344.2,657L1292.9,657L1286.5,662.3" stroke="#00ffff" stroke-width="3" fill="none"/>
<path d="M1344.2,667.7L1276.9,667.7L1271.6,673" stroke="#a4d2ff" stroke-width="3" fill="none"/>
<circle cx="1344.2" cy="657.4" r="1.3" stroke="#ffff00" stroke-width="1" fill="none"/>
<circle cx="1344.2" cy="667.7" r="2.8" stroke="#ffffff" stroke-width="1" fill="#cfcfcf"/>
<text transform="translate(1329.2,679.4) scale(0.72,1)" font-family="Liberation Sans,Noto Sans CJK SC,sans-serif" font-size="12.5" fill="#ffffff" text-anchor="middle" dominant-baseline="central"><tspan font-size="16" dy="-0.5">Φ</tspan><tspan dy="1">80</tspan></text>
<path d="M1314.3,687.5L1343.1,687.5" stroke="#00ff00" stroke-width="1" fill="none"/>
<path d="M1343.1,687.5L1352.7,713.6" stroke="#00ff00" stroke-width="1" fill="none"/>
<path d="M1343.1,713.1L1360.2,713.1" stroke="#1466ff" stroke-width="1" fill="none"/>
<circle cx="1360.2" cy="713.1" r="1.5" stroke="#1466ff" stroke-width="1" fill="none"/>
<path d="M1360.2,671.3L1360.2,711.9" stroke="#1466ff" stroke-width="1" fill="none"/>
<circle cx="1360.2" cy="669.8" r="1.5" stroke="#1466ff" stroke-width="1" fill="none"/>
<text transform="translate(1361.2,690.1) rotate(90) scale(0.65,1)" font-family="Liberation Sans,Noto Sans CJK SC,sans-serif" font-size="8" fill="#00ff00" text-anchor="middle" dominant-baseline="central" font-weight="bold">N</text>
<text transform="translate(1307.9,729.6) scale(0.85,1)" font-family="Liberation Sans,Noto Sans CJK SC,sans-serif" font-size="11.5" fill="#ffffff" text-anchor="middle" dominant-baseline="central">排至散水</text>
<path d="M1287.6,738.1L1328.2,738.1" stroke="#00ff00" stroke-width="1" fill="none"/>
<path d="M1328.2,738.1L1344.2,713.6" stroke="#00ff00" stroke-width="1" fill="none"/>
<text transform="translate(1317.5,714.6) rotate(-90) scale(0.65,1)" font-family="Liberation Sans,Noto Sans CJK SC,sans-serif" font-size="12.5" fill="#ffffff" text-anchor="middle" dominant-baseline="central">200</text>
<path d="M1325,713.1L1343.1,713.1" stroke="#00ff00" stroke-width="1" fill="none"/>
<path d="M1325,717.8L1345.2,717.8" stroke="#00ff00" stroke-width="1" fill="none"/>
<path d="M1328.2,709.3L1328.2,721" stroke="#00ff00" stroke-width="1" fill="none"/>
<text transform="translate(1342.7,728.5) scale(0.65,1)" font-family="Liberation Sans,Noto Sans CJK SC,sans-serif" font-size="12.5" fill="#ffffff" text-anchor="middle" dominant-baseline="central">100</text>
<text transform="translate(1381.5,728.5) scale(0.65,1)" font-family="Liberation Sans,Noto Sans CJK SC,sans-serif" font-size="12.5" fill="#ffffff" text-anchor="middle" dominant-baseline="central">200</text>
<path d="M1356.3,724.2L1356.3,745.6" stroke="#00ff00" stroke-width="1" fill="none"/>
<path d="M1360.2,714.6L1360.2,755" stroke="#00ff00" stroke-width="1" fill="none"/>
<path d="M1367.6,724.2L1367.6,745.6" stroke="#00ff00" stroke-width="1" fill="none"/>
<path d="M1352.7,737.5L1370.8,737.5" stroke="#00ff00" stroke-width="1" fill="none"/>
<path d="M1356.3,603.6L1363.4,603.6L1364.4,629.3L1358,629.3Z" stroke="#ff1010" stroke-width="1" fill="#ff1010"/>
<path d="M1364,604.7L1368.7,625" stroke="#ff1010" stroke-width="1" fill="none"/>
<path d="M1359.7,629.3L1359.7,638.4" stroke="#ff1010" stroke-width="1" fill="none"/>
<circle cx="1359.7" cy="640.4" r="1.7" stroke="#ff1010" stroke-width="1" fill="none"/>
<text transform="translate(1394.3,613.9) scale(0.65,1)" font-family="Liberation Sans,Noto Sans CJK SC,sans-serif" font-size="12.5" fill="#ffffff" text-anchor="middle" dominant-baseline="central">XHL-1</text>
<path d="M1377.2,621.4L1416.7,621.4" stroke="#00ff00" stroke-width="1" fill="none"/>
<path d="M1377.2,621.4L1361.2,638.9" stroke="#00ff00" stroke-width="1" fill="none"/>
<text transform="translate(1392.2,633.9) scale(0.65,1)" font-family="Liberation Sans,Noto Sans CJK SC,sans-serif" font-size="12.5" fill="#ffffff" text-anchor="middle" dominant-baseline="central">NL-3</text>
<path d="M1379.4,640.4L1411.4,640.4" stroke="#00ff00" stroke-width="1" fill="none"/>
<path d="M1379.4,640.4L1360.6,668.7" stroke="#00ff00" stroke-width="1" fill="none"/>
<path d="M1383.6,647L1383.6,674.7" stroke="#00ffff" stroke-width="1" fill="none"/>
<path d="M1383.6,674.7A27.7,27.7 0 0 0 1411,651.8" stroke="#00ffff" stroke-width="1" fill="none"/>
<path d="M1440,674.7A27.7,27.7 0 0 1 1412.7,651.8" stroke="#00ffff" stroke-width="1" fill="none"/>
<text transform="translate(1408.8,538.5) scale(0.75,1)" font-family="Liberation Sans,Noto Sans CJK SC,sans-serif" font-size="10.5" fill="#a0a0a0" text-anchor="middle" dominant-baseline="central">门厅</text>
<text transform="translate(1416.7,553.9) scale(0.62,1)" font-family="Liberation Sans,Noto Sans CJK SC,sans-serif" font-size="11.5" fill="#828282" text-anchor="middle" dominant-baseline="central">±0.000</text>
<path d="M1431.7,647.4L1440,647.4" stroke="#ffffff" stroke-width="1" fill="none"/>
<path d="M1438.1,639.9L1438.1,653.8" stroke="#ffffff" stroke-width="1" fill="none"/>
<path d="M1466.6,618.6L1473.6,618.6" stroke="#ff00ff" stroke-width="1" fill="none"/>
<path d="M1430.9,647.4L1444.8,647.4" stroke="#ffffff" stroke-width="1" fill="none"/>
<path d="M1438,639.9L1438,653.8" stroke="#ffffff" stroke-width="1" fill="none"/>
<path d="M1438.4,651.7L1438.4,674.7" stroke="#00ffff" stroke-width="1" fill="none"/>
<path d="M1438.4,674.7A27.7,27.7 0 0 1 1411.1,651.8" stroke="#00ffff" stroke-width="1" fill="none"/>
<text transform="translate(1522.1,575.9) scale(0.75,1)" font-family="Liberation Sans,Noto Sans CJK SC,sans-serif" font-size="10.5" fill="#a0a0a0" text-anchor="middle" dominant-baseline="central">卧室</text>
<text transform="translate(1611.3,574.8) scale(0.75,1)" font-family="Liberation Sans,Noto Sans CJK SC,sans-serif" font-size="10.5" fill="#a0a0a0" text-anchor="middle" dominant-baseline="central">客厅</text>
<path d="M1585,543.7A33.1,33.1 0 0 1 1554.7,510.8" stroke="#00ffff" stroke-width="1" fill="none"/>
<path d="M1583.6,589.3L1591,589.3" stroke="#ff00ff" stroke-width="1" fill="none"/>
<path d="M1466.6,651.7L1473.6,651.7" stroke="#ff00ff" stroke-width="1" fill="none"/>
<path d="M1583.6,651.7L1591,651.7" stroke="#ff00ff" stroke-width="1" fill="none"/>
<path d="M1501.4,644.6L1556.9,644.6" stroke="#00ffff" stroke-width="1" fill="none"/>
<path d="M1501.4,647L1556.9,647" stroke="#00ffff" stroke-width="1" fill="none"/>
<path d="M1501.4,649.3L1556.9,649.3" stroke="#00ffff" stroke-width="1" fill="none"/>
<path d="M1501.4,651.7L1556.9,651.7" stroke="#00ffff" stroke-width="1" fill="none"/>
<path d="M1501.4,644.6L1501.4,651.7" stroke="#00ffff" stroke-width="1" fill="none"/>
<path d="M1556.9,644.6L1556.9,651.7" stroke="#00ffff" stroke-width="1" fill="none"/>
<path d="M1639.1,647.8L1648.7,647.8" stroke="#c8c8c8" stroke-width="1" fill="none"/>
<path d="M1675.3,647.8L1690.3,647.8" stroke="#c8c8c8" stroke-width="1" fill="none"/>
<path d="M1648.7,640.4L1651.2,640.4L1651.2,658.5L1648.7,658.5" stroke="#ffffff" stroke-width="1" fill="none"/>
<path d="M1661.5,640.4L1658.3,640.4L1658.3,658.5L1661.5,658.5" stroke="#ffffff" stroke-width="1" fill="none"/>
<path d="M1661.9,640.4L1665.1,640.4L1665.1,658.5L1661.9,658.5" stroke="#ffffff" stroke-width="1" fill="none"/>
<path d="M1675.3,640.4L1672.6,640.4L1672.6,658.5L1675.3,658.5" stroke="#ffffff" stroke-width="1" fill="none"/>
<path d="M1516.3,655.5L1542.6,655.5L1542.6,667.7L1516.3,667.7Z" stroke="#ff00ff" stroke-width="1" fill="none"/>
<path d="M1517.8,666.6L1541.3,657" stroke="#ff00ff" stroke-width="1" fill="none"/>
<text transform="translate(1552.6,661.3) scale(0.72,1)" font-family="Liberation Sans,Noto Sans CJK SC,sans-serif" font-size="12.5" fill="#ffffff" text-anchor="middle" dominant-baseline="central"><tspan font-size="16" dy="-0.5">Φ</tspan><tspan dy="1">50</tspan></text>
<path d="M1536.6,670.4L1565.4,670.4" stroke="#00ff00" stroke-width="1" fill="none"/>
<path d="M1565.4,670.4L1572.5,679.4" stroke="#00ff00" stroke-width="1" fill="none"/>
<text transform="translate(1550.1,685.4) scale(0.85,1)" font-family="Liberation Sans,Noto Sans CJK SC,sans-serif" font-size="11.5" fill="#ffffff" text-anchor="middle" dominant-baseline="central">水舌</text>
<path d="M1536.6,694.4L1571.8,680.5" stroke="#00ff00" stroke-width="1" fill="none"/>
<text transform="translate(1538.7,701.2) scale(0.85,1)" font-family="Liberation Sans,Noto Sans CJK SC,sans-serif" font-size="11.5" fill="#ffffff" text-anchor="middle" dominant-baseline="central">排至散水</text>
<path d="M1516.3,710.4L1558.4,710.4" stroke="#00ff00" stroke-width="1" fill="none"/>
<path d="M1558.4,710.4L1572.5,687.5" stroke="#00ff00" stroke-width="1" fill="none"/>
<path d="M1558.4,710.4L1580.4,687.5" stroke="#00ff00" stroke-width="1" fill="none"/>
<text transform="translate(1563.3,613.2) scale(0.72,1)" font-family="Liberation Sans,Noto Sans CJK SC,sans-serif" font-size="12.5" fill="#ffffff" text-anchor="middle" dominant-baseline="central"><tspan font-size="16" dy="-0.5">Φ</tspan><tspan dy="1">80</tspan></text>
<path d="M1548.3,621.4L1576.7,621.4" stroke="#00ff00" stroke-width="1" fill="none"/>
<path d="M1576.7,621.4L1579.3,668.7" stroke="#00ff00" stroke-width="1" fill="none"/>
<text transform="translate(1575.5,651.2) scale(0.65,1)" font-family="Liberation Sans,Noto Sans CJK SC,sans-serif" font-size="12.5" fill="#ffffff" text-anchor="middle" dominant-baseline="central">200</text>
<text transform="translate(1595.9,651.2) scale(0.65,1)" font-family="Liberation Sans,Noto Sans CJK SC,sans-serif" font-size="12.5" fill="#ffffff" text-anchor="middle" dominant-baseline="central">100</text>
<path d="M1569.7,660.2L1586.8,660.2" stroke="#00ff00" stroke-width="1" fill="none"/>
<path d="M1572.5,655.9L1572.5,664.5" stroke="#00ff00" stroke-width="1" fill="none"/>
<path d="M1580.4,655.9L1580.4,668.7" stroke="#00ff00" stroke-width="1" fill="none"/>
<path d="M1580.4,668.7L1580.4,686.9" stroke="#1466ff" stroke-width="1" fill="none"/>
<path d="M1572.5,677.3L1572.5,686.9" stroke="#1466ff" stroke-width="1" fill="none"/>
<circle cx="1580.4" cy="669.8" r="1.5" stroke="#1466ff" stroke-width="1" fill="none"/>
<path d="M1570.8,686.9L1575,686.9" stroke="#1466ff" stroke-width="1" fill="none"/>
<path d="M1578.9,686.9L1582.5,686.9" stroke="#1466ff" stroke-width="1" fill="none"/>
<path d="M1580.4,687.5L1580.4,728.5" stroke="#00ff00" stroke-width="1" fill="none"/>
<text transform="translate(1592.1,721) scale(0.65,1)" font-family="Liberation Sans,Noto Sans CJK SC,sans-serif" font-size="12.5" fill="#ffffff" text-anchor="middle" dominant-baseline="central">NL-4</text>
<path d="M1580.4,728.5L1613.4,728.5" stroke="#00ff00" stroke-width="1" fill="none"/>
<text transform="translate(1609.2,616) scale(0.65,1)" font-family="Liberation Sans,Noto Sans CJK SC,sans-serif" font-size="12.5" fill="#ffffff" text-anchor="middle" dominant-baseline="central">WL-6</text>
<path d="M1596.4,623.5L1629.5,623.5" stroke="#00ff00" stroke-width="1" fill="none"/>
<path d="M1596.4,623.5L1596.4,655.9" stroke="#00ff00" stroke-width="1" fill="none"/>
<path d="M1592.1,652.7L1614.5,652.7L1614.5,676.2L1592.1,676.2Z" stroke="#8c7341" stroke-width="1" fill="none"/>
<path d="M1596.8,657L1648.7,657L1653.4,662.3" stroke="#ffff00" stroke-width="1" fill="none"/>
<path d="M1596.8,667.7L1663.6,667.7L1668.3,673" stroke="#ffff00" stroke-width="1" fill="none"/>
<circle cx="1596.8" cy="657.4" r="1.3" stroke="#ffff00" stroke-width="1" fill="none"/>
<circle cx="1596.8" cy="667.7" r="2.8" stroke="#ffffff" stroke-width="1" fill="#cfcfcf"/>
<path d="M1613.4,699.7L1716.5,699.7" stroke="#00ffff" stroke-width="1" fill="none"/>
<path d="M1613.4,701.8L1716.5,701.8" stroke="#00ffff" stroke-width="1" fill="none"/>
<path d="M1613.4,704L1716.5,704" stroke="#00ffff" stroke-width="1" fill="none"/>
<path d="M1613.4,706.1L1716.5,706.1" stroke="#00ffff" stroke-width="1" fill="none"/>
<path d="M1613.4,699.7L1613.4,706.1" stroke="#00ffff" stroke-width="1" fill="none"/>
<path d="M1716.5,699.7L1716.5,706.1" stroke="#00ffff" stroke-width="1" fill="none"/>
<text transform="translate(1614.5,688) scale(0.75,1)" font-family="Liberation Sans,Noto Sans CJK SC,sans-serif" font-size="10.5" fill="#828282" text-anchor="middle" dominant-baseline="central">封闭阳台</text>
<path d="M1653.4,530L1653.4,660.2" stroke="#ffff00" stroke-width="1" fill="none"/>
<path d="M1653.4,673.4L1653.4,755" stroke="#ffff00" stroke-width="1" fill="none"/>
<path d="M1668.3,530L1668.3,755" stroke="#ffff00" stroke-width="1" fill="none"/>
<path d="M1665.5,549.9L1673.2,549.9" stroke="#00ff00" stroke-width="1" fill="none"/>
<path d="M1665.5,551.3L1673.2,551.3" stroke="#00ff00" stroke-width="1" fill="none"/>
<path d="M1665.5,552.8L1673.2,552.8" stroke="#00ff00" stroke-width="1" fill="none"/>
<path d="M1650.6,589.3L1658.3,589.3" stroke="#00ff00" stroke-width="1" fill="none"/>
<path d="M1650.6,590.8L1658.3,590.8" stroke="#00ff00" stroke-width="1" fill="none"/>
<path d="M1650.6,592.3L1658.3,592.3" stroke="#00ff00" stroke-width="1" fill="none"/>
<path d="M1665.5,736L1673.2,736" stroke="#00ff00" stroke-width="1" fill="none"/>
<path d="M1665.5,737.5L1673.2,737.5" stroke="#00ff00" stroke-width="1" fill="none"/>
<path d="M1665.5,739L1673.2,739" stroke="#00ff00" stroke-width="1" fill="none"/>
<text transform="translate(1707.4,562) scale(0.65,1)" font-family="Liberation Sans,Noto Sans CJK SC,sans-serif" font-size="12.5" fill="#ffffff" text-anchor="middle" dominant-baseline="central">WOB-DN150</text>
<path d="M1681.3,570.1L1755.4,570.1" stroke="#00ff00" stroke-width="1" fill="none"/>
<path d="M1681.3,570.1L1655.1,648.5" stroke="#00ff00" stroke-width="1" fill="none"/>
<path d="M1678.5,579.5L1670,641" stroke="#00ff00" stroke-width="1" fill="none"/>
<text transform="translate(1711.6,582.9) scale(0.75,1)" font-family="Liberation Sans,Noto Sans CJK SC,sans-serif" font-size="11.5" fill="#ffffff" text-anchor="middle" dominant-baseline="central">中心:-0.925</text>
<text transform="translate(1772.5,577.4) scale(0.65,1)" font-family="Liberation Sans,Noto Sans CJK SC,sans-serif" font-size="12.5" fill="#ffffff" text-anchor="middle" dominant-baseline="central">NL-6</text>
<path d="M1760.7,584.4L1792.7,584.4" stroke="#00ff00" stroke-width="1" fill="none"/>
<path d="M1760.7,584.4L1731.9,653.8" stroke="#00ff00" stroke-width="1" fill="none"/>
<text transform="translate(1781,595.7) scale(0.65,1)" font-family="Liberation Sans,Noto Sans CJK SC,sans-serif" font-size="12.5" fill="#ffffff" text-anchor="middle" dominant-baseline="central">YL-6</text>
<path d="M1763.9,604.3L1800,604.3" stroke="#00ff00" stroke-width="1" fill="none"/>
<path d="M1763.9,604.3L1739.4,653.8" stroke="#00ff00" stroke-width="1" fill="none"/>
<text transform="translate(1770.3,621.4) scale(0.72,1)" font-family="Liberation Sans,Noto Sans CJK SC,sans-serif" font-size="12.5" fill="#ffffff" text-anchor="middle" dominant-baseline="central"><tspan font-size="16" dy="-0.5">Φ</tspan><tspan dy="1">150</tspan></text>
<path d="M1755.4,629.3L1791.7,629.3" stroke="#00ff00" stroke-width="1" fill="none"/>
<path d="M1755.4,629.3L1744.1,651.7" stroke="#00ff00" stroke-width="1" fill="none"/>
<path d="M1739.4,589.3L1745.8,589.3" stroke="#ff00ff" stroke-width="1" fill="none"/>
<path d="M1719.7,645.3L1719.7,651.7" stroke="#ff00ff" stroke-width="1" fill="none"/>
<path d="M1744.7,645.3L1744.7,651.7" stroke="#ff00ff" stroke-width="1" fill="none"/>
<text transform="translate(1731.3,638.9) rotate(-90) scale(0.65,1)" font-family="Liberation Sans,Noto Sans CJK SC,sans-serif" font-size="12.5" fill="#ffffff" text-anchor="middle" dominant-baseline="central">100</text>
<text transform="translate(1710.6,659.1) rotate(-90) scale(0.65,1)" font-family="Liberation Sans,Noto Sans CJK SC,sans-serif" font-size="12.5" fill="#ffffff" text-anchor="middle" dominant-baseline="central">200</text>
<text transform="translate(1730.4,682.6) rotate(-90) scale(0.65,1)" font-family="Liberation Sans,Noto Sans CJK SC,sans-serif" font-size="12.5" fill="#ffffff" text-anchor="middle" dominant-baseline="central">200</text>
<path d="M1724.4,662.3L1735.5,662.3L1735.5,689L1724.4,689Z" stroke="#ff00ff" stroke-width="1" fill="none"/>
<path d="M1734.7,664L1725.5,688" stroke="#ff00ff" stroke-width="1" fill="none"/>
<path d="M1720.2,651.7L1720.2,672.6" stroke="#00ff00" stroke-width="1" fill="none"/>
<path d="M1712.7,654.9L1726.6,654.9" stroke="#00ff00" stroke-width="1" fill="none"/>
<path d="M1712.7,662.3L1726.6,662.3" stroke="#00ff00" stroke-width="1" fill="none"/>
<path d="M1712.7,669.8L1726.6,669.8" stroke="#00ff00" stroke-width="1" fill="none"/>
<circle cx="1730.8" cy="654.9" r="1.7" stroke="#1466ff" stroke-width="1" fill="none"/>
<circle cx="1738.3" cy="654.9" r="1.7" stroke="#00ffff" stroke-width="1" fill="none"/>
<path d="M1738.3,653.8L1752.2,653.8L1752.2,657L1739.4,657" stroke="#00ffff" stroke-width="1" fill="none"/>
<path d="M1730.8,655.9L1737.2,662.3L1751.8,662.3" stroke="#1466ff" stroke-width="1" fill="none"/>
<path d="M1734,669.4L1751.8,669.4" stroke="#1466ff" stroke-width="1" fill="none"/>
<circle cx="1751.8" cy="662.8" r="1.3" stroke="#1466ff" stroke-width="1" fill="none"/>
<circle cx="1751.8" cy="669.4" r="1.3" stroke="#1466ff" stroke-width="1" fill="none"/>
<text transform="translate(1786.8,677.3) scale(0.85,1)" font-family="Liberation Sans,Noto Sans CJK SC,sans-serif" font-size="11.5" fill="#ffffff" text-anchor="middle" dominant-baseline="central">排至散水</text>
<path d="M1765.4,686.5L1800,686.5" stroke="#00ff00" stroke-width="1" fill="none"/>
<path d="M1765.4,686.5L1752.6,663.4" stroke="#00ff00" stroke-width="1" fill="none"/>
<path d="M1765.4,686.5L1752.6,669.8" stroke="#00ff00" stroke-width="1" fill="none"/>
<text transform="translate(1766.7,692.2) scale(0.72,1)" font-family="Liberation Sans,Noto Sans CJK SC,sans-serif" font-size="12.5" fill="#ffffff" text-anchor="middle" dominant-baseline="central"><tspan font-size="16" dy="-0.5">Φ</tspan><tspan dy="1">80</tspan></text>
<path d="M1753.3,701.2L1783.1,701.2" stroke="#00ff00" stroke-width="1" fill="none"/>
<path d="M1753.3,701.2L1746.2,669.8" stroke="#00ff00" stroke-width="1" fill="none"/>
<text transform="translate(1766.1,707.2) scale(0.72,1)" font-family="Liberation Sans,Noto Sans CJK SC,sans-serif" font-size="12.5" fill="#ffffff" text-anchor="middle" dominant-baseline="central"><tspan font-size="16" dy="-0.5">Φ</tspan><tspan dy="1">50</tspan></text>
<path d="M1754.3,716.1L1782.1,716.1" stroke="#00ff00" stroke-width="1" fill="none"/>
<path d="M1754.3,716.1L1744.7,666.6" stroke="#00ff00" stroke-width="1" fill="none"/>
<path d="M1738.7,589.4L1745.1,589.4" stroke="#ff00ff" stroke-width="1" fill="none"/>
<path d="M1774.4,644.7L1841.6,644.7" stroke="#00ffff" stroke-width="1" fill="none"/>
<path d="M1774.4,647L1841.6,647" stroke="#00ffff" stroke-width="1" fill="none"/>
<path d="M1774.4,649.4L1841.6,649.4" stroke="#00ffff" stroke-width="1" fill="none"/>
<path d="M1774.4,651.7L1841.6,651.7" stroke="#00ffff" stroke-width="1" fill="none"/>
<path d="M1774.4,644.7L1774.4,651.7" stroke="#00ffff" stroke-width="1" fill="none"/>
<path d="M1841.6,644.7L1841.6,651.7" stroke="#00ffff" stroke-width="1" fill="none"/>
<path d="M1852.5,645.3L1852.5,651.7" stroke="#ff00ff" stroke-width="1" fill="none"/>
<path d="M1719.5,645.3L1719.5,651.7" stroke="#ff00ff" stroke-width="1" fill="none"/>
<path d="M1745.1,645.3L1745.1,651.7" stroke="#ff00ff" stroke-width="1" fill="none"/>
<path d="M1870.7,589.4L1877.5,589.4" stroke="#ff00ff" stroke-width="1" fill="none"/>
<path d="M1885.4,570.1L1892.5,570.1" stroke="#ff00ff" stroke-width="1" fill="none"/>
<text transform="translate(1807.7,575.9) scale(0.75,1)" font-family="Liberation Sans,Noto Sans CJK SC,sans-serif" font-size="10.5" fill="#a0a0a0" text-anchor="middle" dominant-baseline="central">主卧</text></svg></div><div style="position:absolute;left:660px;top:115px;width:600px;height:45px;background:#485b80;color:#e4e4e4;font-size:20px;line-height:46px;text-align:center;white-space:nowrap;letter-spacing:-0.100px">点击左键选择直线的端点或弧线，空格键退回上一点，右键完成</div><div style="position:absolute;left:690px;top:953px;width:539px;height:47px;background:#5f5f5f;border:1px solid #7c7c7c">
<div style="position:absolute;left:47px;top:7px;width:1px;height:31px;background:#777"></div>
<div style="position:absolute;left:52px;top:9px;font-size:18px;line-height:26px;color:#dedede;white-space:nowrap">标注分类</div>
<div style="position:absolute;left:132px;top:1px;width:225px;height:42px;border:1px solid #0a0a0a;box-shadow:inset 0 0 0 1px #6e6e6e"></div>
<div style="position:absolute;left:139px;top:12px;width:21px;height:21px;background:#a2d2ff;border:1px solid #111"></div>
<div style="position:absolute;left:164px;top:10px;font-family:'Liberation Mono',monospace;font-size:16px;line-height:26px;color:#e4e4e4;letter-spacing:-0.700px">W-DN75</div>
<div style="position:absolute;left:360px;top:7px;width:1px;height:31px;background:#777"></div>
<svg width="539" height="47" viewBox="690 953 539 47" style="position:absolute;left:-1px;top:-1px"><g fill="none" stroke="#f2f2f2" stroke-width="1.600"><rect x="704.200" y="968" width="7.600" height="7.600" rx="1.800"/><rect x="704.200" y="978.600" width="7.600" height="7.600" rx="1.800"/><rect x="714.800" y="978.600" width="7.600" height="7.600" rx="1.800"/><rect x="714.800" y="968" width="7.600" height="7.600" rx="1.800" transform="rotate(45 718.600 971.800)"/><path d="M1073.9,966.3H1066.6Q1065.3,966.3 1065.3,967.6V985.1Q1065.3,986.4 1066.6,986.4H1084Q1085.3,986.4 1085.3,985.1V982.6M1069.3,970.9V980.6Q1069.3,981.8 1070.5,981.8H1086.5V974.4"/><path d="M1074,977.6L1076.2,972.6L1083.4,965.6Q1084.4,964.8 1085.4,965.8L1087,967.4Q1087.8,968.4 1087,969.4L1079.6,976.2Z" stroke-linejoin="round"/><path d="M1119.1,966V986.4M1108.4,976.2H1129.8M1115.8,969.3L1119.1,966L1122.4,969.3M1115.8,983.1L1119.1,986.4L1122.4,983.1M1111.7,972.9L1108.4,976.2L1111.7,979.5M1126.5,972.9L1129.8,976.2L1126.5,979.5" stroke-width="1.300"/><circle cx="1119.1" cy="976.2" r="1.2" fill="#f2f2f2" stroke="none"/><rect x="1151.8" y="970.3" width="14.900" height="16.100" rx="3"/><path d="M1157.5,970.3V967.6Q1157.5,965.8 1159.3,965.8H1170.6Q1172.4,965.8 1172.4,967.6V980Q1172.4,981.8 1170.6,981.8H1167.2"/><path d="M1197,968.2H1194.7V984.7H1203.9M1207.9,968.2H1210.2V974.9"/><rect x="1197" y="965.8" width="10.900" height="4.500" rx="1.200"/><rect x="1204.5" y="975.5" width="10.900" height="10.300" rx="1"/></g><path d="M1034.2,973.2H1043.6L1038.9,979.5Z" fill="#fff"/></svg>
</div><div id="panel">
<div style="position:absolute;left:0;top:0;width:195px;height:43px;background:#f3f3f3"></div>
<div style="position:absolute;left:12px;top:10px;font-family:'Liberation Sans','Noto Sans CJK SC',sans-serif;font-size:18px;line-height:24px;color:#7a7a7a">测量</div>
<div style="position:absolute;left:164px;top:9px;width:30px;height:30px;background:#d9d9d9;color:#f4f4f4;font-family:'Liberation Sans',sans-serif;font-weight:bold;font-size:16px;line-height:32px;text-align:center">×</div>
<div class="prow" style="top:41px;border-top:none;"><svg style="left:64.4px" viewBox="0 0 24 24"><path d="M3,5L22,19M1,8L7,2M18,22L24,16" fill="none" stroke="#1da4ea" stroke-width="1.4"/><path d="M3,5L7.5,5.8L5,9ZM22,19L17.5,18.2L20,15Z" fill="#1da4ea" stroke="#1da4ea" stroke-width="0.5"/></svg><span style="left:92.4px">对齐</span></div>
<div class="prow" style="top:81px;"><svg style="left:64.4px" viewBox="0 0 24 24"><path d="M1,6V18M23,6V18M3,12H21" fill="none" stroke="#1da4ea" stroke-width="1.4"/><path d="M2.5,12L7,9.5V14.5ZM21.500,12L17,9.500V14.500Z" fill="#1da4ea" stroke="#1da4ea" stroke-width="0.3"/></svg><span style="left:92.4px">线性</span></div>
<div class="prow" style="top:121px;"><svg style="left:64.4px" viewBox="0 0 24 24"><defs><pattern id="ha" width="3" height="3" patternUnits="userSpaceOnUse" patternTransform="rotate(-50)"><path d="M0,1.5H3" stroke="#1da4ea" stroke-width="1"/></pattern></defs><path d="M2,1.500L22,9.500V13H2Z" fill="url(#ha)" stroke="#1da4ea" stroke-width="1.200"/><path d="M1.500,15V23M22.500,15V23M3,19H21M6,17L3,19L6,21M18,17L21,19L18,21" fill="none" stroke="#1da4ea" stroke-width="1.2"/></svg><span style="left:92.4px">面积</span></div>
<div class="prow" style="top:161px;"><svg style="left:46.8px" viewBox="0 0 24 24"><defs><pattern id="hr" width="3" height="3" patternUnits="userSpaceOnUse" patternTransform="rotate(-50)"><path d="M0,1.5H3" stroke="#1da4ea" stroke-width="1"/></pattern></defs><rect x="2" y="1.500" width="20.500" height="11.500" fill="url(#hr)" stroke="#1da4ea" stroke-width="1.200"/><path d="M1.500,15.500V23M22.500,15.500V23M3,19.500H21M6,17.500L3,19.500L6,21.500M18,17.500L21,19.500L18,21.500" fill="none" stroke="#1da4ea" stroke-width="1.2"/></svg><span style="left:74.8px">矩形面积</span></div>
<div class="prow" style="top:201px;"><svg style="left:46.8px" viewBox="0 0 24 24"><path d="M4,17.500V13Q4,8.500 8,7.800L10,7.500" fill="none" stroke="#1da4ea" stroke-width="1.3"/><path d="M1.500,17.500H7.500V23.500H1.500Z" fill="none" stroke="#1da4ea" stroke-width="1.2"/><path d="M10.500,1.500L15,6M15,1.500L10.500,6M17.500,3.800H23.500M10.500,10.500L12.800,13L15,10.500M12.800,13V16M17.500,13H23.500" fill="none" stroke="#1da4ea" stroke-width="1.3"/></svg><span style="left:74.8px">坐标标注</span></div>
<div class="prow" style="top:241px;"><svg style="left:29.2px" viewBox="0 0 24 24"><text x="12" y="9" text-anchor="middle" font-family="Liberation Sans,sans-serif" font-weight="bold" font-size="10" fill="#1da4ea" textLength="22.500" lengthAdjust="spacing">A:B</text><path d="M1,13.500H23V21.500H1Z" fill="none" stroke="#1da4ea" stroke-width="1.3"/><path d="M3.500,13.500v3M6,13.500v4M8.500,13.500v3M11,13.500v4M13.500,13.500v3M16,13.500v4M18.500,13.500v3M21,13.500v4" fill="none" stroke="#1da4ea" stroke-width="1"/></svg><span style="left:57.2px">设置标注比例</span></div>
<div class="prow" style="top:281px;"><svg style="left:64.4px" viewBox="0 0 24 24"><path d="M3.500,19.500V15Q3.500,5.500 16,4.500" fill="none" stroke="#b8903a" stroke-width="2.6"/><path d="M15.500,2H20V6.500H15.500ZM1.500,19H5.500V23H1.500Z" fill="#f0f0f0" stroke="#b8903a" stroke-width="1"/><path d="M10,21.500V17Q10,12 16,11.500" fill="none" stroke="#b8903a" stroke-width="1.3"/><path d="M10,23L7.800,19.500H12.200ZM18.500,11.500L15.500,9.500V13.500Z" fill="#b8903a" stroke="#b8903a" stroke-width="0.3"/></svg><span style="left:92.4px">弧长</span></div>
<div class="prow" style="top:321px;"><svg style="left:20.4px" viewBox="0 0 24 24"><path d="M3,3L13.500,13.500" fill="none" stroke="#b8903a" stroke-width="1.8"/><path d="M6.500,22L22.500,6" fill="none" stroke="#b8903a" stroke-width="1.8"/><circle cx="3" cy="3" r="2.300" fill="#b8903a"/><path d="M10.500,16.500L13,19L16,16" fill="none" stroke="#b8903a" stroke-width="1.2"/></svg><span style="left:48.4px">点到直线的距离</span></div>
<div class="prow" style="top:361px;"><svg style="left:46.8px" viewBox="0 0 24 24"><path d="M8.500,3.500L3.500,11.500L9.500,19.500L19.500,19" fill="none" stroke="#b8903a" stroke-width="1.8"/><circle cx="9" cy="3.2" r="2.400" fill="#b8903a"/><circle cx="3.5" cy="11.5" r="2.400" fill="#b8903a"/><circle cx="9.5" cy="19.5" r="2.400" fill="#b8903a"/><circle cx="20" cy="19" r="2.400" fill="#b8903a"/></svg><span style="left:74.8px">连续测量</span></div>
<div class="prow" style="top:401px;"><svg style="left:46.8px" viewBox="0 0 24 24"><rect x="1.500" y="1.500" width="20" height="20" rx="2" fill="none" stroke="#b8903a" stroke-width="2" stroke-dasharray="4.500 2.500"/><path d="M7,17V11Q7,8 10,8H17" fill="none" stroke="#b8903a" stroke-width="1.6"/><circle cx="7" cy="17.500" r="1.800" fill="#b8903a"/><circle cx="17.500" cy="8" r="1.800" fill="#b8903a"/><path d="M19,18L23,19.500L20.500,23Z" fill="#b8903a" stroke="#b8903a" stroke-width="0.5"/></svg><span style="left:74.8px">批量测量</span></div>
<div class="prow" style="top:441px;"><svg style="left:29.2px" viewBox="0 0 24 24"><path d="M7.500,4L2.500,11.500L7.500,19L16.500,19.500" fill="none" stroke="#b8903a" stroke-width="2"/><circle cx="7.5" cy="4" r="2.200" fill="#b8903a"/><circle cx="2.5" cy="11.5" r="2.200" fill="#b8903a"/><circle cx="7.5" cy="19" r="2.200" fill="#b8903a"/><circle cx="17" cy="19.5" r="2.200" fill="#b8903a"/><path d="M11.500,4.500L14.500,2H22.500V14H14.500L11.500,11.500Z" fill="none" stroke="#b8903a" stroke-width="1.3"/><path d="M15.500,5.500H20.500M15.500,8H20.500M15.500,10.500H20.500" fill="none" stroke="#b8903a" stroke-width="1"/></svg><span style="left:57.2px">查看分段长度</span></div>
<div class="prow" style="top:481px;"><svg style="left:11.6px" viewBox="0 0 24 24"><path d="M1.500,12L12,1.500L15,4.500M22,11.500L12,22.500Z" fill="none" stroke="#b8903a" stroke-width="1.5"/><path d="M12,22.500L1.500,12" fill="none" stroke="#b8903a" stroke-width="1.5"/><path d="M6,12L10.500,7.500M8,14L13,9M10,16L13,13" fill="none" stroke="#b8903a" stroke-width="1"/><path d="M14,14L21.500,2.500L23.500,4L16.500,15.500Z" fill="#b8903a" stroke="#b8903a" stroke-width="0.8"/><path d="M13,17.500L14,14L16.500,15.500Z" fill="#b8903a" stroke="#b8903a" stroke-width="0.5"/></svg><span style="left:39.6px">修改单个标注属性</span></div>
<div class="prow" style="top:521px;"><svg style="left:29.2px" viewBox="0 0 24 24"><defs><pattern id="hc" width="4.5" height="4.5" patternUnits="userSpaceOnUse" patternTransform="rotate(-50)"><path d="M0,2.25H4.5" stroke="#b8903a" stroke-width="1.1"/></pattern></defs><path d="M6.500,3.500H18Q23,3.500 23,9V14Q23,21.500 15,21.500H5Q1.500,21.500 2,17L4,6Q4.500,3.500 6.500,3.500Z" fill="url(#hc)" stroke="#b8903a" stroke-width="1.800"/><circle cx="14" cy="2.8" r="1.900" fill="#b8903a"/><circle cx="3" cy="20" r="1.900" fill="#b8903a"/><circle cx="19.5" cy="20.5" r="1.900" fill="#b8903a"/></svg><span style="left:57.2px">面积(含弧线)</span></div>
<div class="prow" style="top:561px;"><svg style="left:29.2px" viewBox="0 0 24 24"><defs><pattern id="hf" width="3" height="3" patternUnits="userSpaceOnUse" patternTransform="rotate(-50)"><path d="M0,1.5H3" stroke="#b8903a" stroke-width="1"/></pattern></defs><path d="M7,3L19,2Q24,4 23,10L20,19Q14,23 6,21.500Q1,19 2,12Z" fill="url(#hf)" stroke="#b8903a" stroke-width="1.800"/><ellipse cx="13" cy="11" rx="6.500" ry="4.500" transform="rotate(-20 13 11)" fill="#f0f0f0" stroke="#b8903a" stroke-width="1.600"/></svg><span style="left:57.2px">测量填充面积</span></div>
<div class="prow" style="top:601px;"><svg style="left:38.0px" viewBox="0 0 24 24"><defs><pattern id="hs" width="4" height="4" patternUnits="userSpaceOnUse" patternTransform="rotate(-50)"><path d="M0,2.0H4" stroke="#b8903a" stroke-width="1.1"/></pattern></defs><path d="M2,6.500H16V22H2Z" fill="url(#hs)" stroke="#b8903a" stroke-width="1.700"/><path d="M2,6.500L8,2H22.500L16,6.500M22.500,2V17.500L16,22" fill="none" stroke="#b8903a" stroke-width="1.7"/></svg><span style="left:66.0px">计算侧面积</span></div>
<div class="prow" style="top:641px;"><svg style="left:46.8px" viewBox="0 0 24 24"><defs><pattern id="ho" width="3" height="3" patternUnits="userSpaceOnUse" patternTransform="rotate(-50)"><path d="M0,1.5H3" stroke="#b8903a" stroke-width="1"/></pattern></defs><path d="M2,2.500L22.500,8L21,20L5,22.500Z" fill="none" stroke="#b8903a" stroke-width="1.7"/><path d="M8,8.500L17.500,10.500L16.500,16.500L9.500,17.500Z" fill="url(#ho)" stroke="#b8903a" stroke-width="1.500"/><circle cx="2" cy="2.5" r="1.800" fill="#b8903a"/><circle cx="22.5" cy="8" r="1.800" fill="#b8903a"/><circle cx="21" cy="20" r="1.800" fill="#b8903a"/><circle cx="5" cy="22.5" r="1.800" fill="#b8903a"/></svg><span style="left:74.8px">面积偏移</span></div>
<div class="prow" style="top:681px;"><svg style="left:55.6px" viewBox="0 0 24 24"><defs><pattern id="hq" width="5.5" height="5.5" patternUnits="userSpaceOnUse" patternTransform="rotate(-50)"><path d="M0,2.75H5.5" stroke="#b8903a" stroke-width="2.4"/></pattern></defs><circle cx="12" cy="12" r="9.500" fill="url(#hq)" stroke="#b8903a" stroke-width="1.800"/><circle cx="12" cy="2.2" r="2" fill="#b8903a"/><circle cx="2.5" cy="12" r="2" fill="#b8903a"/><circle cx="21.5" cy="12" r="2" fill="#b8903a"/><circle cx="12" cy="21.8" r="2" fill="#b8903a"/></svg><span style="left:83.6px">测量圆</span></div>
<div class="prow" style="top:721px;"><svg style="left:64.4px" viewBox="0 0 24 24"><circle cx="12" cy="12" r="10.300" fill="none" stroke="#b8903a" stroke-width="1.800"/><path d="M12.500,12.500L6,6M6,10.500V6H10.500" fill="none" stroke="#b8903a" stroke-width="1.6"/></svg><span style="left:92.4px">半径</span></div>
<div class="prow" style="top:761px;"><svg style="left:46.8px" viewBox="0 0 24 24"><path d="M3,21L16,3.500M3,21H23" fill="none" stroke="#b8903a" stroke-width="1.7"/><circle cx="3.500" cy="20.500" r="2.600" fill="#b8903a"/><path d="M11,10.500Q17.500,13 18,19.500" fill="none" stroke="#b8903a" stroke-width="1.3"/><path d="M18,21L16,16.500H20ZM10,9.800L14.200,9.500L12.500,13Z" fill="#b8903a" stroke="#b8903a" stroke-width="0.3"/><path d="M14.500,14L17,12.500" fill="none" stroke="#b8903a" stroke-width="1.2"/></svg><span style="left:74.8px">测量角度</span></div>
<div class="prow" style="top:801px;"><svg style="left:46.8px" viewBox="0 0 24 24"><path d="M22,15V1.500H1.500V23H7" fill="none" stroke="#b8903a" stroke-width="1.7"/><path d="M6.500,15v-3M9.500,15v-5M12.500,15v-4M15.500,15v-6" fill="none" stroke="#b8903a" stroke-width="1.5"/><path d="M6,9.500L9.500,6.500L12,8.500L16.500,5" fill="none" stroke="#b8903a" stroke-width="1.2"/><path d="M9.500,17.500V23.500M22.500,17.500V23.500M11,20.500H21M13.500,18.500L11,20.500L13.500,22.500M18.500,18.500L21,20.500L18.500,22.500" fill="none" stroke="#b8903a" stroke-width="1.2"/></svg><span style="left:74.8px">测量统计</span></div>
</div><div id="bottom">
<svg width="1920" height="31" viewBox="0 1023 1920 31" style="position:absolute;left:0;top:-2px"><path d="M2,1023H107.5L99.5,1049Q98.6,1052 95.5,1052H12.5Q9.4,1052 8.6,1049Z" fill="#000"/><path d="M106,1024.5L114,1049Q115,1052 118,1052H200Q203,1052 204,1049L212,1024.5" fill="#fff" stroke="#222" stroke-width="1.2"/><path d="M209.5,1024.5L217.5,1049Q218.5,1052 221.5,1052H302Q305,1052 306,1049L314,1024.5" fill="#fff" stroke="#222" stroke-width="1.2"/><path d="M1616.5,1054L1634,1050.2Q1636.4,1049.8 1637,1052V1054Z" fill="#f56a2c"/><g font-family="Liberation Sans,Noto Sans CJK SC,sans-serif" font-size="18.5" text-anchor="middle"><text x="55" y="1046" fill="#fff">模型</text><text x="160" y="1046" fill="#111">布局1</text><text x="264" y="1046" fill="#111">布局2</text></g></svg>
</div><svg id="ov" width="1920" height="1054" viewBox="0 0 1920 1054" style="position:absolute;left:0;top:0;pointer-events:none">
<rect x="624.3" y="4.600" width="62.800" height="75.600" rx="5" fill="none" stroke="#ff2015" stroke-width="4.800"/>
<polygon points="630,93 200.300,454.400 198.800,448.200 192,466.600 212,463.600 205.600,461" fill="#ff2015"/>
<polygon points="215,507.600 1201,541.400 1197.600,535.300 1214.700,545.900 1196.800,555.400 1201,549.400" fill="#ff2015"/>
<rect x="52.600" y="483" width="137.800" height="42" rx="4" fill="none" stroke="#ff2015" stroke-width="4"/>
</svg>
</body></html>
